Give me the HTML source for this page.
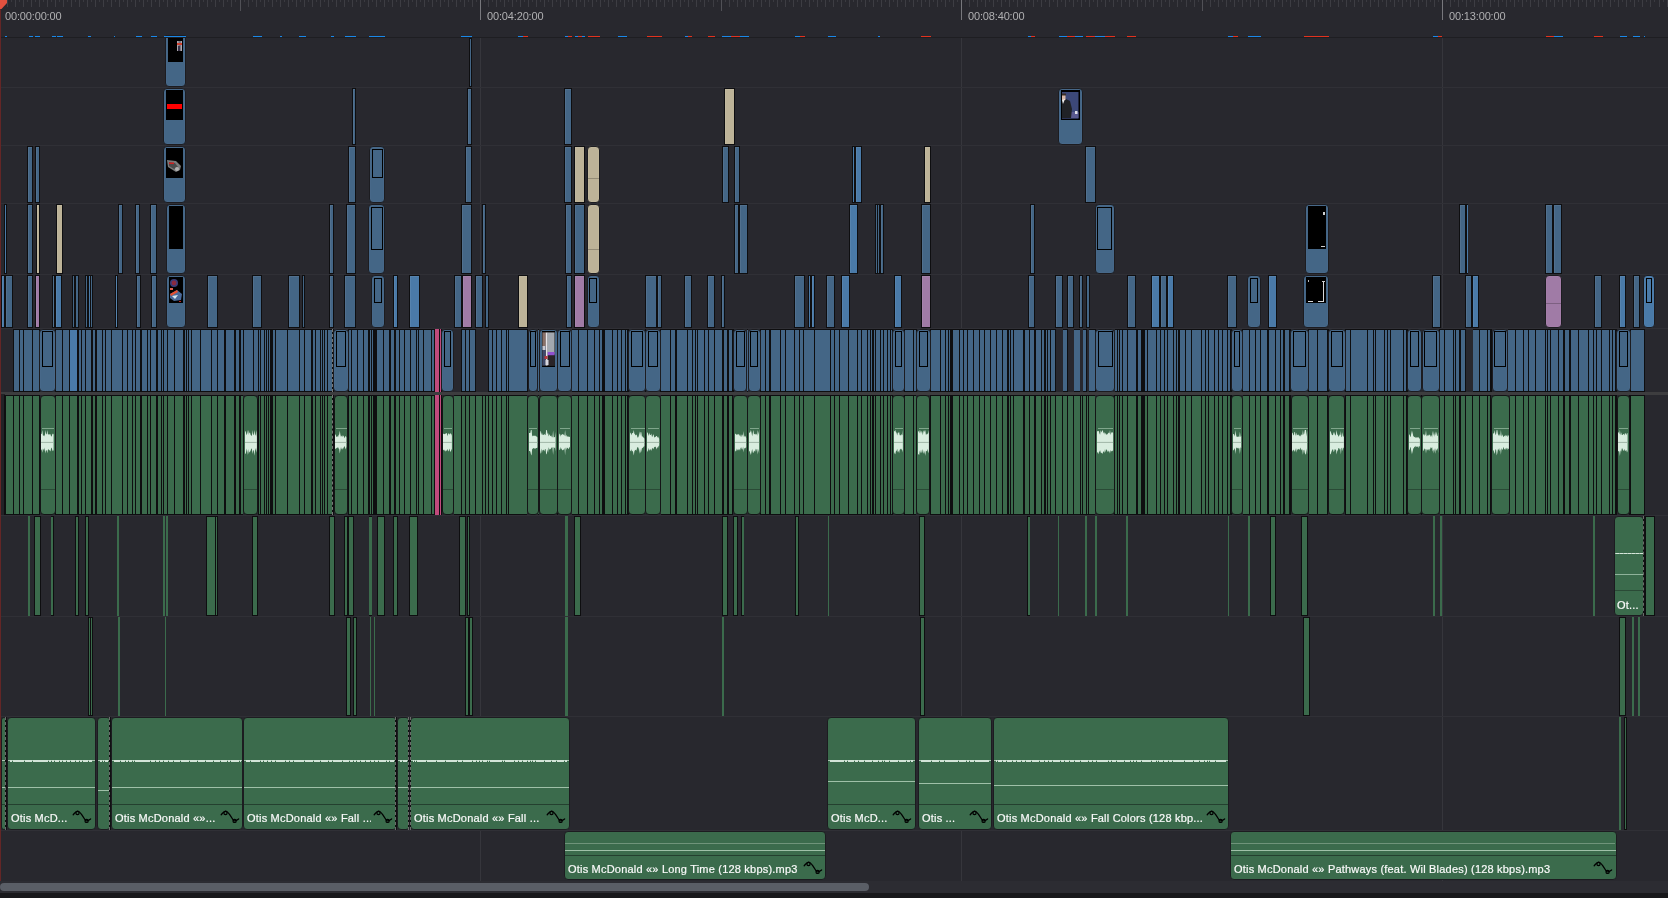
<!DOCTYPE html><html><head><meta charset="utf-8"><style>
html,body{margin:0;padding:0}
body{width:1668px;height:898px;overflow:hidden;position:relative;background:#28282e;font-family:"Liberation Sans",sans-serif}
div{position:absolute;box-sizing:border-box}
.tc{color:#b0b0b2;font-size:11px;line-height:12px;white-space:nowrap;letter-spacing:-0.15px}
.lbl{color:#fafafa;font-size:11px;line-height:14px;white-space:nowrap;overflow:hidden;letter-spacing:0.2px;-webkit-text-stroke:0.2px #fafafa}
.cv{position:absolute;left:0;top:0}
.lbl,.tc{will-change:transform}
</style></head><body>
<div style="left:7.01px;top:0.00px;width:1.00px;height:6.80px;background:#3d3d43"></div>
<div style="left:11.01px;top:0.00px;width:1.00px;height:1.90px;background:#3a3a40"></div>
<div style="left:15.02px;top:0.00px;width:1.00px;height:6.80px;background:#3d3d43"></div>
<div style="left:19.02px;top:0.00px;width:1.00px;height:1.90px;background:#3a3a40"></div>
<div style="left:23.04px;top:0.00px;width:1.00px;height:6.80px;background:#3d3d43"></div>
<div style="left:27.04px;top:0.00px;width:1.00px;height:1.90px;background:#3a3a40"></div>
<div style="left:31.06px;top:0.00px;width:1.00px;height:6.80px;background:#3d3d43"></div>
<div style="left:35.06px;top:0.00px;width:1.00px;height:1.90px;background:#3a3a40"></div>
<div style="left:39.08px;top:0.00px;width:1.00px;height:6.80px;background:#3d3d43"></div>
<div style="left:43.08px;top:0.00px;width:1.00px;height:1.90px;background:#3a3a40"></div>
<div style="left:47.09px;top:0.00px;width:1.00px;height:6.80px;background:#3d3d43"></div>
<div style="left:51.09px;top:0.00px;width:1.00px;height:1.90px;background:#3a3a40"></div>
<div style="left:55.11px;top:0.00px;width:1.00px;height:6.80px;background:#3d3d43"></div>
<div style="left:59.11px;top:0.00px;width:1.00px;height:1.90px;background:#3a3a40"></div>
<div style="left:63.13px;top:0.00px;width:1.00px;height:6.80px;background:#3d3d43"></div>
<div style="left:67.13px;top:0.00px;width:1.00px;height:1.90px;background:#3a3a40"></div>
<div style="left:71.14px;top:0.00px;width:1.00px;height:6.80px;background:#3d3d43"></div>
<div style="left:75.14px;top:0.00px;width:1.00px;height:1.90px;background:#3a3a40"></div>
<div style="left:79.16px;top:0.00px;width:1.00px;height:6.80px;background:#3d3d43"></div>
<div style="left:83.16px;top:0.00px;width:1.00px;height:1.90px;background:#3a3a40"></div>
<div style="left:87.18px;top:0.00px;width:1.00px;height:6.80px;background:#3d3d43"></div>
<div style="left:91.18px;top:0.00px;width:1.00px;height:1.90px;background:#3a3a40"></div>
<div style="left:95.19px;top:0.00px;width:1.00px;height:6.80px;background:#3d3d43"></div>
<div style="left:99.19px;top:0.00px;width:1.00px;height:1.90px;background:#3a3a40"></div>
<div style="left:103.21px;top:0.00px;width:1.00px;height:6.80px;background:#3d3d43"></div>
<div style="left:107.21px;top:0.00px;width:1.00px;height:1.90px;background:#3a3a40"></div>
<div style="left:111.23px;top:0.00px;width:1.00px;height:6.80px;background:#3d3d43"></div>
<div style="left:115.23px;top:0.00px;width:1.00px;height:1.90px;background:#3a3a40"></div>
<div style="left:119.25px;top:0.00px;width:1.00px;height:6.80px;background:#3d3d43"></div>
<div style="left:123.25px;top:0.00px;width:1.00px;height:1.90px;background:#3a3a40"></div>
<div style="left:127.26px;top:0.00px;width:1.00px;height:6.80px;background:#3d3d43"></div>
<div style="left:131.26px;top:0.00px;width:1.00px;height:1.90px;background:#3a3a40"></div>
<div style="left:135.28px;top:0.00px;width:1.00px;height:6.80px;background:#3d3d43"></div>
<div style="left:139.28px;top:0.00px;width:1.00px;height:1.90px;background:#3a3a40"></div>
<div style="left:143.30px;top:0.00px;width:1.00px;height:6.80px;background:#3d3d43"></div>
<div style="left:147.30px;top:0.00px;width:1.00px;height:1.90px;background:#3a3a40"></div>
<div style="left:151.31px;top:0.00px;width:1.00px;height:6.80px;background:#3d3d43"></div>
<div style="left:155.31px;top:0.00px;width:1.00px;height:1.90px;background:#3a3a40"></div>
<div style="left:159.33px;top:0.00px;width:1.00px;height:6.80px;background:#3d3d43"></div>
<div style="left:163.33px;top:0.00px;width:1.00px;height:1.90px;background:#3a3a40"></div>
<div style="left:167.35px;top:0.00px;width:1.00px;height:6.80px;background:#3d3d43"></div>
<div style="left:171.35px;top:0.00px;width:1.00px;height:1.90px;background:#3a3a40"></div>
<div style="left:175.36px;top:0.00px;width:1.00px;height:6.80px;background:#3d3d43"></div>
<div style="left:179.36px;top:0.00px;width:1.00px;height:1.90px;background:#3a3a40"></div>
<div style="left:183.38px;top:0.00px;width:1.00px;height:6.80px;background:#3d3d43"></div>
<div style="left:187.38px;top:0.00px;width:1.00px;height:1.90px;background:#3a3a40"></div>
<div style="left:191.40px;top:0.00px;width:1.00px;height:6.80px;background:#3d3d43"></div>
<div style="left:195.40px;top:0.00px;width:1.00px;height:1.90px;background:#3a3a40"></div>
<div style="left:199.42px;top:0.00px;width:1.00px;height:6.80px;background:#3d3d43"></div>
<div style="left:203.42px;top:0.00px;width:1.00px;height:1.90px;background:#3a3a40"></div>
<div style="left:207.43px;top:0.00px;width:1.00px;height:6.80px;background:#3d3d43"></div>
<div style="left:211.43px;top:0.00px;width:1.00px;height:1.90px;background:#3a3a40"></div>
<div style="left:215.45px;top:0.00px;width:1.00px;height:6.80px;background:#3d3d43"></div>
<div style="left:219.45px;top:0.00px;width:1.00px;height:1.90px;background:#3a3a40"></div>
<div style="left:223.47px;top:0.00px;width:1.00px;height:6.80px;background:#3d3d43"></div>
<div style="left:227.47px;top:0.00px;width:1.00px;height:1.90px;background:#3a3a40"></div>
<div style="left:231.48px;top:0.00px;width:1.00px;height:6.80px;background:#3d3d43"></div>
<div style="left:235.48px;top:0.00px;width:1.00px;height:1.90px;background:#3a3a40"></div>
<div style="left:239.50px;top:0.00px;width:1.00px;height:10.50px;background:#505056"></div>
<div style="left:243.50px;top:0.00px;width:1.00px;height:1.90px;background:#3a3a40"></div>
<div style="left:247.52px;top:0.00px;width:1.00px;height:6.80px;background:#3d3d43"></div>
<div style="left:251.52px;top:0.00px;width:1.00px;height:1.90px;background:#3a3a40"></div>
<div style="left:255.53px;top:0.00px;width:1.00px;height:6.80px;background:#3d3d43"></div>
<div style="left:259.53px;top:0.00px;width:1.00px;height:1.90px;background:#3a3a40"></div>
<div style="left:263.55px;top:0.00px;width:1.00px;height:6.80px;background:#3d3d43"></div>
<div style="left:267.55px;top:0.00px;width:1.00px;height:1.90px;background:#3a3a40"></div>
<div style="left:271.57px;top:0.00px;width:1.00px;height:6.80px;background:#3d3d43"></div>
<div style="left:275.57px;top:0.00px;width:1.00px;height:1.90px;background:#3a3a40"></div>
<div style="left:279.58px;top:0.00px;width:1.00px;height:6.80px;background:#3d3d43"></div>
<div style="left:283.58px;top:0.00px;width:1.00px;height:1.90px;background:#3a3a40"></div>
<div style="left:287.60px;top:0.00px;width:1.00px;height:6.80px;background:#3d3d43"></div>
<div style="left:291.60px;top:0.00px;width:1.00px;height:1.90px;background:#3a3a40"></div>
<div style="left:295.62px;top:0.00px;width:1.00px;height:6.80px;background:#3d3d43"></div>
<div style="left:299.62px;top:0.00px;width:1.00px;height:1.90px;background:#3a3a40"></div>
<div style="left:303.64px;top:0.00px;width:1.00px;height:6.80px;background:#3d3d43"></div>
<div style="left:307.64px;top:0.00px;width:1.00px;height:1.90px;background:#3a3a40"></div>
<div style="left:311.65px;top:0.00px;width:1.00px;height:6.80px;background:#3d3d43"></div>
<div style="left:315.65px;top:0.00px;width:1.00px;height:1.90px;background:#3a3a40"></div>
<div style="left:319.67px;top:0.00px;width:1.00px;height:6.80px;background:#3d3d43"></div>
<div style="left:323.67px;top:0.00px;width:1.00px;height:1.90px;background:#3a3a40"></div>
<div style="left:327.69px;top:0.00px;width:1.00px;height:6.80px;background:#3d3d43"></div>
<div style="left:331.69px;top:0.00px;width:1.00px;height:1.90px;background:#3a3a40"></div>
<div style="left:335.70px;top:0.00px;width:1.00px;height:6.80px;background:#3d3d43"></div>
<div style="left:339.70px;top:0.00px;width:1.00px;height:1.90px;background:#3a3a40"></div>
<div style="left:343.72px;top:0.00px;width:1.00px;height:6.80px;background:#3d3d43"></div>
<div style="left:347.72px;top:0.00px;width:1.00px;height:1.90px;background:#3a3a40"></div>
<div style="left:351.74px;top:0.00px;width:1.00px;height:6.80px;background:#3d3d43"></div>
<div style="left:355.74px;top:0.00px;width:1.00px;height:1.90px;background:#3a3a40"></div>
<div style="left:359.75px;top:0.00px;width:1.00px;height:6.80px;background:#3d3d43"></div>
<div style="left:363.75px;top:0.00px;width:1.00px;height:1.90px;background:#3a3a40"></div>
<div style="left:367.77px;top:0.00px;width:1.00px;height:6.80px;background:#3d3d43"></div>
<div style="left:371.77px;top:0.00px;width:1.00px;height:1.90px;background:#3a3a40"></div>
<div style="left:375.79px;top:0.00px;width:1.00px;height:6.80px;background:#3d3d43"></div>
<div style="left:379.79px;top:0.00px;width:1.00px;height:1.90px;background:#3a3a40"></div>
<div style="left:383.81px;top:0.00px;width:1.00px;height:6.80px;background:#3d3d43"></div>
<div style="left:387.81px;top:0.00px;width:1.00px;height:1.90px;background:#3a3a40"></div>
<div style="left:391.82px;top:0.00px;width:1.00px;height:6.80px;background:#3d3d43"></div>
<div style="left:395.82px;top:0.00px;width:1.00px;height:1.90px;background:#3a3a40"></div>
<div style="left:399.84px;top:0.00px;width:1.00px;height:6.80px;background:#3d3d43"></div>
<div style="left:403.84px;top:0.00px;width:1.00px;height:1.90px;background:#3a3a40"></div>
<div style="left:407.86px;top:0.00px;width:1.00px;height:6.80px;background:#3d3d43"></div>
<div style="left:411.86px;top:0.00px;width:1.00px;height:1.90px;background:#3a3a40"></div>
<div style="left:415.87px;top:0.00px;width:1.00px;height:6.80px;background:#3d3d43"></div>
<div style="left:419.87px;top:0.00px;width:1.00px;height:1.90px;background:#3a3a40"></div>
<div style="left:423.89px;top:0.00px;width:1.00px;height:6.80px;background:#3d3d43"></div>
<div style="left:427.89px;top:0.00px;width:1.00px;height:1.90px;background:#3a3a40"></div>
<div style="left:431.91px;top:0.00px;width:1.00px;height:6.80px;background:#3d3d43"></div>
<div style="left:435.91px;top:0.00px;width:1.00px;height:1.90px;background:#3a3a40"></div>
<div style="left:439.92px;top:0.00px;width:1.00px;height:6.80px;background:#3d3d43"></div>
<div style="left:443.92px;top:0.00px;width:1.00px;height:1.90px;background:#3a3a40"></div>
<div style="left:447.94px;top:0.00px;width:1.00px;height:6.80px;background:#3d3d43"></div>
<div style="left:451.94px;top:0.00px;width:1.00px;height:1.90px;background:#3a3a40"></div>
<div style="left:455.96px;top:0.00px;width:1.00px;height:6.80px;background:#3d3d43"></div>
<div style="left:459.96px;top:0.00px;width:1.00px;height:1.90px;background:#3a3a40"></div>
<div style="left:463.98px;top:0.00px;width:1.00px;height:6.80px;background:#3d3d43"></div>
<div style="left:467.98px;top:0.00px;width:1.00px;height:1.90px;background:#3a3a40"></div>
<div style="left:471.99px;top:0.00px;width:1.00px;height:6.80px;background:#3d3d43"></div>
<div style="left:475.99px;top:0.00px;width:1.00px;height:1.90px;background:#3a3a40"></div>
<div style="left:480.01px;top:0.00px;width:1.00px;height:20.40px;background:#77777c"></div>
<div style="left:484.01px;top:0.00px;width:1.00px;height:1.90px;background:#3a3a40"></div>
<div style="left:488.03px;top:0.00px;width:1.00px;height:6.80px;background:#3d3d43"></div>
<div style="left:492.03px;top:0.00px;width:1.00px;height:1.90px;background:#3a3a40"></div>
<div style="left:496.04px;top:0.00px;width:1.00px;height:6.80px;background:#3d3d43"></div>
<div style="left:500.04px;top:0.00px;width:1.00px;height:1.90px;background:#3a3a40"></div>
<div style="left:504.06px;top:0.00px;width:1.00px;height:6.80px;background:#3d3d43"></div>
<div style="left:508.06px;top:0.00px;width:1.00px;height:1.90px;background:#3a3a40"></div>
<div style="left:512.08px;top:0.00px;width:1.00px;height:6.80px;background:#3d3d43"></div>
<div style="left:516.08px;top:0.00px;width:1.00px;height:1.90px;background:#3a3a40"></div>
<div style="left:520.10px;top:0.00px;width:1.00px;height:6.80px;background:#3d3d43"></div>
<div style="left:524.10px;top:0.00px;width:1.00px;height:1.90px;background:#3a3a40"></div>
<div style="left:528.11px;top:0.00px;width:1.00px;height:6.80px;background:#3d3d43"></div>
<div style="left:532.11px;top:0.00px;width:1.00px;height:1.90px;background:#3a3a40"></div>
<div style="left:536.13px;top:0.00px;width:1.00px;height:6.80px;background:#3d3d43"></div>
<div style="left:540.13px;top:0.00px;width:1.00px;height:1.90px;background:#3a3a40"></div>
<div style="left:544.15px;top:0.00px;width:1.00px;height:6.80px;background:#3d3d43"></div>
<div style="left:548.15px;top:0.00px;width:1.00px;height:1.90px;background:#3a3a40"></div>
<div style="left:552.16px;top:0.00px;width:1.00px;height:6.80px;background:#3d3d43"></div>
<div style="left:556.16px;top:0.00px;width:1.00px;height:1.90px;background:#3a3a40"></div>
<div style="left:560.18px;top:0.00px;width:1.00px;height:6.80px;background:#3d3d43"></div>
<div style="left:564.18px;top:0.00px;width:1.00px;height:1.90px;background:#3a3a40"></div>
<div style="left:568.20px;top:0.00px;width:1.00px;height:6.80px;background:#3d3d43"></div>
<div style="left:572.20px;top:0.00px;width:1.00px;height:1.90px;background:#3a3a40"></div>
<div style="left:576.21px;top:0.00px;width:1.00px;height:6.80px;background:#3d3d43"></div>
<div style="left:580.21px;top:0.00px;width:1.00px;height:1.90px;background:#3a3a40"></div>
<div style="left:584.23px;top:0.00px;width:1.00px;height:6.80px;background:#3d3d43"></div>
<div style="left:588.23px;top:0.00px;width:1.00px;height:1.90px;background:#3a3a40"></div>
<div style="left:592.25px;top:0.00px;width:1.00px;height:6.80px;background:#3d3d43"></div>
<div style="left:596.25px;top:0.00px;width:1.00px;height:1.90px;background:#3a3a40"></div>
<div style="left:600.26px;top:0.00px;width:1.00px;height:6.80px;background:#3d3d43"></div>
<div style="left:604.26px;top:0.00px;width:1.00px;height:1.90px;background:#3a3a40"></div>
<div style="left:608.28px;top:0.00px;width:1.00px;height:6.80px;background:#3d3d43"></div>
<div style="left:612.28px;top:0.00px;width:1.00px;height:1.90px;background:#3a3a40"></div>
<div style="left:616.30px;top:0.00px;width:1.00px;height:6.80px;background:#3d3d43"></div>
<div style="left:620.30px;top:0.00px;width:1.00px;height:1.90px;background:#3a3a40"></div>
<div style="left:624.32px;top:0.00px;width:1.00px;height:6.80px;background:#3d3d43"></div>
<div style="left:628.32px;top:0.00px;width:1.00px;height:1.90px;background:#3a3a40"></div>
<div style="left:632.33px;top:0.00px;width:1.00px;height:6.80px;background:#3d3d43"></div>
<div style="left:636.33px;top:0.00px;width:1.00px;height:1.90px;background:#3a3a40"></div>
<div style="left:640.35px;top:0.00px;width:1.00px;height:6.80px;background:#3d3d43"></div>
<div style="left:644.35px;top:0.00px;width:1.00px;height:1.90px;background:#3a3a40"></div>
<div style="left:648.37px;top:0.00px;width:1.00px;height:6.80px;background:#3d3d43"></div>
<div style="left:652.37px;top:0.00px;width:1.00px;height:1.90px;background:#3a3a40"></div>
<div style="left:656.38px;top:0.00px;width:1.00px;height:6.80px;background:#3d3d43"></div>
<div style="left:660.38px;top:0.00px;width:1.00px;height:1.90px;background:#3a3a40"></div>
<div style="left:664.40px;top:0.00px;width:1.00px;height:6.80px;background:#3d3d43"></div>
<div style="left:668.40px;top:0.00px;width:1.00px;height:1.90px;background:#3a3a40"></div>
<div style="left:672.42px;top:0.00px;width:1.00px;height:6.80px;background:#3d3d43"></div>
<div style="left:676.42px;top:0.00px;width:1.00px;height:1.90px;background:#3a3a40"></div>
<div style="left:680.43px;top:0.00px;width:1.00px;height:6.80px;background:#3d3d43"></div>
<div style="left:684.43px;top:0.00px;width:1.00px;height:1.90px;background:#3a3a40"></div>
<div style="left:688.45px;top:0.00px;width:1.00px;height:6.80px;background:#3d3d43"></div>
<div style="left:692.45px;top:0.00px;width:1.00px;height:1.90px;background:#3a3a40"></div>
<div style="left:696.47px;top:0.00px;width:1.00px;height:6.80px;background:#3d3d43"></div>
<div style="left:700.47px;top:0.00px;width:1.00px;height:1.90px;background:#3a3a40"></div>
<div style="left:704.49px;top:0.00px;width:1.00px;height:6.80px;background:#3d3d43"></div>
<div style="left:708.49px;top:0.00px;width:1.00px;height:1.90px;background:#3a3a40"></div>
<div style="left:712.50px;top:0.00px;width:1.00px;height:6.80px;background:#3d3d43"></div>
<div style="left:716.50px;top:0.00px;width:1.00px;height:1.90px;background:#3a3a40"></div>
<div style="left:720.52px;top:0.00px;width:1.00px;height:10.50px;background:#505056"></div>
<div style="left:724.52px;top:0.00px;width:1.00px;height:1.90px;background:#3a3a40"></div>
<div style="left:728.54px;top:0.00px;width:1.00px;height:6.80px;background:#3d3d43"></div>
<div style="left:732.54px;top:0.00px;width:1.00px;height:1.90px;background:#3a3a40"></div>
<div style="left:736.55px;top:0.00px;width:1.00px;height:6.80px;background:#3d3d43"></div>
<div style="left:740.55px;top:0.00px;width:1.00px;height:1.90px;background:#3a3a40"></div>
<div style="left:744.57px;top:0.00px;width:1.00px;height:6.80px;background:#3d3d43"></div>
<div style="left:748.57px;top:0.00px;width:1.00px;height:1.90px;background:#3a3a40"></div>
<div style="left:752.59px;top:0.00px;width:1.00px;height:6.80px;background:#3d3d43"></div>
<div style="left:756.59px;top:0.00px;width:1.00px;height:1.90px;background:#3a3a40"></div>
<div style="left:760.61px;top:0.00px;width:1.00px;height:6.80px;background:#3d3d43"></div>
<div style="left:764.61px;top:0.00px;width:1.00px;height:1.90px;background:#3a3a40"></div>
<div style="left:768.62px;top:0.00px;width:1.00px;height:6.80px;background:#3d3d43"></div>
<div style="left:772.62px;top:0.00px;width:1.00px;height:1.90px;background:#3a3a40"></div>
<div style="left:776.64px;top:0.00px;width:1.00px;height:6.80px;background:#3d3d43"></div>
<div style="left:780.64px;top:0.00px;width:1.00px;height:1.90px;background:#3a3a40"></div>
<div style="left:784.66px;top:0.00px;width:1.00px;height:6.80px;background:#3d3d43"></div>
<div style="left:788.66px;top:0.00px;width:1.00px;height:1.90px;background:#3a3a40"></div>
<div style="left:792.67px;top:0.00px;width:1.00px;height:6.80px;background:#3d3d43"></div>
<div style="left:796.67px;top:0.00px;width:1.00px;height:1.90px;background:#3a3a40"></div>
<div style="left:800.69px;top:0.00px;width:1.00px;height:6.80px;background:#3d3d43"></div>
<div style="left:804.69px;top:0.00px;width:1.00px;height:1.90px;background:#3a3a40"></div>
<div style="left:808.71px;top:0.00px;width:1.00px;height:6.80px;background:#3d3d43"></div>
<div style="left:812.71px;top:0.00px;width:1.00px;height:1.90px;background:#3a3a40"></div>
<div style="left:816.72px;top:0.00px;width:1.00px;height:6.80px;background:#3d3d43"></div>
<div style="left:820.72px;top:0.00px;width:1.00px;height:1.90px;background:#3a3a40"></div>
<div style="left:824.74px;top:0.00px;width:1.00px;height:6.80px;background:#3d3d43"></div>
<div style="left:828.74px;top:0.00px;width:1.00px;height:1.90px;background:#3a3a40"></div>
<div style="left:832.76px;top:0.00px;width:1.00px;height:6.80px;background:#3d3d43"></div>
<div style="left:836.76px;top:0.00px;width:1.00px;height:1.90px;background:#3a3a40"></div>
<div style="left:840.77px;top:0.00px;width:1.00px;height:6.80px;background:#3d3d43"></div>
<div style="left:844.77px;top:0.00px;width:1.00px;height:1.90px;background:#3a3a40"></div>
<div style="left:848.79px;top:0.00px;width:1.00px;height:6.80px;background:#3d3d43"></div>
<div style="left:852.79px;top:0.00px;width:1.00px;height:1.90px;background:#3a3a40"></div>
<div style="left:856.81px;top:0.00px;width:1.00px;height:6.80px;background:#3d3d43"></div>
<div style="left:860.81px;top:0.00px;width:1.00px;height:1.90px;background:#3a3a40"></div>
<div style="left:864.83px;top:0.00px;width:1.00px;height:6.80px;background:#3d3d43"></div>
<div style="left:868.83px;top:0.00px;width:1.00px;height:1.90px;background:#3a3a40"></div>
<div style="left:872.84px;top:0.00px;width:1.00px;height:6.80px;background:#3d3d43"></div>
<div style="left:876.84px;top:0.00px;width:1.00px;height:1.90px;background:#3a3a40"></div>
<div style="left:880.86px;top:0.00px;width:1.00px;height:6.80px;background:#3d3d43"></div>
<div style="left:884.86px;top:0.00px;width:1.00px;height:1.90px;background:#3a3a40"></div>
<div style="left:888.88px;top:0.00px;width:1.00px;height:6.80px;background:#3d3d43"></div>
<div style="left:892.88px;top:0.00px;width:1.00px;height:1.90px;background:#3a3a40"></div>
<div style="left:896.89px;top:0.00px;width:1.00px;height:6.80px;background:#3d3d43"></div>
<div style="left:900.89px;top:0.00px;width:1.00px;height:1.90px;background:#3a3a40"></div>
<div style="left:904.91px;top:0.00px;width:1.00px;height:6.80px;background:#3d3d43"></div>
<div style="left:908.91px;top:0.00px;width:1.00px;height:1.90px;background:#3a3a40"></div>
<div style="left:912.93px;top:0.00px;width:1.00px;height:6.80px;background:#3d3d43"></div>
<div style="left:916.93px;top:0.00px;width:1.00px;height:1.90px;background:#3a3a40"></div>
<div style="left:920.94px;top:0.00px;width:1.00px;height:6.80px;background:#3d3d43"></div>
<div style="left:924.94px;top:0.00px;width:1.00px;height:1.90px;background:#3a3a40"></div>
<div style="left:928.96px;top:0.00px;width:1.00px;height:6.80px;background:#3d3d43"></div>
<div style="left:932.96px;top:0.00px;width:1.00px;height:1.90px;background:#3a3a40"></div>
<div style="left:936.98px;top:0.00px;width:1.00px;height:6.80px;background:#3d3d43"></div>
<div style="left:940.98px;top:0.00px;width:1.00px;height:1.90px;background:#3a3a40"></div>
<div style="left:945.00px;top:0.00px;width:1.00px;height:6.80px;background:#3d3d43"></div>
<div style="left:949.00px;top:0.00px;width:1.00px;height:1.90px;background:#3a3a40"></div>
<div style="left:953.01px;top:0.00px;width:1.00px;height:6.80px;background:#3d3d43"></div>
<div style="left:957.01px;top:0.00px;width:1.00px;height:1.90px;background:#3a3a40"></div>
<div style="left:961.03px;top:0.00px;width:1.00px;height:20.40px;background:#77777c"></div>
<div style="left:965.03px;top:0.00px;width:1.00px;height:1.90px;background:#3a3a40"></div>
<div style="left:969.05px;top:0.00px;width:1.00px;height:6.80px;background:#3d3d43"></div>
<div style="left:973.05px;top:0.00px;width:1.00px;height:1.90px;background:#3a3a40"></div>
<div style="left:977.06px;top:0.00px;width:1.00px;height:6.80px;background:#3d3d43"></div>
<div style="left:981.06px;top:0.00px;width:1.00px;height:1.90px;background:#3a3a40"></div>
<div style="left:985.08px;top:0.00px;width:1.00px;height:6.80px;background:#3d3d43"></div>
<div style="left:989.08px;top:0.00px;width:1.00px;height:1.90px;background:#3a3a40"></div>
<div style="left:993.10px;top:0.00px;width:1.00px;height:6.80px;background:#3d3d43"></div>
<div style="left:997.10px;top:0.00px;width:1.00px;height:1.90px;background:#3a3a40"></div>
<div style="left:1001.11px;top:0.00px;width:1.00px;height:6.80px;background:#3d3d43"></div>
<div style="left:1005.11px;top:0.00px;width:1.00px;height:1.90px;background:#3a3a40"></div>
<div style="left:1009.13px;top:0.00px;width:1.00px;height:6.80px;background:#3d3d43"></div>
<div style="left:1013.13px;top:0.00px;width:1.00px;height:1.90px;background:#3a3a40"></div>
<div style="left:1017.15px;top:0.00px;width:1.00px;height:6.80px;background:#3d3d43"></div>
<div style="left:1021.15px;top:0.00px;width:1.00px;height:1.90px;background:#3a3a40"></div>
<div style="left:1025.17px;top:0.00px;width:1.00px;height:6.80px;background:#3d3d43"></div>
<div style="left:1029.17px;top:0.00px;width:1.00px;height:1.90px;background:#3a3a40"></div>
<div style="left:1033.18px;top:0.00px;width:1.00px;height:6.80px;background:#3d3d43"></div>
<div style="left:1037.18px;top:0.00px;width:1.00px;height:1.90px;background:#3a3a40"></div>
<div style="left:1041.20px;top:0.00px;width:1.00px;height:6.80px;background:#3d3d43"></div>
<div style="left:1045.20px;top:0.00px;width:1.00px;height:1.90px;background:#3a3a40"></div>
<div style="left:1049.22px;top:0.00px;width:1.00px;height:6.80px;background:#3d3d43"></div>
<div style="left:1053.22px;top:0.00px;width:1.00px;height:1.90px;background:#3a3a40"></div>
<div style="left:1057.23px;top:0.00px;width:1.00px;height:6.80px;background:#3d3d43"></div>
<div style="left:1061.23px;top:0.00px;width:1.00px;height:1.90px;background:#3a3a40"></div>
<div style="left:1065.25px;top:0.00px;width:1.00px;height:6.80px;background:#3d3d43"></div>
<div style="left:1069.25px;top:0.00px;width:1.00px;height:1.90px;background:#3a3a40"></div>
<div style="left:1073.27px;top:0.00px;width:1.00px;height:6.80px;background:#3d3d43"></div>
<div style="left:1077.27px;top:0.00px;width:1.00px;height:1.90px;background:#3a3a40"></div>
<div style="left:1081.28px;top:0.00px;width:1.00px;height:6.80px;background:#3d3d43"></div>
<div style="left:1085.28px;top:0.00px;width:1.00px;height:1.90px;background:#3a3a40"></div>
<div style="left:1089.30px;top:0.00px;width:1.00px;height:6.80px;background:#3d3d43"></div>
<div style="left:1093.30px;top:0.00px;width:1.00px;height:1.90px;background:#3a3a40"></div>
<div style="left:1097.32px;top:0.00px;width:1.00px;height:6.80px;background:#3d3d43"></div>
<div style="left:1101.32px;top:0.00px;width:1.00px;height:1.90px;background:#3a3a40"></div>
<div style="left:1105.34px;top:0.00px;width:1.00px;height:6.80px;background:#3d3d43"></div>
<div style="left:1109.34px;top:0.00px;width:1.00px;height:1.90px;background:#3a3a40"></div>
<div style="left:1113.35px;top:0.00px;width:1.00px;height:6.80px;background:#3d3d43"></div>
<div style="left:1117.35px;top:0.00px;width:1.00px;height:1.90px;background:#3a3a40"></div>
<div style="left:1121.37px;top:0.00px;width:1.00px;height:6.80px;background:#3d3d43"></div>
<div style="left:1125.37px;top:0.00px;width:1.00px;height:1.90px;background:#3a3a40"></div>
<div style="left:1129.39px;top:0.00px;width:1.00px;height:6.80px;background:#3d3d43"></div>
<div style="left:1133.39px;top:0.00px;width:1.00px;height:1.90px;background:#3a3a40"></div>
<div style="left:1137.40px;top:0.00px;width:1.00px;height:6.80px;background:#3d3d43"></div>
<div style="left:1141.40px;top:0.00px;width:1.00px;height:1.90px;background:#3a3a40"></div>
<div style="left:1145.42px;top:0.00px;width:1.00px;height:6.80px;background:#3d3d43"></div>
<div style="left:1149.42px;top:0.00px;width:1.00px;height:1.90px;background:#3a3a40"></div>
<div style="left:1153.44px;top:0.00px;width:1.00px;height:6.80px;background:#3d3d43"></div>
<div style="left:1157.44px;top:0.00px;width:1.00px;height:1.90px;background:#3a3a40"></div>
<div style="left:1161.45px;top:0.00px;width:1.00px;height:6.80px;background:#3d3d43"></div>
<div style="left:1165.45px;top:0.00px;width:1.00px;height:1.90px;background:#3a3a40"></div>
<div style="left:1169.47px;top:0.00px;width:1.00px;height:6.80px;background:#3d3d43"></div>
<div style="left:1173.47px;top:0.00px;width:1.00px;height:1.90px;background:#3a3a40"></div>
<div style="left:1177.49px;top:0.00px;width:1.00px;height:6.80px;background:#3d3d43"></div>
<div style="left:1181.49px;top:0.00px;width:1.00px;height:1.90px;background:#3a3a40"></div>
<div style="left:1185.51px;top:0.00px;width:1.00px;height:6.80px;background:#3d3d43"></div>
<div style="left:1189.51px;top:0.00px;width:1.00px;height:1.90px;background:#3a3a40"></div>
<div style="left:1193.52px;top:0.00px;width:1.00px;height:6.80px;background:#3d3d43"></div>
<div style="left:1197.52px;top:0.00px;width:1.00px;height:1.90px;background:#3a3a40"></div>
<div style="left:1201.54px;top:0.00px;width:1.00px;height:10.50px;background:#505056"></div>
<div style="left:1205.54px;top:0.00px;width:1.00px;height:1.90px;background:#3a3a40"></div>
<div style="left:1209.56px;top:0.00px;width:1.00px;height:6.80px;background:#3d3d43"></div>
<div style="left:1213.56px;top:0.00px;width:1.00px;height:1.90px;background:#3a3a40"></div>
<div style="left:1217.57px;top:0.00px;width:1.00px;height:6.80px;background:#3d3d43"></div>
<div style="left:1221.57px;top:0.00px;width:1.00px;height:1.90px;background:#3a3a40"></div>
<div style="left:1225.59px;top:0.00px;width:1.00px;height:6.80px;background:#3d3d43"></div>
<div style="left:1229.59px;top:0.00px;width:1.00px;height:1.90px;background:#3a3a40"></div>
<div style="left:1233.61px;top:0.00px;width:1.00px;height:6.80px;background:#3d3d43"></div>
<div style="left:1237.61px;top:0.00px;width:1.00px;height:1.90px;background:#3a3a40"></div>
<div style="left:1241.62px;top:0.00px;width:1.00px;height:6.80px;background:#3d3d43"></div>
<div style="left:1245.62px;top:0.00px;width:1.00px;height:1.90px;background:#3a3a40"></div>
<div style="left:1249.64px;top:0.00px;width:1.00px;height:6.80px;background:#3d3d43"></div>
<div style="left:1253.64px;top:0.00px;width:1.00px;height:1.90px;background:#3a3a40"></div>
<div style="left:1257.66px;top:0.00px;width:1.00px;height:6.80px;background:#3d3d43"></div>
<div style="left:1261.66px;top:0.00px;width:1.00px;height:1.90px;background:#3a3a40"></div>
<div style="left:1265.68px;top:0.00px;width:1.00px;height:6.80px;background:#3d3d43"></div>
<div style="left:1269.68px;top:0.00px;width:1.00px;height:1.90px;background:#3a3a40"></div>
<div style="left:1273.69px;top:0.00px;width:1.00px;height:6.80px;background:#3d3d43"></div>
<div style="left:1277.69px;top:0.00px;width:1.00px;height:1.90px;background:#3a3a40"></div>
<div style="left:1281.71px;top:0.00px;width:1.00px;height:6.80px;background:#3d3d43"></div>
<div style="left:1285.71px;top:0.00px;width:1.00px;height:1.90px;background:#3a3a40"></div>
<div style="left:1289.73px;top:0.00px;width:1.00px;height:6.80px;background:#3d3d43"></div>
<div style="left:1293.73px;top:0.00px;width:1.00px;height:1.90px;background:#3a3a40"></div>
<div style="left:1297.74px;top:0.00px;width:1.00px;height:6.80px;background:#3d3d43"></div>
<div style="left:1301.74px;top:0.00px;width:1.00px;height:1.90px;background:#3a3a40"></div>
<div style="left:1305.76px;top:0.00px;width:1.00px;height:6.80px;background:#3d3d43"></div>
<div style="left:1309.76px;top:0.00px;width:1.00px;height:1.90px;background:#3a3a40"></div>
<div style="left:1313.78px;top:0.00px;width:1.00px;height:6.80px;background:#3d3d43"></div>
<div style="left:1317.78px;top:0.00px;width:1.00px;height:1.90px;background:#3a3a40"></div>
<div style="left:1321.79px;top:0.00px;width:1.00px;height:6.80px;background:#3d3d43"></div>
<div style="left:1325.79px;top:0.00px;width:1.00px;height:1.90px;background:#3a3a40"></div>
<div style="left:1329.81px;top:0.00px;width:1.00px;height:6.80px;background:#3d3d43"></div>
<div style="left:1333.81px;top:0.00px;width:1.00px;height:1.90px;background:#3a3a40"></div>
<div style="left:1337.83px;top:0.00px;width:1.00px;height:6.80px;background:#3d3d43"></div>
<div style="left:1341.83px;top:0.00px;width:1.00px;height:1.90px;background:#3a3a40"></div>
<div style="left:1345.85px;top:0.00px;width:1.00px;height:6.80px;background:#3d3d43"></div>
<div style="left:1349.85px;top:0.00px;width:1.00px;height:1.90px;background:#3a3a40"></div>
<div style="left:1353.86px;top:0.00px;width:1.00px;height:6.80px;background:#3d3d43"></div>
<div style="left:1357.86px;top:0.00px;width:1.00px;height:1.90px;background:#3a3a40"></div>
<div style="left:1361.88px;top:0.00px;width:1.00px;height:6.80px;background:#3d3d43"></div>
<div style="left:1365.88px;top:0.00px;width:1.00px;height:1.90px;background:#3a3a40"></div>
<div style="left:1369.90px;top:0.00px;width:1.00px;height:6.80px;background:#3d3d43"></div>
<div style="left:1373.90px;top:0.00px;width:1.00px;height:1.90px;background:#3a3a40"></div>
<div style="left:1377.91px;top:0.00px;width:1.00px;height:6.80px;background:#3d3d43"></div>
<div style="left:1381.91px;top:0.00px;width:1.00px;height:1.90px;background:#3a3a40"></div>
<div style="left:1385.93px;top:0.00px;width:1.00px;height:6.80px;background:#3d3d43"></div>
<div style="left:1389.93px;top:0.00px;width:1.00px;height:1.90px;background:#3a3a40"></div>
<div style="left:1393.95px;top:0.00px;width:1.00px;height:6.80px;background:#3d3d43"></div>
<div style="left:1397.95px;top:0.00px;width:1.00px;height:1.90px;background:#3a3a40"></div>
<div style="left:1401.96px;top:0.00px;width:1.00px;height:6.80px;background:#3d3d43"></div>
<div style="left:1405.96px;top:0.00px;width:1.00px;height:1.90px;background:#3a3a40"></div>
<div style="left:1409.98px;top:0.00px;width:1.00px;height:6.80px;background:#3d3d43"></div>
<div style="left:1413.98px;top:0.00px;width:1.00px;height:1.90px;background:#3a3a40"></div>
<div style="left:1418.00px;top:0.00px;width:1.00px;height:6.80px;background:#3d3d43"></div>
<div style="left:1422.00px;top:0.00px;width:1.00px;height:1.90px;background:#3a3a40"></div>
<div style="left:1426.02px;top:0.00px;width:1.00px;height:6.80px;background:#3d3d43"></div>
<div style="left:1430.02px;top:0.00px;width:1.00px;height:1.90px;background:#3a3a40"></div>
<div style="left:1434.03px;top:0.00px;width:1.00px;height:6.80px;background:#3d3d43"></div>
<div style="left:1438.03px;top:0.00px;width:1.00px;height:1.90px;background:#3a3a40"></div>
<div style="left:1442.05px;top:0.00px;width:1.00px;height:20.40px;background:#77777c"></div>
<div style="left:1446.05px;top:0.00px;width:1.00px;height:1.90px;background:#3a3a40"></div>
<div style="left:1450.07px;top:0.00px;width:1.00px;height:6.80px;background:#3d3d43"></div>
<div style="left:1454.07px;top:0.00px;width:1.00px;height:1.90px;background:#3a3a40"></div>
<div style="left:1458.08px;top:0.00px;width:1.00px;height:6.80px;background:#3d3d43"></div>
<div style="left:1462.08px;top:0.00px;width:1.00px;height:1.90px;background:#3a3a40"></div>
<div style="left:1466.10px;top:0.00px;width:1.00px;height:6.80px;background:#3d3d43"></div>
<div style="left:1470.10px;top:0.00px;width:1.00px;height:1.90px;background:#3a3a40"></div>
<div style="left:1474.12px;top:0.00px;width:1.00px;height:6.80px;background:#3d3d43"></div>
<div style="left:1478.12px;top:0.00px;width:1.00px;height:1.90px;background:#3a3a40"></div>
<div style="left:1482.13px;top:0.00px;width:1.00px;height:6.80px;background:#3d3d43"></div>
<div style="left:1486.13px;top:0.00px;width:1.00px;height:1.90px;background:#3a3a40"></div>
<div style="left:1490.15px;top:0.00px;width:1.00px;height:6.80px;background:#3d3d43"></div>
<div style="left:1494.15px;top:0.00px;width:1.00px;height:1.90px;background:#3a3a40"></div>
<div style="left:1498.17px;top:0.00px;width:1.00px;height:6.80px;background:#3d3d43"></div>
<div style="left:1502.17px;top:0.00px;width:1.00px;height:1.90px;background:#3a3a40"></div>
<div style="left:1506.19px;top:0.00px;width:1.00px;height:6.80px;background:#3d3d43"></div>
<div style="left:1510.19px;top:0.00px;width:1.00px;height:1.90px;background:#3a3a40"></div>
<div style="left:1514.20px;top:0.00px;width:1.00px;height:6.80px;background:#3d3d43"></div>
<div style="left:1518.20px;top:0.00px;width:1.00px;height:1.90px;background:#3a3a40"></div>
<div style="left:1522.22px;top:0.00px;width:1.00px;height:6.80px;background:#3d3d43"></div>
<div style="left:1526.22px;top:0.00px;width:1.00px;height:1.90px;background:#3a3a40"></div>
<div style="left:1530.24px;top:0.00px;width:1.00px;height:6.80px;background:#3d3d43"></div>
<div style="left:1534.24px;top:0.00px;width:1.00px;height:1.90px;background:#3a3a40"></div>
<div style="left:1538.25px;top:0.00px;width:1.00px;height:6.80px;background:#3d3d43"></div>
<div style="left:1542.25px;top:0.00px;width:1.00px;height:1.90px;background:#3a3a40"></div>
<div style="left:1546.27px;top:0.00px;width:1.00px;height:6.80px;background:#3d3d43"></div>
<div style="left:1550.27px;top:0.00px;width:1.00px;height:1.90px;background:#3a3a40"></div>
<div style="left:1554.29px;top:0.00px;width:1.00px;height:6.80px;background:#3d3d43"></div>
<div style="left:1558.29px;top:0.00px;width:1.00px;height:1.90px;background:#3a3a40"></div>
<div style="left:1562.30px;top:0.00px;width:1.00px;height:6.80px;background:#3d3d43"></div>
<div style="left:1566.30px;top:0.00px;width:1.00px;height:1.90px;background:#3a3a40"></div>
<div style="left:1570.32px;top:0.00px;width:1.00px;height:6.80px;background:#3d3d43"></div>
<div style="left:1574.32px;top:0.00px;width:1.00px;height:1.90px;background:#3a3a40"></div>
<div style="left:1578.34px;top:0.00px;width:1.00px;height:6.80px;background:#3d3d43"></div>
<div style="left:1582.34px;top:0.00px;width:1.00px;height:1.90px;background:#3a3a40"></div>
<div style="left:1586.36px;top:0.00px;width:1.00px;height:6.80px;background:#3d3d43"></div>
<div style="left:1590.36px;top:0.00px;width:1.00px;height:1.90px;background:#3a3a40"></div>
<div style="left:1594.37px;top:0.00px;width:1.00px;height:6.80px;background:#3d3d43"></div>
<div style="left:1598.37px;top:0.00px;width:1.00px;height:1.90px;background:#3a3a40"></div>
<div style="left:1602.39px;top:0.00px;width:1.00px;height:6.80px;background:#3d3d43"></div>
<div style="left:1606.39px;top:0.00px;width:1.00px;height:1.90px;background:#3a3a40"></div>
<div style="left:1610.41px;top:0.00px;width:1.00px;height:6.80px;background:#3d3d43"></div>
<div style="left:1614.41px;top:0.00px;width:1.00px;height:1.90px;background:#3a3a40"></div>
<div style="left:1618.42px;top:0.00px;width:1.00px;height:6.80px;background:#3d3d43"></div>
<div style="left:1622.42px;top:0.00px;width:1.00px;height:1.90px;background:#3a3a40"></div>
<div style="left:1626.44px;top:0.00px;width:1.00px;height:6.80px;background:#3d3d43"></div>
<div style="left:1630.44px;top:0.00px;width:1.00px;height:1.90px;background:#3a3a40"></div>
<div style="left:1634.46px;top:0.00px;width:1.00px;height:6.80px;background:#3d3d43"></div>
<div style="left:1638.46px;top:0.00px;width:1.00px;height:1.90px;background:#3a3a40"></div>
<div style="left:1642.47px;top:0.00px;width:1.00px;height:6.80px;background:#3d3d43"></div>
<div style="left:1646.47px;top:0.00px;width:1.00px;height:1.90px;background:#3a3a40"></div>
<div style="left:1650.49px;top:0.00px;width:1.00px;height:6.80px;background:#3d3d43"></div>
<div style="left:1654.49px;top:0.00px;width:1.00px;height:1.90px;background:#3a3a40"></div>
<div style="left:1658.51px;top:0.00px;width:1.00px;height:6.80px;background:#3d3d43"></div>
<div style="left:1662.51px;top:0.00px;width:1.00px;height:1.90px;background:#3a3a40"></div>
<div style="left:1666.53px;top:0.00px;width:1.00px;height:6.80px;background:#3d3d43"></div>
<div style="left:1670.53px;top:0.00px;width:1.00px;height:1.90px;background:#3a3a40"></div>
<div class="tc" style="left:5px;top:10px">00:00:00:00</div>
<div class="tc" style="left:486.5px;top:10px">00:04:20:00</div>
<div class="tc" style="left:967.5px;top:10px">00:08:40:00</div>
<div class="tc" style="left:1448.5px;top:10px">00:13:00:00</div>
<div style="left:480.10px;top:38.00px;width:1.00px;height:843.00px;background:#36363c"></div>
<div style="left:961.10px;top:38.00px;width:1.00px;height:843.00px;background:#36363c"></div>
<div style="left:1441.90px;top:38.00px;width:1.00px;height:843.00px;background:#36363c"></div>
<div style="left:0.00px;top:87.00px;width:1668.00px;height:0.90px;background:#303036"></div>
<div style="left:0.00px;top:145.00px;width:1668.00px;height:0.90px;background:#303036"></div>
<div style="left:0.00px;top:203.00px;width:1668.00px;height:0.90px;background:#303036"></div>
<div style="left:0.00px;top:274.05px;width:1668.00px;height:0.90px;background:#303036"></div>
<div style="left:0.00px;top:327.90px;width:1668.00px;height:0.90px;background:#303036"></div>
<div style="left:0.00px;top:515.00px;width:1668.00px;height:0.90px;background:#303036"></div>
<div style="left:0.00px;top:616.00px;width:1668.00px;height:0.90px;background:#303036"></div>
<div style="left:0.00px;top:716.00px;width:1668.00px;height:0.90px;background:#303036"></div>
<div style="left:0.00px;top:829.90px;width:1668.00px;height:0.90px;background:#303036"></div>
<div style="left:0.00px;top:391.80px;width:1668.00px;height:3.10px;background:#3d3d3f"></div>
<div style="left:165.00px;top:35.00px;width:21.00px;height:51.75px;background:#446686;border:1px solid #1c1c20;border-radius:0 0 4px 4px;box-shadow:inset 0 0 0 1px #54779a30"></div>
<div style="left:167.70px;top:38.00px;width:15.60px;height:24.45px;background:#000;overflow:hidden"></div>
<div style="left:176.90px;top:40.80px;width:5.10px;height:10.20px;background:linear-gradient(90deg,#b8b4b8,#6a6470 60%,#c8c0c8)"></div><div style="left:176.90px;top:42.70px;width:5.10px;height:2.00px;background:#d04030"></div><div style="left:178.00px;top:46.00px;width:2.00px;height:5.00px;background:#3a3448"></div>
<div style="left:468.80px;top:37.60px;width:3.40px;height:49.15px;background:#0e0e10"></div>
<div style="left:469.80px;top:38.60px;width:1.40px;height:47.15px;background:#446686"></div>
<div style="left:163.40px;top:88.10px;width:22.20px;height:56.65px;background:#446686;border:1px solid #1c1c20;border-radius:4px;box-shadow:inset 0 0 0 1px #54779a30"></div>
<div style="left:166.10px;top:90.30px;width:16.80px;height:30.15px;background:#000;overflow:hidden"></div>
<div style="left:166.90px;top:104.20px;width:15.10px;height:4.90px;background:#ff0000"></div>
<div style="left:352.00px;top:88.10px;width:3.60px;height:56.65px;background:#446686;border:1px solid #0e0e10;box-shadow:inset 1px 1px 0 rgba(255,255,255,0.07)"></div>
<div style="left:466.80px;top:88.10px;width:5.10px;height:56.65px;background:#446686;border:1px solid #0e0e10;box-shadow:inset 1px 1px 0 rgba(255,255,255,0.07)"></div>
<div style="left:564.00px;top:88.10px;width:7.80px;height:56.65px;background:#446686;border:1px solid #0e0e10;box-shadow:inset 1px 1px 0 rgba(255,255,255,0.07)"></div>
<div style="left:724.00px;top:88.10px;width:10.80px;height:56.65px;background:#bdb398;border:1px solid #0e0e10;box-shadow:inset 1px 1px 0 rgba(255,255,255,0.07)"></div>
<div style="left:1058.00px;top:88.10px;width:24.90px;height:56.65px;background:#446686;border:1px solid #1c1c20;border-radius:4px;box-shadow:inset 0 0 0 1px #54779a30"></div>
<div style="left:1060.70px;top:90.30px;width:19.50px;height:30.15px;background:#000;overflow:hidden"></div>
<svg style="position:absolute;left:1061.2px;top:91.1px" width="18.5" height="28.7"><rect x="1" y="1" width="16.5" height="26.7" fill="#3c4878"/><rect x="9" y="21" width="8.5" height="6" fill="#5a5a90"/><polygon points="1,10 5,8 9,10 11,18 10,27 1,27" fill="#202226"/><rect x="1" y="3" width="3.5" height="6" fill="#d8b8a8"/><polygon points="1,9 4,8 2,13" fill="#f0f0f0"/><rect x="1" y="2.5" width="4" height="2" fill="#3a2e28"/><rect x="14" y="20" width="2.5" height="3" fill="#e0e0e8"/></svg>
<div style="left:27.00px;top:146.10px;width:5.70px;height:56.65px;background:#446686;border:1px solid #0e0e10;box-shadow:inset 1px 1px 0 rgba(255,255,255,0.07)"></div>
<div style="left:35.30px;top:146.10px;width:4.50px;height:56.65px;background:#446686;border:1px solid #0e0e10;box-shadow:inset 1px 1px 0 rgba(255,255,255,0.07)"></div>
<div style="left:163.40px;top:146.10px;width:22.20px;height:56.65px;background:#446686;border:1px solid #1c1c20;border-radius:4px;box-shadow:inset 0 0 0 1px #54779a30"></div>
<div style="left:166.10px;top:148.30px;width:16.80px;height:30.15px;background:#000;overflow:hidden"></div>
<svg style="position:absolute;left:166px;top:158px" width="16" height="15"><polygon points="1,2 10,3 15,8 14,12 10,14 2,9" fill="#7a7a7a"/><polygon points="3,4 9,5 12,9 8,11 3,8" fill="#4a4a4a"/><rect x="3" y="4.5" width="5" height="1.5" fill="#d02020"/><circle cx="11" cy="11" r="2" fill="#b0b0b0"/></svg>
<div style="left:348.00px;top:146.10px;width:7.60px;height:56.65px;background:#446686;border:1px solid #0e0e10;box-shadow:inset 1px 1px 0 rgba(255,255,255,0.07)"></div>
<div style="left:369.10px;top:146.10px;width:15.80px;height:56.65px;background:#446686;border:1px solid #1c1c20;border-radius:4px;box-shadow:inset 0 0 0 1px #54779a30"></div>
<div style="left:371.50px;top:148.50px;width:11.00px;height:29.95px;border:1px solid #000;background:#446686"></div>
<div style="left:465.30px;top:146.10px;width:6.60px;height:56.65px;background:#446686;border:1px solid #0e0e10;box-shadow:inset 1px 1px 0 rgba(255,255,255,0.07)"></div>
<div style="left:564.00px;top:146.10px;width:7.80px;height:56.65px;background:#446686;border:1px solid #0e0e10;box-shadow:inset 1px 1px 0 rgba(255,255,255,0.07)"></div>
<div style="left:574.40px;top:146.10px;width:10.30px;height:56.65px;background:#bdb398;border:1px solid #0e0e10;box-shadow:inset 1px 1px 0 rgba(255,255,255,0.07)"></div>
<div style="left:586.90px;top:146.10px;width:13.00px;height:56.65px;background:#bdb398;border:1px solid #1c1c20;border-radius:4px;box-shadow:inset 0 0 0 1px #d3c8a830"></div>
<div style="left:587.90px;top:177.85px;width:11.00px;height:0.80px;background:#00000038"></div>
<div style="left:722.20px;top:146.10px;width:6.50px;height:56.65px;background:#446686;border:1px solid #0e0e10;box-shadow:inset 1px 1px 0 rgba(255,255,255,0.07)"></div>
<div style="left:734.30px;top:146.10px;width:5.50px;height:56.65px;background:#446686;border:1px solid #0e0e10;box-shadow:inset 1px 1px 0 rgba(255,255,255,0.07)"></div>
<div style="left:851.80px;top:146.10px;width:3.20px;height:56.65px;background:#0e0e10"></div>
<div style="left:852.80px;top:147.10px;width:1.20px;height:54.65px;background:#4a7aa8"></div>
<div style="left:854.80px;top:146.10px;width:7.20px;height:56.65px;background:#4a7aa8;border:1px solid #0e0e10;box-shadow:inset 1px 1px 0 rgba(255,255,255,0.07)"></div>
<div style="left:923.90px;top:146.10px;width:6.70px;height:56.65px;background:#bdb398;border:1px solid #0e0e10;box-shadow:inset 1px 1px 0 rgba(255,255,255,0.07)"></div>
<div style="left:1085.00px;top:146.10px;width:10.60px;height:56.65px;background:#446686;border:1px solid #0e0e10;box-shadow:inset 1px 1px 0 rgba(255,255,255,0.07)"></div>
<div style="left:4.30px;top:204.10px;width:2.90px;height:69.70px;background:#0e0e10"></div>
<div style="left:5.30px;top:205.10px;width:0.90px;height:67.70px;background:#4a7aa8"></div>
<div style="left:27.00px;top:204.10px;width:5.70px;height:69.70px;background:#446686;border:1px solid #0e0e10;box-shadow:inset 1px 1px 0 rgba(255,255,255,0.07)"></div>
<div style="left:36.00px;top:204.10px;width:3.80px;height:69.70px;background:#bdb398;border:1px solid #0e0e10;box-shadow:inset 1px 1px 0 rgba(255,255,255,0.07)"></div>
<div style="left:56.00px;top:204.10px;width:7.00px;height:69.70px;background:#bdb398;border:1px solid #0e0e10;box-shadow:inset 1px 1px 0 rgba(255,255,255,0.07)"></div>
<div style="left:117.90px;top:204.10px;width:5.00px;height:69.70px;background:#446686;border:1px solid #0e0e10;box-shadow:inset 1px 1px 0 rgba(255,255,255,0.07)"></div>
<div style="left:135.20px;top:204.10px;width:5.30px;height:69.70px;background:#446686;border:1px solid #0e0e10;box-shadow:inset 1px 1px 0 rgba(255,255,255,0.07)"></div>
<div style="left:150.00px;top:204.10px;width:6.60px;height:69.70px;background:#446686;border:1px solid #0e0e10;box-shadow:inset 1px 1px 0 rgba(255,255,255,0.07)"></div>
<div style="left:166.10px;top:204.10px;width:19.50px;height:69.70px;background:#446686;border:1px solid #1c1c20;border-radius:4px;box-shadow:inset 0 0 0 1px #54779a30"></div>
<div style="left:168.80px;top:206.30px;width:14.10px;height:43.20px;background:#000;overflow:hidden"></div>
<div style="left:329.00px;top:204.10px;width:5.00px;height:69.70px;background:#446686;border:1px solid #0e0e10;box-shadow:inset 1px 1px 0 rgba(255,255,255,0.07)"></div>
<div style="left:346.00px;top:204.10px;width:9.60px;height:69.70px;background:#446686;border:1px solid #0e0e10;box-shadow:inset 1px 1px 0 rgba(255,255,255,0.07)"></div>
<div style="left:368.10px;top:204.10px;width:16.80px;height:69.70px;background:#446686;border:1px solid #1c1c20;border-radius:4px;box-shadow:inset 0 0 0 1px #54779a30"></div>
<div style="left:370.50px;top:206.50px;width:12.00px;height:43.00px;border:1px solid #000;background:#446686"></div>
<div style="left:461.00px;top:204.10px;width:10.90px;height:69.70px;background:#446686;border:1px solid #0e0e10;box-shadow:inset 1px 1px 0 rgba(255,255,255,0.07)"></div>
<div style="left:481.70px;top:204.10px;width:4.30px;height:69.70px;background:#446686;border:1px solid #0e0e10;box-shadow:inset 1px 1px 0 rgba(255,255,255,0.07)"></div>
<div style="left:565.30px;top:204.10px;width:6.50px;height:69.70px;background:#446686;border:1px solid #0e0e10;box-shadow:inset 1px 1px 0 rgba(255,255,255,0.07)"></div>
<div style="left:574.00px;top:204.10px;width:10.70px;height:69.70px;background:#446686;border:1px solid #0e0e10;box-shadow:inset 1px 1px 0 rgba(255,255,255,0.07)"></div>
<div style="left:586.90px;top:204.10px;width:13.00px;height:69.70px;background:#bdb398;border:1px solid #1c1c20;border-radius:4px;box-shadow:inset 0 0 0 1px #d3c8a830"></div>
<div style="left:587.90px;top:248.90px;width:11.00px;height:0.80px;background:#00000038"></div>
<div style="left:734.30px;top:204.10px;width:5.00px;height:69.70px;background:#446686;border:1px solid #0e0e10;box-shadow:inset 1px 1px 0 rgba(255,255,255,0.07)"></div>
<div style="left:739.30px;top:204.10px;width:8.60px;height:69.70px;background:#446686;border:1px solid #0e0e10;box-shadow:inset 1px 1px 0 rgba(255,255,255,0.07)"></div>
<div style="left:849.00px;top:204.10px;width:8.60px;height:69.70px;background:#4a7aa8;border:1px solid #0e0e10;box-shadow:inset 1px 1px 0 rgba(255,255,255,0.07)"></div>
<div style="left:874.80px;top:204.10px;width:2.90px;height:69.70px;background:#0e0e10"></div>
<div style="left:875.80px;top:205.10px;width:0.90px;height:67.70px;background:#446686"></div>
<div style="left:877.30px;top:204.10px;width:2.90px;height:69.70px;background:#0e0e10"></div>
<div style="left:878.30px;top:205.10px;width:0.90px;height:67.70px;background:#446686"></div>
<div style="left:880.00px;top:204.10px;width:3.60px;height:69.70px;background:#446686;border:1px solid #0e0e10;box-shadow:inset 1px 1px 0 rgba(255,255,255,0.07)"></div>
<div style="left:921.00px;top:204.10px;width:9.60px;height:69.70px;background:#446686;border:1px solid #0e0e10;box-shadow:inset 1px 1px 0 rgba(255,255,255,0.07)"></div>
<div style="left:1030.00px;top:204.10px;width:4.70px;height:69.70px;background:#446686;border:1px solid #0e0e10;box-shadow:inset 1px 1px 0 rgba(255,255,255,0.07)"></div>
<div style="left:1095.00px;top:204.10px;width:19.60px;height:69.70px;background:#446686;border:1px solid #1c1c20;border-radius:4px;box-shadow:inset 0 0 0 1px #54779a30"></div>
<div style="left:1097.40px;top:206.50px;width:14.80px;height:43.00px;border:1px solid #000;background:#446686"></div>
<div style="left:1305.30px;top:204.10px;width:23.30px;height:69.70px;background:#446686;border:1px solid #1c1c20;border-radius:4px;box-shadow:inset 0 0 0 1px #54779a30"></div>
<div style="left:1308.00px;top:206.30px;width:17.90px;height:43.20px;background:#000;overflow:hidden"></div>
<div style="left:1323.00px;top:211.50px;width:1.50px;height:3.00px;background:#cfcfcf"></div><div style="left:1321.00px;top:245.50px;width:4.00px;height:1.00px;background:#cfcfcf"></div>
<div style="left:1459.00px;top:204.10px;width:6.80px;height:69.70px;background:#446686;border:1px solid #0e0e10;box-shadow:inset 1px 1px 0 rgba(255,255,255,0.07)"></div>
<div style="left:1465.60px;top:204.10px;width:2.40px;height:69.70px;background:#0e0e10"></div>
<div style="left:1466.60px;top:205.10px;width:0.50px;height:67.70px;background:#4a7aa8"></div>
<div style="left:1545.00px;top:204.10px;width:7.70px;height:69.70px;background:#446686;border:1px solid #0e0e10;box-shadow:inset 1px 1px 0 rgba(255,255,255,0.07)"></div>
<div style="left:1552.70px;top:204.10px;width:9.10px;height:69.70px;background:#446686;border:1px solid #0e0e10;box-shadow:inset 1px 1px 0 rgba(255,255,255,0.07)"></div>
<div style="left:1.30px;top:275.15px;width:3.70px;height:52.50px;background:#4a7aa8;border:1px solid #0e0e10;box-shadow:inset 1px 1px 0 rgba(255,255,255,0.07)"></div>
<div style="left:5.00px;top:275.15px;width:8.00px;height:52.50px;background:#446686;border:1px solid #0e0e10;box-shadow:inset 1px 1px 0 rgba(255,255,255,0.07)"></div>
<div style="left:27.00px;top:275.15px;width:5.70px;height:52.50px;background:#446686;border:1px solid #0e0e10;box-shadow:inset 1px 1px 0 rgba(255,255,255,0.07)"></div>
<div style="left:35.30px;top:275.15px;width:5.00px;height:52.50px;background:#a07ba6;border:1px solid #0e0e10;box-shadow:inset 1px 1px 0 rgba(255,255,255,0.07)"></div>
<div style="left:51.60px;top:275.15px;width:3.80px;height:52.50px;background:#446686;border:1px solid #0e0e10;box-shadow:inset 1px 1px 0 rgba(255,255,255,0.07)"></div>
<div style="left:55.40px;top:275.15px;width:7.10px;height:52.50px;background:#4a7aa8;border:1px solid #0e0e10;box-shadow:inset 1px 1px 0 rgba(255,255,255,0.07)"></div>
<div style="left:71.60px;top:275.15px;width:3.90px;height:52.50px;background:#0e0e10"></div>
<div style="left:72.60px;top:276.15px;width:1.90px;height:50.50px;background:#446686"></div>
<div style="left:75.10px;top:275.15px;width:3.70px;height:52.50px;background:#0e0e10"></div>
<div style="left:76.10px;top:276.15px;width:1.70px;height:50.50px;background:#446686"></div>
<div style="left:85.40px;top:275.15px;width:2.80px;height:52.50px;background:#0e0e10"></div>
<div style="left:86.40px;top:276.15px;width:0.80px;height:50.50px;background:#446686"></div>
<div style="left:87.80px;top:275.15px;width:2.70px;height:52.50px;background:#0e0e10"></div>
<div style="left:88.80px;top:276.15px;width:0.70px;height:50.50px;background:#4a7aa8"></div>
<div style="left:90.10px;top:275.15px;width:2.80px;height:52.50px;background:#0e0e10"></div>
<div style="left:91.10px;top:276.15px;width:0.80px;height:50.50px;background:#446686"></div>
<div style="left:114.60px;top:275.15px;width:3.80px;height:52.50px;background:#4a7aa8;border:1px solid #0e0e10;box-shadow:inset 1px 1px 0 rgba(255,255,255,0.07)"></div>
<div style="left:135.50px;top:275.15px;width:5.00px;height:52.50px;background:#446686;border:1px solid #0e0e10;box-shadow:inset 1px 1px 0 rgba(255,255,255,0.07)"></div>
<div style="left:150.60px;top:275.15px;width:6.00px;height:52.50px;background:#446686;border:1px solid #0e0e10;box-shadow:inset 1px 1px 0 rgba(255,255,255,0.07)"></div>
<div style="left:166.40px;top:275.15px;width:19.20px;height:52.50px;background:#446686;border:1px solid #1c1c20;border-radius:4px;box-shadow:inset 0 0 0 1px #54779a30"></div>
<div style="left:169.10px;top:277.35px;width:13.80px;height:26.00px;background:#000;overflow:hidden"></div>
<svg style="position:absolute;left:169px;top:278px" width="14" height="25"><circle cx="5" cy="5" r="4" fill="#3a3c78"/><circle cx="5" cy="5" r="2.4" fill="#8a2a40"/><rect x="1" y="10" width="3" height="2" fill="#e06050"/><polygon points="1,16 8,12 13,16 12,22 5,23 1,20" fill="#4a6a9a"/><polygon points="1,16 8,12 9,14 2,18" fill="#e85030"/><polygon points="3,18 9,17 6,21" fill="#d8e8f0"/><rect x="10" y="23" width="2" height="1" fill="#c02020"/></svg>
<div style="left:206.50px;top:275.15px;width:11.10px;height:52.50px;background:#446686;border:1px solid #0e0e10;box-shadow:inset 1px 1px 0 rgba(255,255,255,0.07)"></div>
<div style="left:252.30px;top:275.15px;width:9.60px;height:52.50px;background:#446686;border:1px solid #0e0e10;box-shadow:inset 1px 1px 0 rgba(255,255,255,0.07)"></div>
<div style="left:288.30px;top:275.15px;width:11.40px;height:52.50px;background:#446686;border:1px solid #0e0e10;box-shadow:inset 1px 1px 0 rgba(255,255,255,0.07)"></div>
<div style="left:301.80px;top:275.15px;width:3.10px;height:52.50px;background:#0e0e10"></div>
<div style="left:302.80px;top:276.15px;width:1.10px;height:50.50px;background:#446686"></div>
<div style="left:329.40px;top:275.15px;width:4.30px;height:52.50px;background:#446686;border:1px solid #0e0e10;box-shadow:inset 1px 1px 0 rgba(255,255,255,0.07)"></div>
<div style="left:344.30px;top:275.15px;width:11.30px;height:52.50px;background:#446686;border:1px solid #0e0e10;box-shadow:inset 1px 1px 0 rgba(255,255,255,0.07)"></div>
<div style="left:371.40px;top:275.15px;width:13.50px;height:52.50px;background:#446686;border:1px solid #1c1c20;border-radius:4px;box-shadow:inset 0 0 0 1px #54779a30"></div>
<div style="left:373.80px;top:277.55px;width:8.70px;height:25.80px;border:1px solid #000;background:#446686"></div>
<div style="left:393.40px;top:275.15px;width:4.50px;height:52.50px;background:#4a7aa8;border:1px solid #0e0e10;box-shadow:inset 1px 1px 0 rgba(255,255,255,0.07)"></div>
<div style="left:409.00px;top:275.15px;width:11.00px;height:52.50px;background:#4a7aa8;border:1px solid #0e0e10;box-shadow:inset 1px 1px 0 rgba(255,255,255,0.07)"></div>
<div style="left:453.50px;top:275.15px;width:8.00px;height:52.50px;background:#446686;border:1px solid #0e0e10;box-shadow:inset 1px 1px 0 rgba(255,255,255,0.07)"></div>
<div style="left:461.50px;top:275.15px;width:10.10px;height:52.50px;background:#a07ba6;border:1px solid #0e0e10;box-shadow:inset 1px 1px 0 rgba(255,255,255,0.07)"></div>
<div style="left:475.40px;top:275.15px;width:7.60px;height:52.50px;background:#446686;border:1px solid #0e0e10;box-shadow:inset 1px 1px 0 rgba(255,255,255,0.07)"></div>
<div style="left:484.80px;top:275.15px;width:3.90px;height:52.50px;background:#0e0e10"></div>
<div style="left:485.80px;top:276.15px;width:1.90px;height:50.50px;background:#446686"></div>
<div style="left:517.70px;top:275.15px;width:10.10px;height:52.50px;background:#bdb398;border:1px solid #0e0e10;box-shadow:inset 1px 1px 0 rgba(255,255,255,0.07)"></div>
<div style="left:565.60px;top:275.15px;width:6.00px;height:52.50px;background:#446686;border:1px solid #0e0e10;box-shadow:inset 1px 1px 0 rgba(255,255,255,0.07)"></div>
<div style="left:574.40px;top:275.15px;width:10.60px;height:52.50px;background:#a07ba6;border:1px solid #0e0e10;box-shadow:inset 1px 1px 0 rgba(255,255,255,0.07)"></div>
<div style="left:586.90px;top:275.15px;width:13.00px;height:52.50px;background:#446686;border:1px solid #1c1c20;border-radius:4px;box-shadow:inset 0 0 0 1px #54779a30"></div>
<div style="left:589.30px;top:277.55px;width:8.20px;height:25.80px;border:1px solid #000;background:#446686"></div>
<div style="left:645.40px;top:275.15px;width:11.30px;height:52.50px;background:#446686;border:1px solid #0e0e10;box-shadow:inset 1px 1px 0 rgba(255,255,255,0.07)"></div>
<div style="left:656.70px;top:275.15px;width:5.00px;height:52.50px;background:#446686;border:1px solid #0e0e10;box-shadow:inset 1px 1px 0 rgba(255,255,255,0.07)"></div>
<div style="left:684.00px;top:275.15px;width:7.50px;height:52.50px;background:#446686;border:1px solid #0e0e10;box-shadow:inset 1px 1px 0 rgba(255,255,255,0.07)"></div>
<div style="left:707.00px;top:275.15px;width:8.00px;height:52.50px;background:#446686;border:1px solid #0e0e10;box-shadow:inset 1px 1px 0 rgba(255,255,255,0.07)"></div>
<div style="left:721.00px;top:275.15px;width:4.00px;height:52.50px;background:#446686;border:1px solid #0e0e10;box-shadow:inset 1px 1px 0 rgba(255,255,255,0.07)"></div>
<div style="left:794.40px;top:275.15px;width:10.40px;height:52.50px;background:#446686;border:1px solid #0e0e10;box-shadow:inset 1px 1px 0 rgba(255,255,255,0.07)"></div>
<div style="left:807.60px;top:275.15px;width:3.60px;height:52.50px;background:#0e0e10"></div>
<div style="left:808.60px;top:276.15px;width:1.60px;height:50.50px;background:#4a7aa8"></div>
<div style="left:811.00px;top:275.15px;width:3.80px;height:52.50px;background:#4a7aa8;border:1px solid #0e0e10;box-shadow:inset 1px 1px 0 rgba(255,255,255,0.07)"></div>
<div style="left:826.00px;top:275.15px;width:9.00px;height:52.50px;background:#446686;border:1px solid #0e0e10;box-shadow:inset 1px 1px 0 rgba(255,255,255,0.07)"></div>
<div style="left:840.80px;top:275.15px;width:8.80px;height:52.50px;background:#4a7aa8;border:1px solid #0e0e10;box-shadow:inset 1px 1px 0 rgba(255,255,255,0.07)"></div>
<div style="left:893.60px;top:275.15px;width:8.90px;height:52.50px;background:#4a7aa8;border:1px solid #0e0e10;box-shadow:inset 1px 1px 0 rgba(255,255,255,0.07)"></div>
<div style="left:920.60px;top:275.15px;width:10.00px;height:52.50px;background:#a07ba6;border:1px solid #0e0e10;box-shadow:inset 1px 1px 0 rgba(255,255,255,0.07)"></div>
<div style="left:1027.60px;top:275.15px;width:7.10px;height:52.50px;background:#446686;border:1px solid #0e0e10;box-shadow:inset 1px 1px 0 rgba(255,255,255,0.07)"></div>
<div style="left:1055.30px;top:275.15px;width:7.60px;height:52.50px;background:#446686;border:1px solid #0e0e10;box-shadow:inset 1px 1px 0 rgba(255,255,255,0.07)"></div>
<div style="left:1067.40px;top:275.15px;width:6.30px;height:52.50px;background:#446686;border:1px solid #0e0e10;box-shadow:inset 1px 1px 0 rgba(255,255,255,0.07)"></div>
<div style="left:1079.20px;top:275.15px;width:3.80px;height:52.50px;background:#446686;border:1px solid #0e0e10;box-shadow:inset 1px 1px 0 rgba(255,255,255,0.07)"></div>
<div style="left:1086.10px;top:275.15px;width:3.90px;height:52.50px;background:#0e0e10"></div>
<div style="left:1087.10px;top:276.15px;width:1.90px;height:50.50px;background:#446686"></div>
<div style="left:1126.60px;top:275.15px;width:9.00px;height:52.50px;background:#446686;border:1px solid #0e0e10;box-shadow:inset 1px 1px 0 rgba(255,255,255,0.07)"></div>
<div style="left:1150.50px;top:275.15px;width:9.80px;height:52.50px;background:#4a7aa8;border:1px solid #0e0e10;box-shadow:inset 1px 1px 0 rgba(255,255,255,0.07)"></div>
<div style="left:1160.30px;top:275.15px;width:6.60px;height:52.50px;background:#446686;border:1px solid #0e0e10;box-shadow:inset 1px 1px 0 rgba(255,255,255,0.07)"></div>
<div style="left:1166.90px;top:275.15px;width:6.80px;height:52.50px;background:#4a7aa8;border:1px solid #0e0e10;box-shadow:inset 1px 1px 0 rgba(255,255,255,0.07)"></div>
<div style="left:1227.30px;top:275.15px;width:9.60px;height:52.50px;background:#446686;border:1px solid #0e0e10;box-shadow:inset 1px 1px 0 rgba(255,255,255,0.07)"></div>
<div style="left:1247.40px;top:275.15px;width:13.20px;height:52.50px;background:#446686;border:1px solid #1c1c20;border-radius:4px;box-shadow:inset 0 0 0 1px #54779a30"></div>
<div style="left:1249.80px;top:277.55px;width:8.40px;height:25.80px;border:1px solid #000;background:#446686"></div>
<div style="left:1268.00px;top:275.15px;width:8.50px;height:52.50px;background:#4a7aa8;border:1px solid #0e0e10;box-shadow:inset 1px 1px 0 rgba(255,255,255,0.07)"></div>
<div style="left:1303.40px;top:275.15px;width:25.20px;height:52.50px;background:#446686;border:1px solid #1c1c20;border-radius:4px;box-shadow:inset 0 0 0 1px #54779a30"></div>
<div style="left:1306.10px;top:277.35px;width:19.80px;height:26.00px;background:#000;overflow:hidden"></div>
<div style="left:1323.00px;top:281.00px;width:0.80px;height:20.50px;background:#d8d8d8"></div><div style="left:1307.50px;top:301.00px;width:5.50px;height:1.00px;background:#d8d8d8"></div><div style="left:1318.00px;top:301.00px;width:5.50px;height:1.00px;background:#d8d8d8"></div><div style="left:1307.50px;top:280.00px;width:1.00px;height:1.50px;background:#bbb"></div><div style="left:1322.00px;top:280.50px;width:2.50px;height:1.50px;background:#ccc"></div>
<div style="left:1432.00px;top:275.15px;width:9.40px;height:52.50px;background:#446686;border:1px solid #0e0e10;box-shadow:inset 1px 1px 0 rgba(255,255,255,0.07)"></div>
<div style="left:1465.30px;top:275.15px;width:6.70px;height:52.50px;background:#446686;border:1px solid #0e0e10;box-shadow:inset 1px 1px 0 rgba(255,255,255,0.07)"></div>
<div style="left:1472.00px;top:275.15px;width:7.00px;height:52.50px;background:#4a7aa8;border:1px solid #0e0e10;box-shadow:inset 1px 1px 0 rgba(255,255,255,0.07)"></div>
<div style="left:1545.40px;top:275.15px;width:16.20px;height:52.50px;background:#a07ba6;border:1px solid #1c1c20;border-radius:4px;box-shadow:inset 0 0 0 1px #b690bb30"></div>
<div style="left:1546.40px;top:302.75px;width:14.20px;height:0.80px;background:#00000038"></div>
<div style="left:1593.50px;top:275.15px;width:8.30px;height:52.50px;background:#446686;border:1px solid #0e0e10;box-shadow:inset 1px 1px 0 rgba(255,255,255,0.07)"></div>
<div style="left:1619.40px;top:275.15px;width:7.10px;height:52.50px;background:#4a7aa8;border:1px solid #0e0e10;box-shadow:inset 1px 1px 0 rgba(255,255,255,0.07)"></div>
<div style="left:1632.50px;top:275.15px;width:7.10px;height:52.50px;background:#446686;border:1px solid #0e0e10;box-shadow:inset 1px 1px 0 rgba(255,255,255,0.07)"></div>
<div style="left:1643.40px;top:275.15px;width:11.20px;height:52.50px;background:#4a7aa8;border:1px solid #1c1c20;border-radius:4px;box-shadow:inset 0 0 0 1px #5a8cba30"></div>
<div style="left:1645.80px;top:277.55px;width:6.40px;height:25.80px;border:1px solid #000;background:#4a7aa8"></div>
<div style="left:13.40px;top:329.00px;width:1631.20px;height:62.80px;background:#446686;border:1px solid #0e0e10"></div>
<div style="left:69.70px;top:330.00px;width:8.30px;height:60.80px;background:#4a7aa8"></div>
<div style="left:12.80px;top:329.00px;width:1.20px;height:62.80px;background:#0e0e10"></div>
<div style="left:19.20px;top:329.00px;width:1.20px;height:62.80px;background:#0e0e10"></div>
<div style="left:22.90px;top:329.00px;width:1.20px;height:62.80px;background:#0e0e10"></div>
<div style="left:32.10px;top:329.00px;width:1.20px;height:62.80px;background:#0e0e10"></div>
<div style="left:38.80px;top:329.00px;width:1.20px;height:62.80px;background:#0e0e10"></div>
<div style="left:54.40px;top:329.00px;width:1.20px;height:62.80px;background:#0e0e10"></div>
<div style="left:61.80px;top:329.00px;width:1.20px;height:62.80px;background:#0e0e10"></div>
<div style="left:69.10px;top:329.00px;width:1.20px;height:62.80px;background:#0e0e10"></div>
<div style="left:77.40px;top:329.00px;width:1.20px;height:62.80px;background:#0e0e10"></div>
<div style="left:80.80px;top:329.00px;width:1.20px;height:62.80px;background:#0e0e10"></div>
<div style="left:85.00px;top:329.00px;width:1.20px;height:62.80px;background:#0e0e10"></div>
<div style="left:91.40px;top:329.00px;width:1.20px;height:62.80px;background:#0e0e10"></div>
<div style="left:95.40px;top:329.00px;width:1.20px;height:62.80px;background:#0e0e10"></div>
<div style="left:101.80px;top:329.00px;width:1.20px;height:62.80px;background:#0e0e10"></div>
<div style="left:104.80px;top:329.00px;width:1.20px;height:62.80px;background:#0e0e10"></div>
<div style="left:111.00px;top:329.00px;width:1.20px;height:62.80px;background:#0e0e10"></div>
<div style="left:121.60px;top:329.00px;width:1.20px;height:62.80px;background:#0e0e10"></div>
<div style="left:127.00px;top:329.00px;width:1.20px;height:62.80px;background:#0e0e10"></div>
<div style="left:132.00px;top:329.00px;width:1.20px;height:62.80px;background:#0e0e10"></div>
<div style="left:134.50px;top:329.00px;width:1.20px;height:62.80px;background:#0e0e10"></div>
<div style="left:140.40px;top:329.00px;width:1.20px;height:62.80px;background:#0e0e10"></div>
<div style="left:147.10px;top:329.00px;width:1.20px;height:62.80px;background:#0e0e10"></div>
<div style="left:149.60px;top:329.00px;width:1.20px;height:62.80px;background:#0e0e10"></div>
<div style="left:156.40px;top:329.00px;width:1.20px;height:62.80px;background:#0e0e10"></div>
<div style="left:160.60px;top:329.00px;width:1.20px;height:62.80px;background:#0e0e10"></div>
<div style="left:163.10px;top:329.00px;width:1.20px;height:62.80px;background:#0e0e10"></div>
<div style="left:166.80px;top:329.00px;width:1.20px;height:62.80px;background:#0e0e10"></div>
<div style="left:174.00px;top:329.00px;width:1.20px;height:62.80px;background:#0e0e10"></div>
<div style="left:182.70px;top:329.00px;width:1.20px;height:62.80px;background:#0e0e10"></div>
<div style="left:184.10px;top:329.00px;width:1.20px;height:62.80px;background:#0e0e10"></div>
<div style="left:185.70px;top:329.00px;width:1.20px;height:62.80px;background:#0e0e10"></div>
<div style="left:188.30px;top:329.00px;width:1.20px;height:62.80px;background:#0e0e10"></div>
<div style="left:190.80px;top:329.00px;width:1.20px;height:62.80px;background:#0e0e10"></div>
<div style="left:200.00px;top:329.00px;width:1.20px;height:62.80px;background:#0e0e10"></div>
<div style="left:210.90px;top:329.00px;width:1.20px;height:62.80px;background:#0e0e10"></div>
<div style="left:216.80px;top:329.00px;width:1.20px;height:62.80px;background:#0e0e10"></div>
<div style="left:224.40px;top:329.00px;width:1.20px;height:62.80px;background:#0e0e10"></div>
<div style="left:234.40px;top:329.00px;width:1.20px;height:62.80px;background:#0e0e10"></div>
<div style="left:239.40px;top:329.00px;width:1.20px;height:62.80px;background:#0e0e10"></div>
<div style="left:242.80px;top:329.00px;width:1.20px;height:62.80px;background:#0e0e10"></div>
<div style="left:252.90px;top:329.00px;width:1.20px;height:62.80px;background:#0e0e10"></div>
<div style="left:257.90px;top:329.00px;width:1.20px;height:62.80px;background:#0e0e10"></div>
<div style="left:259.60px;top:329.00px;width:1.20px;height:62.80px;background:#0e0e10"></div>
<div style="left:263.80px;top:329.00px;width:1.20px;height:62.80px;background:#0e0e10"></div>
<div style="left:266.30px;top:329.00px;width:1.20px;height:62.80px;background:#0e0e10"></div>
<div style="left:268.00px;top:329.00px;width:1.20px;height:62.80px;background:#0e0e10"></div>
<div style="left:269.70px;top:329.00px;width:1.20px;height:62.80px;background:#0e0e10"></div>
<div style="left:271.40px;top:329.00px;width:1.20px;height:62.80px;background:#0e0e10"></div>
<div style="left:274.80px;top:329.00px;width:1.20px;height:62.80px;background:#0e0e10"></div>
<div style="left:287.00px;top:329.00px;width:1.20px;height:62.80px;background:#0e0e10"></div>
<div style="left:298.80px;top:329.00px;width:1.20px;height:62.80px;background:#0e0e10"></div>
<div style="left:303.80px;top:329.00px;width:1.20px;height:62.80px;background:#0e0e10"></div>
<div style="left:311.40px;top:329.00px;width:1.20px;height:62.80px;background:#0e0e10"></div>
<div style="left:315.10px;top:329.00px;width:1.20px;height:62.80px;background:#0e0e10"></div>
<div style="left:319.80px;top:329.00px;width:1.20px;height:62.80px;background:#0e0e10"></div>
<div style="left:321.80px;top:329.00px;width:1.20px;height:62.80px;background:#0e0e10"></div>
<div style="left:324.00px;top:329.00px;width:1.20px;height:62.80px;background:#0e0e10"></div>
<div style="left:327.30px;top:329.00px;width:1.20px;height:62.80px;background:#0e0e10"></div>
<div style="left:331.80px;top:329.00px;width:1.20px;height:62.80px;background:#0e0e10"></div>
<div style="left:333.20px;top:329.00px;width:1.20px;height:62.80px;background:#0e0e10"></div>
<div style="left:347.40px;top:329.00px;width:1.20px;height:62.80px;background:#0e0e10"></div>
<div style="left:348.30px;top:329.00px;width:1.20px;height:62.80px;background:#0e0e10"></div>
<div style="left:350.80px;top:329.00px;width:1.20px;height:62.80px;background:#0e0e10"></div>
<div style="left:356.70px;top:329.00px;width:1.20px;height:62.80px;background:#0e0e10"></div>
<div style="left:363.10px;top:329.00px;width:1.20px;height:62.80px;background:#0e0e10"></div>
<div style="left:368.40px;top:329.00px;width:1.20px;height:62.80px;background:#0e0e10"></div>
<div style="left:371.00px;top:329.00px;width:1.20px;height:62.80px;background:#0e0e10"></div>
<div style="left:373.40px;top:329.00px;width:1.20px;height:62.80px;background:#0e0e10"></div>
<div style="left:375.40px;top:329.00px;width:1.20px;height:62.80px;background:#0e0e10"></div>
<div style="left:382.70px;top:329.00px;width:1.20px;height:62.80px;background:#0e0e10"></div>
<div style="left:389.40px;top:329.00px;width:1.20px;height:62.80px;background:#0e0e10"></div>
<div style="left:394.40px;top:329.00px;width:1.20px;height:62.80px;background:#0e0e10"></div>
<div style="left:398.70px;top:329.00px;width:1.20px;height:62.80px;background:#0e0e10"></div>
<div style="left:403.70px;top:329.00px;width:1.20px;height:62.80px;background:#0e0e10"></div>
<div style="left:409.60px;top:329.00px;width:1.20px;height:62.80px;background:#0e0e10"></div>
<div style="left:416.30px;top:329.00px;width:1.20px;height:62.80px;background:#0e0e10"></div>
<div style="left:418.00px;top:329.00px;width:1.20px;height:62.80px;background:#0e0e10"></div>
<div style="left:423.00px;top:329.00px;width:1.20px;height:62.80px;background:#0e0e10"></div>
<div style="left:430.60px;top:329.00px;width:1.20px;height:62.80px;background:#0e0e10"></div>
<div style="left:433.90px;top:329.00px;width:1.20px;height:62.80px;background:#0e0e10"></div>
<div style="left:438.60px;top:329.00px;width:1.20px;height:62.80px;background:#0e0e10"></div>
<div style="left:439.80px;top:329.00px;width:1.20px;height:62.80px;background:#0e0e10"></div>
<div style="left:441.40px;top:329.00px;width:1.20px;height:62.80px;background:#0e0e10"></div>
<div style="left:452.40px;top:329.00px;width:1.20px;height:62.80px;background:#0e0e10"></div>
<div style="left:460.80px;top:329.00px;width:1.20px;height:62.80px;background:#0e0e10"></div>
<div style="left:465.00px;top:329.00px;width:1.20px;height:62.80px;background:#0e0e10"></div>
<div style="left:469.20px;top:329.00px;width:1.20px;height:62.80px;background:#0e0e10"></div>
<div style="left:475.00px;top:329.00px;width:1.20px;height:62.80px;background:#0e0e10"></div>
<div style="left:487.60px;top:329.00px;width:1.20px;height:62.80px;background:#0e0e10"></div>
<div style="left:491.80px;top:329.00px;width:1.20px;height:62.80px;background:#0e0e10"></div>
<div style="left:496.00px;top:329.00px;width:1.20px;height:62.80px;background:#0e0e10"></div>
<div style="left:501.10px;top:329.00px;width:1.20px;height:62.80px;background:#0e0e10"></div>
<div style="left:506.10px;top:329.00px;width:1.20px;height:62.80px;background:#0e0e10"></div>
<div style="left:507.80px;top:329.00px;width:1.20px;height:62.80px;background:#0e0e10"></div>
<div style="left:527.10px;top:329.00px;width:1.20px;height:62.80px;background:#0e0e10"></div>
<div style="left:527.90px;top:329.00px;width:1.20px;height:62.80px;background:#0e0e10"></div>
<div style="left:537.20px;top:329.00px;width:1.20px;height:62.80px;background:#0e0e10"></div>
<div style="left:538.80px;top:329.00px;width:1.20px;height:62.80px;background:#0e0e10"></div>
<div style="left:556.70px;top:329.00px;width:1.20px;height:62.80px;background:#0e0e10"></div>
<div style="left:557.40px;top:329.00px;width:1.20px;height:62.80px;background:#0e0e10"></div>
<div style="left:570.80px;top:329.00px;width:1.20px;height:62.80px;background:#0e0e10"></div>
<div style="left:578.00px;top:329.00px;width:1.20px;height:62.80px;background:#0e0e10"></div>
<div style="left:587.20px;top:329.00px;width:1.20px;height:62.80px;background:#0e0e10"></div>
<div style="left:594.00px;top:329.00px;width:1.20px;height:62.80px;background:#0e0e10"></div>
<div style="left:599.00px;top:329.00px;width:1.20px;height:62.80px;background:#0e0e10"></div>
<div style="left:602.40px;top:329.00px;width:1.20px;height:62.80px;background:#0e0e10"></div>
<div style="left:604.00px;top:329.00px;width:1.20px;height:62.80px;background:#0e0e10"></div>
<div style="left:611.90px;top:329.00px;width:1.20px;height:62.80px;background:#0e0e10"></div>
<div style="left:616.60px;top:329.00px;width:1.20px;height:62.80px;background:#0e0e10"></div>
<div style="left:620.80px;top:329.00px;width:1.20px;height:62.80px;background:#0e0e10"></div>
<div style="left:625.00px;top:329.00px;width:1.20px;height:62.80px;background:#0e0e10"></div>
<div style="left:627.00px;top:329.00px;width:1.20px;height:62.80px;background:#0e0e10"></div>
<div style="left:628.40px;top:329.00px;width:1.20px;height:62.80px;background:#0e0e10"></div>
<div style="left:644.40px;top:329.00px;width:1.20px;height:62.80px;background:#0e0e10"></div>
<div style="left:645.20px;top:329.00px;width:1.20px;height:62.80px;background:#0e0e10"></div>
<div style="left:659.40px;top:329.00px;width:1.20px;height:62.80px;background:#0e0e10"></div>
<div style="left:670.30px;top:329.00px;width:1.20px;height:62.80px;background:#0e0e10"></div>
<div style="left:675.40px;top:329.00px;width:1.20px;height:62.80px;background:#0e0e10"></div>
<div style="left:686.80px;top:329.00px;width:1.20px;height:62.80px;background:#0e0e10"></div>
<div style="left:692.20px;top:329.00px;width:1.20px;height:62.80px;background:#0e0e10"></div>
<div style="left:694.70px;top:329.00px;width:1.20px;height:62.80px;background:#0e0e10"></div>
<div style="left:697.20px;top:329.00px;width:1.20px;height:62.80px;background:#0e0e10"></div>
<div style="left:703.60px;top:329.00px;width:1.20px;height:62.80px;background:#0e0e10"></div>
<div style="left:708.10px;top:329.00px;width:1.20px;height:62.80px;background:#0e0e10"></div>
<div style="left:714.00px;top:329.00px;width:1.20px;height:62.80px;background:#0e0e10"></div>
<div style="left:722.40px;top:329.00px;width:1.20px;height:62.80px;background:#0e0e10"></div>
<div style="left:727.40px;top:329.00px;width:1.20px;height:62.80px;background:#0e0e10"></div>
<div style="left:732.40px;top:329.00px;width:1.20px;height:62.80px;background:#0e0e10"></div>
<div style="left:733.30px;top:329.00px;width:1.20px;height:62.80px;background:#0e0e10"></div>
<div style="left:746.20px;top:329.00px;width:1.20px;height:62.80px;background:#0e0e10"></div>
<div style="left:747.60px;top:329.00px;width:1.20px;height:62.80px;background:#0e0e10"></div>
<div style="left:759.40px;top:329.00px;width:1.20px;height:62.80px;background:#0e0e10"></div>
<div style="left:765.20px;top:329.00px;width:1.20px;height:62.80px;background:#0e0e10"></div>
<div style="left:769.40px;top:329.00px;width:1.20px;height:62.80px;background:#0e0e10"></div>
<div style="left:780.30px;top:329.00px;width:1.20px;height:62.80px;background:#0e0e10"></div>
<div style="left:785.30px;top:329.00px;width:1.20px;height:62.80px;background:#0e0e10"></div>
<div style="left:793.70px;top:329.00px;width:1.20px;height:62.80px;background:#0e0e10"></div>
<div style="left:798.80px;top:329.00px;width:1.20px;height:62.80px;background:#0e0e10"></div>
<div style="left:803.00px;top:329.00px;width:1.20px;height:62.80px;background:#0e0e10"></div>
<div style="left:813.60px;top:329.00px;width:1.20px;height:62.80px;background:#0e0e10"></div>
<div style="left:829.90px;top:329.00px;width:1.20px;height:62.80px;background:#0e0e10"></div>
<div style="left:833.70px;top:329.00px;width:1.20px;height:62.80px;background:#0e0e10"></div>
<div style="left:839.30px;top:329.00px;width:1.20px;height:62.80px;background:#0e0e10"></div>
<div style="left:848.00px;top:329.00px;width:1.20px;height:62.80px;background:#0e0e10"></div>
<div style="left:857.20px;top:329.00px;width:1.20px;height:62.80px;background:#0e0e10"></div>
<div style="left:860.60px;top:329.00px;width:1.20px;height:62.80px;background:#0e0e10"></div>
<div style="left:867.30px;top:329.00px;width:1.20px;height:62.80px;background:#0e0e10"></div>
<div style="left:870.20px;top:329.00px;width:1.20px;height:62.80px;background:#0e0e10"></div>
<div style="left:872.40px;top:329.00px;width:1.20px;height:62.80px;background:#0e0e10"></div>
<div style="left:874.90px;top:329.00px;width:1.20px;height:62.80px;background:#0e0e10"></div>
<div style="left:879.90px;top:329.00px;width:1.20px;height:62.80px;background:#0e0e10"></div>
<div style="left:883.30px;top:329.00px;width:1.20px;height:62.80px;background:#0e0e10"></div>
<div style="left:886.60px;top:329.00px;width:1.20px;height:62.80px;background:#0e0e10"></div>
<div style="left:889.60px;top:329.00px;width:1.20px;height:62.80px;background:#0e0e10"></div>
<div style="left:891.70px;top:329.00px;width:1.20px;height:62.80px;background:#0e0e10"></div>
<div style="left:892.40px;top:329.00px;width:1.20px;height:62.80px;background:#0e0e10"></div>
<div style="left:903.40px;top:329.00px;width:1.20px;height:62.80px;background:#0e0e10"></div>
<div style="left:912.60px;top:329.00px;width:1.20px;height:62.80px;background:#0e0e10"></div>
<div style="left:916.00px;top:329.00px;width:1.20px;height:62.80px;background:#0e0e10"></div>
<div style="left:916.40px;top:329.00px;width:1.20px;height:62.80px;background:#0e0e10"></div>
<div style="left:929.40px;top:329.00px;width:1.20px;height:62.80px;background:#0e0e10"></div>
<div style="left:940.30px;top:329.00px;width:1.20px;height:62.80px;background:#0e0e10"></div>
<div style="left:944.50px;top:329.00px;width:1.20px;height:62.80px;background:#0e0e10"></div>
<div style="left:947.90px;top:329.00px;width:1.20px;height:62.80px;background:#0e0e10"></div>
<div style="left:950.40px;top:329.00px;width:1.20px;height:62.80px;background:#0e0e10"></div>
<div style="left:952.10px;top:329.00px;width:1.20px;height:62.80px;background:#0e0e10"></div>
<div style="left:958.80px;top:329.00px;width:1.20px;height:62.80px;background:#0e0e10"></div>
<div style="left:963.00px;top:329.00px;width:1.20px;height:62.80px;background:#0e0e10"></div>
<div style="left:967.20px;top:329.00px;width:1.20px;height:62.80px;background:#0e0e10"></div>
<div style="left:973.10px;top:329.00px;width:1.20px;height:62.80px;background:#0e0e10"></div>
<div style="left:978.90px;top:329.00px;width:1.20px;height:62.80px;background:#0e0e10"></div>
<div style="left:984.00px;top:329.00px;width:1.20px;height:62.80px;background:#0e0e10"></div>
<div style="left:989.90px;top:329.00px;width:1.20px;height:62.80px;background:#0e0e10"></div>
<div style="left:996.10px;top:329.00px;width:1.20px;height:62.80px;background:#0e0e10"></div>
<div style="left:1001.60px;top:329.00px;width:1.20px;height:62.80px;background:#0e0e10"></div>
<div style="left:1007.40px;top:329.00px;width:1.20px;height:62.80px;background:#0e0e10"></div>
<div style="left:1010.00px;top:329.00px;width:1.20px;height:62.80px;background:#0e0e10"></div>
<div style="left:1012.50px;top:329.00px;width:1.20px;height:62.80px;background:#0e0e10"></div>
<div style="left:1023.40px;top:329.00px;width:1.20px;height:62.80px;background:#0e0e10"></div>
<div style="left:1029.30px;top:329.00px;width:1.20px;height:62.80px;background:#0e0e10"></div>
<div style="left:1034.40px;top:329.00px;width:1.20px;height:62.80px;background:#0e0e10"></div>
<div style="left:1041.10px;top:329.00px;width:1.20px;height:62.80px;background:#0e0e10"></div>
<div style="left:1044.40px;top:329.00px;width:1.20px;height:62.80px;background:#0e0e10"></div>
<div style="left:1046.90px;top:329.00px;width:1.20px;height:62.80px;background:#0e0e10"></div>
<div style="left:1050.30px;top:329.00px;width:1.20px;height:62.80px;background:#0e0e10"></div>
<div style="left:1055.30px;top:329.00px;width:1.20px;height:62.80px;background:#0e0e10"></div>
<div style="left:1062.00px;top:329.00px;width:1.20px;height:62.80px;background:#0e0e10"></div>
<div style="left:1067.10px;top:329.00px;width:1.20px;height:62.80px;background:#0e0e10"></div>
<div style="left:1073.00px;top:329.00px;width:1.20px;height:62.80px;background:#0e0e10"></div>
<div style="left:1079.70px;top:329.00px;width:1.20px;height:62.80px;background:#0e0e10"></div>
<div style="left:1082.20px;top:329.00px;width:1.20px;height:62.80px;background:#0e0e10"></div>
<div style="left:1086.00px;top:329.00px;width:1.20px;height:62.80px;background:#0e0e10"></div>
<div style="left:1088.10px;top:329.00px;width:1.20px;height:62.80px;background:#0e0e10"></div>
<div style="left:1094.80px;top:329.00px;width:1.20px;height:62.80px;background:#0e0e10"></div>
<div style="left:1095.40px;top:329.00px;width:1.20px;height:62.80px;background:#0e0e10"></div>
<div style="left:1113.80px;top:329.00px;width:1.20px;height:62.80px;background:#0e0e10"></div>
<div style="left:1116.70px;top:329.00px;width:1.20px;height:62.80px;background:#0e0e10"></div>
<div style="left:1118.80px;top:329.00px;width:1.20px;height:62.80px;background:#0e0e10"></div>
<div style="left:1122.20px;top:329.00px;width:1.20px;height:62.80px;background:#0e0e10"></div>
<div style="left:1127.20px;top:329.00px;width:1.20px;height:62.80px;background:#0e0e10"></div>
<div style="left:1136.40px;top:329.00px;width:1.20px;height:62.80px;background:#0e0e10"></div>
<div style="left:1140.70px;top:329.00px;width:1.20px;height:62.80px;background:#0e0e10"></div>
<div style="left:1142.40px;top:329.00px;width:1.20px;height:62.80px;background:#0e0e10"></div>
<div style="left:1144.00px;top:329.00px;width:1.20px;height:62.80px;background:#0e0e10"></div>
<div style="left:1146.50px;top:329.00px;width:1.20px;height:62.80px;background:#0e0e10"></div>
<div style="left:1155.80px;top:329.00px;width:1.20px;height:62.80px;background:#0e0e10"></div>
<div style="left:1160.00px;top:329.00px;width:1.20px;height:62.80px;background:#0e0e10"></div>
<div style="left:1164.20px;top:329.00px;width:1.20px;height:62.80px;background:#0e0e10"></div>
<div style="left:1166.70px;top:329.00px;width:1.20px;height:62.80px;background:#0e0e10"></div>
<div style="left:1172.60px;top:329.00px;width:1.20px;height:62.80px;background:#0e0e10"></div>
<div style="left:1175.90px;top:329.00px;width:1.20px;height:62.80px;background:#0e0e10"></div>
<div style="left:1178.40px;top:329.00px;width:1.20px;height:62.80px;background:#0e0e10"></div>
<div style="left:1185.20px;top:329.00px;width:1.20px;height:62.80px;background:#0e0e10"></div>
<div style="left:1191.00px;top:329.00px;width:1.20px;height:62.80px;background:#0e0e10"></div>
<div style="left:1201.10px;top:329.00px;width:1.20px;height:62.80px;background:#0e0e10"></div>
<div style="left:1205.30px;top:329.00px;width:1.20px;height:62.80px;background:#0e0e10"></div>
<div style="left:1207.80px;top:329.00px;width:1.20px;height:62.80px;background:#0e0e10"></div>
<div style="left:1213.70px;top:329.00px;width:1.20px;height:62.80px;background:#0e0e10"></div>
<div style="left:1217.90px;top:329.00px;width:1.20px;height:62.80px;background:#0e0e10"></div>
<div style="left:1222.10px;top:329.00px;width:1.20px;height:62.80px;background:#0e0e10"></div>
<div style="left:1227.10px;top:329.00px;width:1.20px;height:62.80px;background:#0e0e10"></div>
<div style="left:1230.40px;top:329.00px;width:1.20px;height:62.80px;background:#0e0e10"></div>
<div style="left:1231.40px;top:329.00px;width:1.20px;height:62.80px;background:#0e0e10"></div>
<div style="left:1241.40px;top:329.00px;width:1.20px;height:62.80px;background:#0e0e10"></div>
<div style="left:1248.90px;top:329.00px;width:1.20px;height:62.80px;background:#0e0e10"></div>
<div style="left:1254.80px;top:329.00px;width:1.20px;height:62.80px;background:#0e0e10"></div>
<div style="left:1259.90px;top:329.00px;width:1.20px;height:62.80px;background:#0e0e10"></div>
<div style="left:1267.40px;top:329.00px;width:1.20px;height:62.80px;background:#0e0e10"></div>
<div style="left:1275.00px;top:329.00px;width:1.20px;height:62.80px;background:#0e0e10"></div>
<div style="left:1280.00px;top:329.00px;width:1.20px;height:62.80px;background:#0e0e10"></div>
<div style="left:1283.40px;top:329.00px;width:1.20px;height:62.80px;background:#0e0e10"></div>
<div style="left:1289.20px;top:329.00px;width:1.20px;height:62.80px;background:#0e0e10"></div>
<div style="left:1290.40px;top:329.00px;width:1.20px;height:62.80px;background:#0e0e10"></div>
<div style="left:1307.40px;top:329.00px;width:1.20px;height:62.80px;background:#0e0e10"></div>
<div style="left:1316.90px;top:329.00px;width:1.20px;height:62.80px;background:#0e0e10"></div>
<div style="left:1327.40px;top:329.00px;width:1.20px;height:62.80px;background:#0e0e10"></div>
<div style="left:1328.40px;top:329.00px;width:1.20px;height:62.80px;background:#0e0e10"></div>
<div style="left:1344.40px;top:329.00px;width:1.20px;height:62.80px;background:#0e0e10"></div>
<div style="left:1349.70px;top:329.00px;width:1.20px;height:62.80px;background:#0e0e10"></div>
<div style="left:1367.00px;top:329.00px;width:1.20px;height:62.80px;background:#0e0e10"></div>
<div style="left:1372.90px;top:329.00px;width:1.20px;height:62.80px;background:#0e0e10"></div>
<div style="left:1374.60px;top:329.00px;width:1.20px;height:62.80px;background:#0e0e10"></div>
<div style="left:1383.80px;top:329.00px;width:1.20px;height:62.80px;background:#0e0e10"></div>
<div style="left:1387.20px;top:329.00px;width:1.20px;height:62.80px;background:#0e0e10"></div>
<div style="left:1389.70px;top:329.00px;width:1.20px;height:62.80px;background:#0e0e10"></div>
<div style="left:1403.10px;top:329.00px;width:1.20px;height:62.80px;background:#0e0e10"></div>
<div style="left:1406.40px;top:329.00px;width:1.20px;height:62.80px;background:#0e0e10"></div>
<div style="left:1407.40px;top:329.00px;width:1.20px;height:62.80px;background:#0e0e10"></div>
<div style="left:1420.70px;top:329.00px;width:1.20px;height:62.80px;background:#0e0e10"></div>
<div style="left:1421.60px;top:329.00px;width:1.20px;height:62.80px;background:#0e0e10"></div>
<div style="left:1438.40px;top:329.00px;width:1.20px;height:62.80px;background:#0e0e10"></div>
<div style="left:1443.70px;top:329.00px;width:1.20px;height:62.80px;background:#0e0e10"></div>
<div style="left:1453.10px;top:329.00px;width:1.20px;height:62.80px;background:#0e0e10"></div>
<div style="left:1455.20px;top:329.00px;width:1.20px;height:62.80px;background:#0e0e10"></div>
<div style="left:1459.40px;top:329.00px;width:1.20px;height:62.80px;background:#0e0e10"></div>
<div style="left:1464.90px;top:329.00px;width:1.20px;height:62.80px;background:#0e0e10"></div>
<div style="left:1471.90px;top:329.00px;width:1.20px;height:62.80px;background:#0e0e10"></div>
<div style="left:1478.70px;top:329.00px;width:1.20px;height:62.80px;background:#0e0e10"></div>
<div style="left:1487.10px;top:329.00px;width:1.20px;height:62.80px;background:#0e0e10"></div>
<div style="left:1490.40px;top:329.00px;width:1.20px;height:62.80px;background:#0e0e10"></div>
<div style="left:1491.80px;top:329.00px;width:1.20px;height:62.80px;background:#0e0e10"></div>
<div style="left:1507.20px;top:329.00px;width:1.20px;height:62.80px;background:#0e0e10"></div>
<div style="left:1514.80px;top:329.00px;width:1.20px;height:62.80px;background:#0e0e10"></div>
<div style="left:1523.10px;top:329.00px;width:1.20px;height:62.80px;background:#0e0e10"></div>
<div style="left:1528.20px;top:329.00px;width:1.20px;height:62.80px;background:#0e0e10"></div>
<div style="left:1534.90px;top:329.00px;width:1.20px;height:62.80px;background:#0e0e10"></div>
<div style="left:1545.00px;top:329.00px;width:1.20px;height:62.80px;background:#0e0e10"></div>
<div style="left:1546.60px;top:329.00px;width:1.20px;height:62.80px;background:#0e0e10"></div>
<div style="left:1550.00px;top:329.00px;width:1.20px;height:62.80px;background:#0e0e10"></div>
<div style="left:1557.60px;top:329.00px;width:1.20px;height:62.80px;background:#0e0e10"></div>
<div style="left:1563.40px;top:329.00px;width:1.20px;height:62.80px;background:#0e0e10"></div>
<div style="left:1569.40px;top:329.00px;width:1.20px;height:62.80px;background:#0e0e10"></div>
<div style="left:1577.70px;top:329.00px;width:1.20px;height:62.80px;background:#0e0e10"></div>
<div style="left:1587.80px;top:329.00px;width:1.20px;height:62.80px;background:#0e0e10"></div>
<div style="left:1592.80px;top:329.00px;width:1.20px;height:62.80px;background:#0e0e10"></div>
<div style="left:1596.20px;top:329.00px;width:1.20px;height:62.80px;background:#0e0e10"></div>
<div style="left:1601.20px;top:329.00px;width:1.20px;height:62.80px;background:#0e0e10"></div>
<div style="left:1608.80px;top:329.00px;width:1.20px;height:62.80px;background:#0e0e10"></div>
<div style="left:1612.10px;top:329.00px;width:1.20px;height:62.80px;background:#0e0e10"></div>
<div style="left:1614.60px;top:329.00px;width:1.20px;height:62.80px;background:#0e0e10"></div>
<div style="left:1616.40px;top:329.00px;width:1.20px;height:62.80px;background:#0e0e10"></div>
<div style="left:1629.40px;top:329.00px;width:1.20px;height:62.80px;background:#0e0e10"></div>
<div style="left:1644.00px;top:329.00px;width:1.20px;height:62.80px;background:#0e0e10"></div>
<div style="left:453.00px;top:329.00px;width:8.40px;height:62.80px;background:#28282e"></div>
<div style="left:475.60px;top:329.00px;width:12.60px;height:62.80px;background:#28282e"></div>
<div style="left:1055.90px;top:329.00px;width:6.70px;height:62.80px;background:#28282e"></div>
<div style="left:1067.70px;top:329.00px;width:5.90px;height:62.80px;background:#28282e"></div>
<div style="left:1080.30px;top:329.00px;width:2.50px;height:62.80px;background:#28282e"></div>
<div style="left:1086.60px;top:329.00px;width:2.10px;height:62.80px;background:#28282e"></div>
<div style="left:1465.50px;top:329.00px;width:7.00px;height:62.80px;background:#28282e"></div>
<div style="left:434.70px;top:329.00px;width:4.30px;height:62.80px;background:#c04a7c"></div>
<div style="left:439.70px;top:329.00px;width:1.50px;height:62.80px;background:#c04a7c"></div>
<div style="left:39.70px;top:329.00px;width:15.60px;height:62.80px;background:#28282e"></div>
<div style="left:39.40px;top:329.00px;width:16.20px;height:62.80px;background:#446686;border:1px solid #1c1c20;border-radius:4px;box-shadow:inset 0 0 0 1px #54779a30"></div>
<div style="left:41.80px;top:331.40px;width:11.40px;height:36.10px;border:1px solid #000;background:#446686"></div>
<div style="left:333.50px;top:329.00px;width:14.80px;height:62.80px;background:#28282e"></div>
<div style="left:333.20px;top:329.00px;width:15.40px;height:62.80px;background:#446686;border:1px solid #1c1c20;border-radius:4px;box-shadow:inset 0 0 0 1px #54779a30"></div>
<div style="left:335.60px;top:331.40px;width:10.60px;height:36.10px;border:1px solid #000;background:#446686"></div>
<div style="left:441.70px;top:329.00px;width:11.60px;height:62.80px;background:#28282e"></div>
<div style="left:441.40px;top:329.00px;width:12.20px;height:62.80px;background:#446686;border:1px solid #1c1c20;border-radius:4px;box-shadow:inset 0 0 0 1px #54779a30"></div>
<div style="left:443.80px;top:331.40px;width:7.40px;height:36.10px;border:1px solid #000;background:#446686"></div>
<div style="left:528.20px;top:329.00px;width:9.90px;height:62.80px;background:#28282e"></div>
<div style="left:527.90px;top:329.00px;width:10.50px;height:62.80px;background:#446686;border:1px solid #1c1c20;border-radius:4px;box-shadow:inset 0 0 0 1px #54779a30"></div>
<div style="left:530.30px;top:331.40px;width:5.70px;height:36.10px;border:1px solid #000;background:#446686"></div>
<div style="left:539.10px;top:329.00px;width:18.50px;height:62.80px;background:#28282e"></div>
<div style="left:538.80px;top:329.00px;width:19.10px;height:62.80px;background:#446686;border:1px solid #1c1c20;border-radius:4px;box-shadow:inset 0 0 0 1px #54779a30"></div>
<div style="left:541.50px;top:331.20px;width:13.70px;height:36.30px;background:#000;overflow:hidden"></div>
<svg style="position:absolute;left:541.6px;top:332.4px" width="13" height="34"><rect x="0" y="0" width="13" height="34" fill="#222"/><rect x="0.5" y="0.5" width="3.2" height="14" fill="#8a7068"/><rect x="3.7" y="0.5" width="2" height="33" fill="#e8e4e8"/><rect x="5.7" y="0.5" width="6.8" height="22" fill="#a2a8b0"/><rect x="5.7" y="20" width="6.8" height="3.5" fill="#9050d0"/><rect x="5.7" y="23.5" width="6.8" height="10" fill="#2a2428"/><rect x="0.5" y="14" width="3.2" height="19.5" fill="#404a6a"/><rect x="2.5" y="24" width="3" height="3" fill="#b83840"/><rect x="3.5" y="28" width="3" height="5" fill="#d8d8e0"/><rect x="0.5" y="14" width="3" height="4" fill="#c8c8d0"/></svg>
<div style="left:557.70px;top:329.00px;width:14.00px;height:62.80px;background:#28282e"></div>
<div style="left:557.40px;top:329.00px;width:14.60px;height:62.80px;background:#446686;border:1px solid #1c1c20;border-radius:4px;box-shadow:inset 0 0 0 1px #54779a30"></div>
<div style="left:559.80px;top:331.40px;width:9.80px;height:36.10px;border:1px solid #000;background:#446686"></div>
<div style="left:628.70px;top:329.00px;width:16.60px;height:62.80px;background:#28282e"></div>
<div style="left:628.40px;top:329.00px;width:17.20px;height:62.80px;background:#446686;border:1px solid #1c1c20;border-radius:4px;box-shadow:inset 0 0 0 1px #54779a30"></div>
<div style="left:630.80px;top:331.40px;width:12.40px;height:36.10px;border:1px solid #000;background:#446686"></div>
<div style="left:645.50px;top:329.00px;width:14.80px;height:62.80px;background:#28282e"></div>
<div style="left:645.20px;top:329.00px;width:15.40px;height:62.80px;background:#446686;border:1px solid #1c1c20;border-radius:4px;box-shadow:inset 0 0 0 1px #54779a30"></div>
<div style="left:647.60px;top:331.40px;width:10.60px;height:36.10px;border:1px solid #000;background:#446686"></div>
<div style="left:733.60px;top:329.00px;width:13.50px;height:62.80px;background:#28282e"></div>
<div style="left:733.30px;top:329.00px;width:14.10px;height:62.80px;background:#446686;border:1px solid #1c1c20;border-radius:4px;box-shadow:inset 0 0 0 1px #54779a30"></div>
<div style="left:735.70px;top:331.40px;width:9.30px;height:36.10px;border:1px solid #000;background:#446686"></div>
<div style="left:747.90px;top:329.00px;width:12.40px;height:62.80px;background:#28282e"></div>
<div style="left:747.60px;top:329.00px;width:13.00px;height:62.80px;background:#446686;border:1px solid #1c1c20;border-radius:4px;box-shadow:inset 0 0 0 1px #54779a30"></div>
<div style="left:750.00px;top:331.40px;width:8.20px;height:36.10px;border:1px solid #000;background:#446686"></div>
<div style="left:892.70px;top:329.00px;width:11.60px;height:62.80px;background:#28282e"></div>
<div style="left:892.40px;top:329.00px;width:12.20px;height:62.80px;background:#446686;border:1px solid #1c1c20;border-radius:4px;box-shadow:inset 0 0 0 1px #54779a30"></div>
<div style="left:894.80px;top:331.40px;width:7.40px;height:36.10px;border:1px solid #000;background:#446686"></div>
<div style="left:916.70px;top:329.00px;width:13.60px;height:62.80px;background:#28282e"></div>
<div style="left:916.40px;top:329.00px;width:14.20px;height:62.80px;background:#446686;border:1px solid #1c1c20;border-radius:4px;box-shadow:inset 0 0 0 1px #54779a30"></div>
<div style="left:918.80px;top:331.40px;width:9.40px;height:36.10px;border:1px solid #000;background:#446686"></div>
<div style="left:1095.70px;top:329.00px;width:19.00px;height:62.80px;background:#28282e"></div>
<div style="left:1095.40px;top:329.00px;width:19.60px;height:62.80px;background:#446686;border:1px solid #1c1c20;border-radius:4px;box-shadow:inset 0 0 0 1px #54779a30"></div>
<div style="left:1097.80px;top:331.40px;width:14.80px;height:36.10px;border:1px solid #000;background:#446686"></div>
<div style="left:1231.70px;top:329.00px;width:10.60px;height:62.80px;background:#28282e"></div>
<div style="left:1231.40px;top:329.00px;width:11.20px;height:62.80px;background:#446686;border:1px solid #1c1c20;border-radius:4px;box-shadow:inset 0 0 0 1px #54779a30"></div>
<div style="left:1233.80px;top:331.40px;width:6.40px;height:36.10px;border:1px solid #000;background:#446686"></div>
<div style="left:1290.70px;top:329.00px;width:17.60px;height:62.80px;background:#28282e"></div>
<div style="left:1290.40px;top:329.00px;width:18.20px;height:62.80px;background:#446686;border:1px solid #1c1c20;border-radius:4px;box-shadow:inset 0 0 0 1px #54779a30"></div>
<div style="left:1292.80px;top:331.40px;width:13.40px;height:36.10px;border:1px solid #000;background:#446686"></div>
<div style="left:1328.70px;top:329.00px;width:16.60px;height:62.80px;background:#28282e"></div>
<div style="left:1328.40px;top:329.00px;width:17.20px;height:62.80px;background:#446686;border:1px solid #1c1c20;border-radius:4px;box-shadow:inset 0 0 0 1px #54779a30"></div>
<div style="left:1330.80px;top:331.40px;width:12.40px;height:36.10px;border:1px solid #000;background:#446686"></div>
<div style="left:1407.70px;top:329.00px;width:13.90px;height:62.80px;background:#28282e"></div>
<div style="left:1407.40px;top:329.00px;width:14.50px;height:62.80px;background:#446686;border:1px solid #1c1c20;border-radius:4px;box-shadow:inset 0 0 0 1px #54779a30"></div>
<div style="left:1409.80px;top:331.40px;width:9.70px;height:36.10px;border:1px solid #000;background:#446686"></div>
<div style="left:1421.90px;top:329.00px;width:17.40px;height:62.80px;background:#28282e"></div>
<div style="left:1421.60px;top:329.00px;width:18.00px;height:62.80px;background:#446686;border:1px solid #1c1c20;border-radius:4px;box-shadow:inset 0 0 0 1px #54779a30"></div>
<div style="left:1424.00px;top:331.40px;width:13.20px;height:36.10px;border:1px solid #000;background:#446686"></div>
<div style="left:1492.10px;top:329.00px;width:16.00px;height:62.80px;background:#28282e"></div>
<div style="left:1491.80px;top:329.00px;width:16.60px;height:62.80px;background:#446686;border:1px solid #1c1c20;border-radius:4px;box-shadow:inset 0 0 0 1px #54779a30"></div>
<div style="left:1494.20px;top:331.40px;width:11.80px;height:36.10px;border:1px solid #000;background:#446686"></div>
<div style="left:1616.70px;top:329.00px;width:13.60px;height:62.80px;background:#28282e"></div>
<div style="left:1616.40px;top:329.00px;width:14.20px;height:62.80px;background:#446686;border:1px solid #1c1c20;border-radius:4px;box-shadow:inset 0 0 0 1px #54779a30"></div>
<div style="left:1618.80px;top:331.40px;width:9.40px;height:36.10px;border:1px solid #000;background:#446686"></div>
<div style="left:0.00px;top:394.40px;width:5.00px;height:120.90px;background:#222226"></div>
<div style="left:5.00px;top:394.90px;width:1639.50px;height:119.90px;background:#3b6b4c;border:1px solid #0e0e10"></div>
<div style="left:4.40px;top:394.90px;width:1.20px;height:119.90px;background:#0e0e10"></div>
<div style="left:12.80px;top:394.90px;width:1.20px;height:119.90px;background:#0e0e10"></div>
<div style="left:19.20px;top:394.90px;width:1.20px;height:119.90px;background:#0e0e10"></div>
<div style="left:22.90px;top:394.90px;width:1.20px;height:119.90px;background:#0e0e10"></div>
<div style="left:32.10px;top:394.90px;width:1.20px;height:119.90px;background:#0e0e10"></div>
<div style="left:38.80px;top:394.90px;width:1.20px;height:119.90px;background:#0e0e10"></div>
<div style="left:54.40px;top:394.90px;width:1.20px;height:119.90px;background:#0e0e10"></div>
<div style="left:61.80px;top:394.90px;width:1.20px;height:119.90px;background:#0e0e10"></div>
<div style="left:69.10px;top:394.90px;width:1.20px;height:119.90px;background:#0e0e10"></div>
<div style="left:77.40px;top:394.90px;width:1.20px;height:119.90px;background:#0e0e10"></div>
<div style="left:80.80px;top:394.90px;width:1.20px;height:119.90px;background:#0e0e10"></div>
<div style="left:85.00px;top:394.90px;width:1.20px;height:119.90px;background:#0e0e10"></div>
<div style="left:91.40px;top:394.90px;width:1.20px;height:119.90px;background:#0e0e10"></div>
<div style="left:95.40px;top:394.90px;width:1.20px;height:119.90px;background:#0e0e10"></div>
<div style="left:101.80px;top:394.90px;width:1.20px;height:119.90px;background:#0e0e10"></div>
<div style="left:104.80px;top:394.90px;width:1.20px;height:119.90px;background:#0e0e10"></div>
<div style="left:111.00px;top:394.90px;width:1.20px;height:119.90px;background:#0e0e10"></div>
<div style="left:121.60px;top:394.90px;width:1.20px;height:119.90px;background:#0e0e10"></div>
<div style="left:127.00px;top:394.90px;width:1.20px;height:119.90px;background:#0e0e10"></div>
<div style="left:132.00px;top:394.90px;width:1.20px;height:119.90px;background:#0e0e10"></div>
<div style="left:134.50px;top:394.90px;width:1.20px;height:119.90px;background:#0e0e10"></div>
<div style="left:140.40px;top:394.90px;width:1.20px;height:119.90px;background:#0e0e10"></div>
<div style="left:147.10px;top:394.90px;width:1.20px;height:119.90px;background:#0e0e10"></div>
<div style="left:149.60px;top:394.90px;width:1.20px;height:119.90px;background:#0e0e10"></div>
<div style="left:156.40px;top:394.90px;width:1.20px;height:119.90px;background:#0e0e10"></div>
<div style="left:160.60px;top:394.90px;width:1.20px;height:119.90px;background:#0e0e10"></div>
<div style="left:163.10px;top:394.90px;width:1.20px;height:119.90px;background:#0e0e10"></div>
<div style="left:166.80px;top:394.90px;width:1.20px;height:119.90px;background:#0e0e10"></div>
<div style="left:174.00px;top:394.90px;width:1.20px;height:119.90px;background:#0e0e10"></div>
<div style="left:182.70px;top:394.90px;width:1.20px;height:119.90px;background:#0e0e10"></div>
<div style="left:184.10px;top:394.90px;width:1.20px;height:119.90px;background:#0e0e10"></div>
<div style="left:185.70px;top:394.90px;width:1.20px;height:119.90px;background:#0e0e10"></div>
<div style="left:188.30px;top:394.90px;width:1.20px;height:119.90px;background:#0e0e10"></div>
<div style="left:190.80px;top:394.90px;width:1.20px;height:119.90px;background:#0e0e10"></div>
<div style="left:200.00px;top:394.90px;width:1.20px;height:119.90px;background:#0e0e10"></div>
<div style="left:210.90px;top:394.90px;width:1.20px;height:119.90px;background:#0e0e10"></div>
<div style="left:216.80px;top:394.90px;width:1.20px;height:119.90px;background:#0e0e10"></div>
<div style="left:224.40px;top:394.90px;width:1.20px;height:119.90px;background:#0e0e10"></div>
<div style="left:234.40px;top:394.90px;width:1.20px;height:119.90px;background:#0e0e10"></div>
<div style="left:239.40px;top:394.90px;width:1.20px;height:119.90px;background:#0e0e10"></div>
<div style="left:242.80px;top:394.90px;width:1.20px;height:119.90px;background:#0e0e10"></div>
<div style="left:252.90px;top:394.90px;width:1.20px;height:119.90px;background:#0e0e10"></div>
<div style="left:257.90px;top:394.90px;width:1.20px;height:119.90px;background:#0e0e10"></div>
<div style="left:259.60px;top:394.90px;width:1.20px;height:119.90px;background:#0e0e10"></div>
<div style="left:263.80px;top:394.90px;width:1.20px;height:119.90px;background:#0e0e10"></div>
<div style="left:266.30px;top:394.90px;width:1.20px;height:119.90px;background:#0e0e10"></div>
<div style="left:268.00px;top:394.90px;width:1.20px;height:119.90px;background:#0e0e10"></div>
<div style="left:269.70px;top:394.90px;width:1.20px;height:119.90px;background:#0e0e10"></div>
<div style="left:271.40px;top:394.90px;width:1.20px;height:119.90px;background:#0e0e10"></div>
<div style="left:274.80px;top:394.90px;width:1.20px;height:119.90px;background:#0e0e10"></div>
<div style="left:287.00px;top:394.90px;width:1.20px;height:119.90px;background:#0e0e10"></div>
<div style="left:298.80px;top:394.90px;width:1.20px;height:119.90px;background:#0e0e10"></div>
<div style="left:303.80px;top:394.90px;width:1.20px;height:119.90px;background:#0e0e10"></div>
<div style="left:311.40px;top:394.90px;width:1.20px;height:119.90px;background:#0e0e10"></div>
<div style="left:315.10px;top:394.90px;width:1.20px;height:119.90px;background:#0e0e10"></div>
<div style="left:319.80px;top:394.90px;width:1.20px;height:119.90px;background:#0e0e10"></div>
<div style="left:321.80px;top:394.90px;width:1.20px;height:119.90px;background:#0e0e10"></div>
<div style="left:324.00px;top:394.90px;width:1.20px;height:119.90px;background:#0e0e10"></div>
<div style="left:327.30px;top:394.90px;width:1.20px;height:119.90px;background:#0e0e10"></div>
<div style="left:331.80px;top:394.90px;width:1.20px;height:119.90px;background:#0e0e10"></div>
<div style="left:333.20px;top:394.90px;width:1.20px;height:119.90px;background:#0e0e10"></div>
<div style="left:347.40px;top:394.90px;width:1.20px;height:119.90px;background:#0e0e10"></div>
<div style="left:348.30px;top:394.90px;width:1.20px;height:119.90px;background:#0e0e10"></div>
<div style="left:350.80px;top:394.90px;width:1.20px;height:119.90px;background:#0e0e10"></div>
<div style="left:356.70px;top:394.90px;width:1.20px;height:119.90px;background:#0e0e10"></div>
<div style="left:363.10px;top:394.90px;width:1.20px;height:119.90px;background:#0e0e10"></div>
<div style="left:368.40px;top:394.90px;width:1.20px;height:119.90px;background:#0e0e10"></div>
<div style="left:371.00px;top:394.90px;width:1.20px;height:119.90px;background:#0e0e10"></div>
<div style="left:373.40px;top:394.90px;width:1.20px;height:119.90px;background:#0e0e10"></div>
<div style="left:375.40px;top:394.90px;width:1.20px;height:119.90px;background:#0e0e10"></div>
<div style="left:382.70px;top:394.90px;width:1.20px;height:119.90px;background:#0e0e10"></div>
<div style="left:389.40px;top:394.90px;width:1.20px;height:119.90px;background:#0e0e10"></div>
<div style="left:394.40px;top:394.90px;width:1.20px;height:119.90px;background:#0e0e10"></div>
<div style="left:398.70px;top:394.90px;width:1.20px;height:119.90px;background:#0e0e10"></div>
<div style="left:403.70px;top:394.90px;width:1.20px;height:119.90px;background:#0e0e10"></div>
<div style="left:409.60px;top:394.90px;width:1.20px;height:119.90px;background:#0e0e10"></div>
<div style="left:416.30px;top:394.90px;width:1.20px;height:119.90px;background:#0e0e10"></div>
<div style="left:418.00px;top:394.90px;width:1.20px;height:119.90px;background:#0e0e10"></div>
<div style="left:423.00px;top:394.90px;width:1.20px;height:119.90px;background:#0e0e10"></div>
<div style="left:430.60px;top:394.90px;width:1.20px;height:119.90px;background:#0e0e10"></div>
<div style="left:433.90px;top:394.90px;width:1.20px;height:119.90px;background:#0e0e10"></div>
<div style="left:438.60px;top:394.90px;width:1.20px;height:119.90px;background:#0e0e10"></div>
<div style="left:439.80px;top:394.90px;width:1.20px;height:119.90px;background:#0e0e10"></div>
<div style="left:441.40px;top:394.90px;width:1.20px;height:119.90px;background:#0e0e10"></div>
<div style="left:460.80px;top:394.90px;width:1.20px;height:119.90px;background:#0e0e10"></div>
<div style="left:465.00px;top:394.90px;width:1.20px;height:119.90px;background:#0e0e10"></div>
<div style="left:469.20px;top:394.90px;width:1.20px;height:119.90px;background:#0e0e10"></div>
<div style="left:475.00px;top:394.90px;width:1.20px;height:119.90px;background:#0e0e10"></div>
<div style="left:487.60px;top:394.90px;width:1.20px;height:119.90px;background:#0e0e10"></div>
<div style="left:491.80px;top:394.90px;width:1.20px;height:119.90px;background:#0e0e10"></div>
<div style="left:496.00px;top:394.90px;width:1.20px;height:119.90px;background:#0e0e10"></div>
<div style="left:501.10px;top:394.90px;width:1.20px;height:119.90px;background:#0e0e10"></div>
<div style="left:506.10px;top:394.90px;width:1.20px;height:119.90px;background:#0e0e10"></div>
<div style="left:507.80px;top:394.90px;width:1.20px;height:119.90px;background:#0e0e10"></div>
<div style="left:527.10px;top:394.90px;width:1.20px;height:119.90px;background:#0e0e10"></div>
<div style="left:527.90px;top:394.90px;width:1.20px;height:119.90px;background:#0e0e10"></div>
<div style="left:537.20px;top:394.90px;width:1.20px;height:119.90px;background:#0e0e10"></div>
<div style="left:538.80px;top:394.90px;width:1.20px;height:119.90px;background:#0e0e10"></div>
<div style="left:556.70px;top:394.90px;width:1.20px;height:119.90px;background:#0e0e10"></div>
<div style="left:557.40px;top:394.90px;width:1.20px;height:119.90px;background:#0e0e10"></div>
<div style="left:570.80px;top:394.90px;width:1.20px;height:119.90px;background:#0e0e10"></div>
<div style="left:578.00px;top:394.90px;width:1.20px;height:119.90px;background:#0e0e10"></div>
<div style="left:587.20px;top:394.90px;width:1.20px;height:119.90px;background:#0e0e10"></div>
<div style="left:594.00px;top:394.90px;width:1.20px;height:119.90px;background:#0e0e10"></div>
<div style="left:599.00px;top:394.90px;width:1.20px;height:119.90px;background:#0e0e10"></div>
<div style="left:602.40px;top:394.90px;width:1.20px;height:119.90px;background:#0e0e10"></div>
<div style="left:604.00px;top:394.90px;width:1.20px;height:119.90px;background:#0e0e10"></div>
<div style="left:611.90px;top:394.90px;width:1.20px;height:119.90px;background:#0e0e10"></div>
<div style="left:616.60px;top:394.90px;width:1.20px;height:119.90px;background:#0e0e10"></div>
<div style="left:620.80px;top:394.90px;width:1.20px;height:119.90px;background:#0e0e10"></div>
<div style="left:625.00px;top:394.90px;width:1.20px;height:119.90px;background:#0e0e10"></div>
<div style="left:627.00px;top:394.90px;width:1.20px;height:119.90px;background:#0e0e10"></div>
<div style="left:628.40px;top:394.90px;width:1.20px;height:119.90px;background:#0e0e10"></div>
<div style="left:644.40px;top:394.90px;width:1.20px;height:119.90px;background:#0e0e10"></div>
<div style="left:645.20px;top:394.90px;width:1.20px;height:119.90px;background:#0e0e10"></div>
<div style="left:659.40px;top:394.90px;width:1.20px;height:119.90px;background:#0e0e10"></div>
<div style="left:670.30px;top:394.90px;width:1.20px;height:119.90px;background:#0e0e10"></div>
<div style="left:675.40px;top:394.90px;width:1.20px;height:119.90px;background:#0e0e10"></div>
<div style="left:686.80px;top:394.90px;width:1.20px;height:119.90px;background:#0e0e10"></div>
<div style="left:692.20px;top:394.90px;width:1.20px;height:119.90px;background:#0e0e10"></div>
<div style="left:694.70px;top:394.90px;width:1.20px;height:119.90px;background:#0e0e10"></div>
<div style="left:697.20px;top:394.90px;width:1.20px;height:119.90px;background:#0e0e10"></div>
<div style="left:703.60px;top:394.90px;width:1.20px;height:119.90px;background:#0e0e10"></div>
<div style="left:708.10px;top:394.90px;width:1.20px;height:119.90px;background:#0e0e10"></div>
<div style="left:714.00px;top:394.90px;width:1.20px;height:119.90px;background:#0e0e10"></div>
<div style="left:722.40px;top:394.90px;width:1.20px;height:119.90px;background:#0e0e10"></div>
<div style="left:727.40px;top:394.90px;width:1.20px;height:119.90px;background:#0e0e10"></div>
<div style="left:732.40px;top:394.90px;width:1.20px;height:119.90px;background:#0e0e10"></div>
<div style="left:733.30px;top:394.90px;width:1.20px;height:119.90px;background:#0e0e10"></div>
<div style="left:746.20px;top:394.90px;width:1.20px;height:119.90px;background:#0e0e10"></div>
<div style="left:747.60px;top:394.90px;width:1.20px;height:119.90px;background:#0e0e10"></div>
<div style="left:759.40px;top:394.90px;width:1.20px;height:119.90px;background:#0e0e10"></div>
<div style="left:765.20px;top:394.90px;width:1.20px;height:119.90px;background:#0e0e10"></div>
<div style="left:769.40px;top:394.90px;width:1.20px;height:119.90px;background:#0e0e10"></div>
<div style="left:780.30px;top:394.90px;width:1.20px;height:119.90px;background:#0e0e10"></div>
<div style="left:785.30px;top:394.90px;width:1.20px;height:119.90px;background:#0e0e10"></div>
<div style="left:793.70px;top:394.90px;width:1.20px;height:119.90px;background:#0e0e10"></div>
<div style="left:798.80px;top:394.90px;width:1.20px;height:119.90px;background:#0e0e10"></div>
<div style="left:803.00px;top:394.90px;width:1.20px;height:119.90px;background:#0e0e10"></div>
<div style="left:813.60px;top:394.90px;width:1.20px;height:119.90px;background:#0e0e10"></div>
<div style="left:829.90px;top:394.90px;width:1.20px;height:119.90px;background:#0e0e10"></div>
<div style="left:833.70px;top:394.90px;width:1.20px;height:119.90px;background:#0e0e10"></div>
<div style="left:839.30px;top:394.90px;width:1.20px;height:119.90px;background:#0e0e10"></div>
<div style="left:848.00px;top:394.90px;width:1.20px;height:119.90px;background:#0e0e10"></div>
<div style="left:857.20px;top:394.90px;width:1.20px;height:119.90px;background:#0e0e10"></div>
<div style="left:860.60px;top:394.90px;width:1.20px;height:119.90px;background:#0e0e10"></div>
<div style="left:867.30px;top:394.90px;width:1.20px;height:119.90px;background:#0e0e10"></div>
<div style="left:870.20px;top:394.90px;width:1.20px;height:119.90px;background:#0e0e10"></div>
<div style="left:872.40px;top:394.90px;width:1.20px;height:119.90px;background:#0e0e10"></div>
<div style="left:874.90px;top:394.90px;width:1.20px;height:119.90px;background:#0e0e10"></div>
<div style="left:879.90px;top:394.90px;width:1.20px;height:119.90px;background:#0e0e10"></div>
<div style="left:883.30px;top:394.90px;width:1.20px;height:119.90px;background:#0e0e10"></div>
<div style="left:886.60px;top:394.90px;width:1.20px;height:119.90px;background:#0e0e10"></div>
<div style="left:889.60px;top:394.90px;width:1.20px;height:119.90px;background:#0e0e10"></div>
<div style="left:891.70px;top:394.90px;width:1.20px;height:119.90px;background:#0e0e10"></div>
<div style="left:892.40px;top:394.90px;width:1.20px;height:119.90px;background:#0e0e10"></div>
<div style="left:903.40px;top:394.90px;width:1.20px;height:119.90px;background:#0e0e10"></div>
<div style="left:912.60px;top:394.90px;width:1.20px;height:119.90px;background:#0e0e10"></div>
<div style="left:916.00px;top:394.90px;width:1.20px;height:119.90px;background:#0e0e10"></div>
<div style="left:916.40px;top:394.90px;width:1.20px;height:119.90px;background:#0e0e10"></div>
<div style="left:929.40px;top:394.90px;width:1.20px;height:119.90px;background:#0e0e10"></div>
<div style="left:940.30px;top:394.90px;width:1.20px;height:119.90px;background:#0e0e10"></div>
<div style="left:944.50px;top:394.90px;width:1.20px;height:119.90px;background:#0e0e10"></div>
<div style="left:947.90px;top:394.90px;width:1.20px;height:119.90px;background:#0e0e10"></div>
<div style="left:950.40px;top:394.90px;width:1.20px;height:119.90px;background:#0e0e10"></div>
<div style="left:952.10px;top:394.90px;width:1.20px;height:119.90px;background:#0e0e10"></div>
<div style="left:958.80px;top:394.90px;width:1.20px;height:119.90px;background:#0e0e10"></div>
<div style="left:963.00px;top:394.90px;width:1.20px;height:119.90px;background:#0e0e10"></div>
<div style="left:967.20px;top:394.90px;width:1.20px;height:119.90px;background:#0e0e10"></div>
<div style="left:973.10px;top:394.90px;width:1.20px;height:119.90px;background:#0e0e10"></div>
<div style="left:978.90px;top:394.90px;width:1.20px;height:119.90px;background:#0e0e10"></div>
<div style="left:984.00px;top:394.90px;width:1.20px;height:119.90px;background:#0e0e10"></div>
<div style="left:989.90px;top:394.90px;width:1.20px;height:119.90px;background:#0e0e10"></div>
<div style="left:996.10px;top:394.90px;width:1.20px;height:119.90px;background:#0e0e10"></div>
<div style="left:1001.60px;top:394.90px;width:1.20px;height:119.90px;background:#0e0e10"></div>
<div style="left:1007.40px;top:394.90px;width:1.20px;height:119.90px;background:#0e0e10"></div>
<div style="left:1010.00px;top:394.90px;width:1.20px;height:119.90px;background:#0e0e10"></div>
<div style="left:1012.50px;top:394.90px;width:1.20px;height:119.90px;background:#0e0e10"></div>
<div style="left:1023.40px;top:394.90px;width:1.20px;height:119.90px;background:#0e0e10"></div>
<div style="left:1029.30px;top:394.90px;width:1.20px;height:119.90px;background:#0e0e10"></div>
<div style="left:1034.40px;top:394.90px;width:1.20px;height:119.90px;background:#0e0e10"></div>
<div style="left:1041.10px;top:394.90px;width:1.20px;height:119.90px;background:#0e0e10"></div>
<div style="left:1044.40px;top:394.90px;width:1.20px;height:119.90px;background:#0e0e10"></div>
<div style="left:1046.90px;top:394.90px;width:1.20px;height:119.90px;background:#0e0e10"></div>
<div style="left:1050.30px;top:394.90px;width:1.20px;height:119.90px;background:#0e0e10"></div>
<div style="left:1055.30px;top:394.90px;width:1.20px;height:119.90px;background:#0e0e10"></div>
<div style="left:1062.00px;top:394.90px;width:1.20px;height:119.90px;background:#0e0e10"></div>
<div style="left:1067.10px;top:394.90px;width:1.20px;height:119.90px;background:#0e0e10"></div>
<div style="left:1073.00px;top:394.90px;width:1.20px;height:119.90px;background:#0e0e10"></div>
<div style="left:1079.70px;top:394.90px;width:1.20px;height:119.90px;background:#0e0e10"></div>
<div style="left:1082.20px;top:394.90px;width:1.20px;height:119.90px;background:#0e0e10"></div>
<div style="left:1086.00px;top:394.90px;width:1.20px;height:119.90px;background:#0e0e10"></div>
<div style="left:1088.10px;top:394.90px;width:1.20px;height:119.90px;background:#0e0e10"></div>
<div style="left:1094.80px;top:394.90px;width:1.20px;height:119.90px;background:#0e0e10"></div>
<div style="left:1095.40px;top:394.90px;width:1.20px;height:119.90px;background:#0e0e10"></div>
<div style="left:1113.80px;top:394.90px;width:1.20px;height:119.90px;background:#0e0e10"></div>
<div style="left:1116.70px;top:394.90px;width:1.20px;height:119.90px;background:#0e0e10"></div>
<div style="left:1118.80px;top:394.90px;width:1.20px;height:119.90px;background:#0e0e10"></div>
<div style="left:1122.20px;top:394.90px;width:1.20px;height:119.90px;background:#0e0e10"></div>
<div style="left:1127.20px;top:394.90px;width:1.20px;height:119.90px;background:#0e0e10"></div>
<div style="left:1136.40px;top:394.90px;width:1.20px;height:119.90px;background:#0e0e10"></div>
<div style="left:1140.70px;top:394.90px;width:1.20px;height:119.90px;background:#0e0e10"></div>
<div style="left:1142.40px;top:394.90px;width:1.20px;height:119.90px;background:#0e0e10"></div>
<div style="left:1144.00px;top:394.90px;width:1.20px;height:119.90px;background:#0e0e10"></div>
<div style="left:1146.50px;top:394.90px;width:1.20px;height:119.90px;background:#0e0e10"></div>
<div style="left:1155.80px;top:394.90px;width:1.20px;height:119.90px;background:#0e0e10"></div>
<div style="left:1160.00px;top:394.90px;width:1.20px;height:119.90px;background:#0e0e10"></div>
<div style="left:1164.20px;top:394.90px;width:1.20px;height:119.90px;background:#0e0e10"></div>
<div style="left:1166.70px;top:394.90px;width:1.20px;height:119.90px;background:#0e0e10"></div>
<div style="left:1172.60px;top:394.90px;width:1.20px;height:119.90px;background:#0e0e10"></div>
<div style="left:1175.90px;top:394.90px;width:1.20px;height:119.90px;background:#0e0e10"></div>
<div style="left:1178.40px;top:394.90px;width:1.20px;height:119.90px;background:#0e0e10"></div>
<div style="left:1185.20px;top:394.90px;width:1.20px;height:119.90px;background:#0e0e10"></div>
<div style="left:1191.00px;top:394.90px;width:1.20px;height:119.90px;background:#0e0e10"></div>
<div style="left:1201.10px;top:394.90px;width:1.20px;height:119.90px;background:#0e0e10"></div>
<div style="left:1205.30px;top:394.90px;width:1.20px;height:119.90px;background:#0e0e10"></div>
<div style="left:1207.80px;top:394.90px;width:1.20px;height:119.90px;background:#0e0e10"></div>
<div style="left:1213.70px;top:394.90px;width:1.20px;height:119.90px;background:#0e0e10"></div>
<div style="left:1217.90px;top:394.90px;width:1.20px;height:119.90px;background:#0e0e10"></div>
<div style="left:1222.10px;top:394.90px;width:1.20px;height:119.90px;background:#0e0e10"></div>
<div style="left:1227.10px;top:394.90px;width:1.20px;height:119.90px;background:#0e0e10"></div>
<div style="left:1230.40px;top:394.90px;width:1.20px;height:119.90px;background:#0e0e10"></div>
<div style="left:1231.40px;top:394.90px;width:1.20px;height:119.90px;background:#0e0e10"></div>
<div style="left:1241.40px;top:394.90px;width:1.20px;height:119.90px;background:#0e0e10"></div>
<div style="left:1248.90px;top:394.90px;width:1.20px;height:119.90px;background:#0e0e10"></div>
<div style="left:1254.80px;top:394.90px;width:1.20px;height:119.90px;background:#0e0e10"></div>
<div style="left:1259.90px;top:394.90px;width:1.20px;height:119.90px;background:#0e0e10"></div>
<div style="left:1267.40px;top:394.90px;width:1.20px;height:119.90px;background:#0e0e10"></div>
<div style="left:1275.00px;top:394.90px;width:1.20px;height:119.90px;background:#0e0e10"></div>
<div style="left:1280.00px;top:394.90px;width:1.20px;height:119.90px;background:#0e0e10"></div>
<div style="left:1283.40px;top:394.90px;width:1.20px;height:119.90px;background:#0e0e10"></div>
<div style="left:1289.20px;top:394.90px;width:1.20px;height:119.90px;background:#0e0e10"></div>
<div style="left:1290.40px;top:394.90px;width:1.20px;height:119.90px;background:#0e0e10"></div>
<div style="left:1307.40px;top:394.90px;width:1.20px;height:119.90px;background:#0e0e10"></div>
<div style="left:1316.90px;top:394.90px;width:1.20px;height:119.90px;background:#0e0e10"></div>
<div style="left:1327.40px;top:394.90px;width:1.20px;height:119.90px;background:#0e0e10"></div>
<div style="left:1328.40px;top:394.90px;width:1.20px;height:119.90px;background:#0e0e10"></div>
<div style="left:1344.40px;top:394.90px;width:1.20px;height:119.90px;background:#0e0e10"></div>
<div style="left:1349.70px;top:394.90px;width:1.20px;height:119.90px;background:#0e0e10"></div>
<div style="left:1367.00px;top:394.90px;width:1.20px;height:119.90px;background:#0e0e10"></div>
<div style="left:1372.90px;top:394.90px;width:1.20px;height:119.90px;background:#0e0e10"></div>
<div style="left:1374.60px;top:394.90px;width:1.20px;height:119.90px;background:#0e0e10"></div>
<div style="left:1383.80px;top:394.90px;width:1.20px;height:119.90px;background:#0e0e10"></div>
<div style="left:1387.20px;top:394.90px;width:1.20px;height:119.90px;background:#0e0e10"></div>
<div style="left:1389.70px;top:394.90px;width:1.20px;height:119.90px;background:#0e0e10"></div>
<div style="left:1403.10px;top:394.90px;width:1.20px;height:119.90px;background:#0e0e10"></div>
<div style="left:1406.40px;top:394.90px;width:1.20px;height:119.90px;background:#0e0e10"></div>
<div style="left:1407.40px;top:394.90px;width:1.20px;height:119.90px;background:#0e0e10"></div>
<div style="left:1420.70px;top:394.90px;width:1.20px;height:119.90px;background:#0e0e10"></div>
<div style="left:1421.60px;top:394.90px;width:1.20px;height:119.90px;background:#0e0e10"></div>
<div style="left:1438.40px;top:394.90px;width:1.20px;height:119.90px;background:#0e0e10"></div>
<div style="left:1443.70px;top:394.90px;width:1.20px;height:119.90px;background:#0e0e10"></div>
<div style="left:1453.10px;top:394.90px;width:1.20px;height:119.90px;background:#0e0e10"></div>
<div style="left:1455.20px;top:394.90px;width:1.20px;height:119.90px;background:#0e0e10"></div>
<div style="left:1459.40px;top:394.90px;width:1.20px;height:119.90px;background:#0e0e10"></div>
<div style="left:1464.90px;top:394.90px;width:1.20px;height:119.90px;background:#0e0e10"></div>
<div style="left:1471.90px;top:394.90px;width:1.20px;height:119.90px;background:#0e0e10"></div>
<div style="left:1478.70px;top:394.90px;width:1.20px;height:119.90px;background:#0e0e10"></div>
<div style="left:1487.10px;top:394.90px;width:1.20px;height:119.90px;background:#0e0e10"></div>
<div style="left:1490.40px;top:394.90px;width:1.20px;height:119.90px;background:#0e0e10"></div>
<div style="left:1491.80px;top:394.90px;width:1.20px;height:119.90px;background:#0e0e10"></div>
<div style="left:1507.20px;top:394.90px;width:1.20px;height:119.90px;background:#0e0e10"></div>
<div style="left:1514.80px;top:394.90px;width:1.20px;height:119.90px;background:#0e0e10"></div>
<div style="left:1523.10px;top:394.90px;width:1.20px;height:119.90px;background:#0e0e10"></div>
<div style="left:1528.20px;top:394.90px;width:1.20px;height:119.90px;background:#0e0e10"></div>
<div style="left:1534.90px;top:394.90px;width:1.20px;height:119.90px;background:#0e0e10"></div>
<div style="left:1545.00px;top:394.90px;width:1.20px;height:119.90px;background:#0e0e10"></div>
<div style="left:1546.60px;top:394.90px;width:1.20px;height:119.90px;background:#0e0e10"></div>
<div style="left:1550.00px;top:394.90px;width:1.20px;height:119.90px;background:#0e0e10"></div>
<div style="left:1557.60px;top:394.90px;width:1.20px;height:119.90px;background:#0e0e10"></div>
<div style="left:1563.40px;top:394.90px;width:1.20px;height:119.90px;background:#0e0e10"></div>
<div style="left:1569.40px;top:394.90px;width:1.20px;height:119.90px;background:#0e0e10"></div>
<div style="left:1577.70px;top:394.90px;width:1.20px;height:119.90px;background:#0e0e10"></div>
<div style="left:1587.80px;top:394.90px;width:1.20px;height:119.90px;background:#0e0e10"></div>
<div style="left:1592.80px;top:394.90px;width:1.20px;height:119.90px;background:#0e0e10"></div>
<div style="left:1596.20px;top:394.90px;width:1.20px;height:119.90px;background:#0e0e10"></div>
<div style="left:1601.20px;top:394.90px;width:1.20px;height:119.90px;background:#0e0e10"></div>
<div style="left:1608.80px;top:394.90px;width:1.20px;height:119.90px;background:#0e0e10"></div>
<div style="left:1612.10px;top:394.90px;width:1.20px;height:119.90px;background:#0e0e10"></div>
<div style="left:1614.60px;top:394.90px;width:1.20px;height:119.90px;background:#0e0e10"></div>
<div style="left:1616.40px;top:394.90px;width:1.20px;height:119.90px;background:#0e0e10"></div>
<div style="left:1629.40px;top:394.90px;width:1.20px;height:119.90px;background:#0e0e10"></div>
<div style="left:1644.00px;top:394.90px;width:1.20px;height:119.90px;background:#0e0e10"></div>
<div style="left:482.00px;top:394.90px;width:1.20px;height:119.90px;background:#0e0e10"></div>
<div style="left:484.80px;top:394.90px;width:1.20px;height:119.90px;background:#0e0e10"></div>
<div style="left:434.70px;top:394.90px;width:4.30px;height:119.90px;background:#c04a7c"></div>
<div style="left:439.70px;top:394.90px;width:1.50px;height:119.90px;background:#c04a7c"></div>
<div style="left:39.70px;top:394.90px;width:15.60px;height:119.90px;background:#28282e"></div>
<div style="left:39.50px;top:394.90px;width:16.00px;height:119.90px;background:#3b6b4c;border:1px solid #141416;border-radius:4px"></div>
<div style="left:42.00px;top:427.60px;width:12.00px;height:1.00px;background:#7fa68b"></div>
<div style="left:40.50px;top:489.00px;width:14.00px;height:1.00px;background:#2a4a36"></div>
<svg style="position:absolute;left:41.2px;top:0;overflow:visible" width="12.6" height="1"><polygon points="0.0,434.0 0.6,434.0 1.3,429.9 1.9,435.2 2.5,436.0 3.1,434.7 3.8,436.6 4.4,429.9 5.0,433.8 5.7,434.4 6.3,429.9 6.9,434.3 7.6,434.6 8.2,433.9 8.8,434.7 9.4,434.1 10.1,436.4 10.7,436.3 11.3,434.3 12.0,433.6 12.6,434.6 12.6,449.7 12.0,451.3 11.3,450.2 10.7,447.4 10.1,448.6 9.4,451.5 8.8,450.6 8.2,449.9 7.6,449.3 6.9,449.7 6.3,453.2 5.7,450.1 5.0,450.8 4.4,453.6 3.8,447.5 3.1,450.9 2.5,449.4 1.9,448.4 1.3,452.7 0.6,449.2 0.0,450.0" fill="#d9eddf"/><line x1="0" y1="442.4" x2="12.6" y2="442.4" stroke="#9fb6a6" stroke-width="1"/></svg>
<div style="left:243.40px;top:394.90px;width:14.90px;height:119.90px;background:#28282e"></div>
<div style="left:243.20px;top:394.90px;width:15.30px;height:119.90px;background:#3b6b4c;border:1px solid #141416;border-radius:4px"></div>
<div style="left:244.20px;top:489.00px;width:13.30px;height:1.00px;background:#2a4a36"></div>
<svg style="position:absolute;left:244.9px;top:0;overflow:visible" width="11.9" height="1"><polygon points="0.0,431.3 0.6,431.3 1.3,433.9 1.9,435.3 2.5,429.9 3.1,435.1 3.8,429.9 4.4,433.5 5.0,432.4 5.6,434.7 6.3,435.7 6.9,435.5 7.5,429.9 8.1,435.3 8.8,434.2 9.4,429.9 10.0,434.3 10.6,435.8 11.3,429.9 11.9,436.7 11.9,447.5 11.3,452.7 10.6,447.9 10.0,450.9 9.4,455.8 8.8,450.5 8.1,450.2 7.5,454.0 6.9,449.2 6.3,448.2 5.6,450.8 5.0,451.7 4.4,451.7 3.8,454.1 3.1,449.1 2.5,455.3 1.9,448.4 1.3,450.9 0.6,454.0 0.0,453.6" fill="#d9eddf"/><line x1="0" y1="442.4" x2="11.9" y2="442.4" stroke="#9fb6a6" stroke-width="1"/></svg>
<div style="left:333.90px;top:394.90px;width:14.40px;height:119.90px;background:#28282e"></div>
<div style="left:333.70px;top:394.90px;width:14.80px;height:119.90px;background:#3b6b4c;border:1px solid #141416;border-radius:4px"></div>
<div style="left:336.20px;top:427.60px;width:10.80px;height:1.00px;background:#7fa68b"></div>
<div style="left:334.70px;top:489.00px;width:12.80px;height:1.00px;background:#2a4a36"></div>
<svg style="position:absolute;left:335.4px;top:0;overflow:visible" width="11.4" height="1"><polygon points="0.0,434.5 0.6,434.5 1.2,436.4 1.8,437.0 2.4,435.9 3.0,437.2 3.6,434.9 4.2,434.6 4.8,430.7 5.4,434.8 6.0,437.1 6.6,435.6 7.2,437.0 7.8,435.2 8.4,435.8 9.0,436.8 9.6,438.2 10.2,436.5 10.8,436.0 11.4,437.6 11.4,446.6 10.8,449.4 10.2,447.9 9.6,446.1 9.0,446.9 8.4,448.1 7.8,449.8 7.2,448.0 6.6,449.4 6.0,446.9 5.4,450.1 4.8,453.6 4.2,448.9 3.6,448.4 3.0,447.0 2.4,447.8 1.8,448.4 1.2,447.8 0.6,449.1 0.0,448.8" fill="#d9eddf"/><line x1="0" y1="442.4" x2="11.4" y2="442.4" stroke="#9fb6a6" stroke-width="1"/></svg>
<div style="left:441.70px;top:394.90px;width:11.90px;height:119.90px;background:#28282e"></div>
<div style="left:441.50px;top:394.90px;width:12.30px;height:119.90px;background:#3b6b4c;border:1px solid #141416;border-radius:4px"></div>
<div style="left:444.00px;top:427.60px;width:8.30px;height:1.00px;background:#7fa68b"></div>
<div style="left:442.50px;top:489.00px;width:10.30px;height:1.00px;background:#2a4a36"></div>
<svg style="position:absolute;left:443.2px;top:0;overflow:visible" width="8.9" height="1"><polygon points="0.0,433.8 0.6,433.8 1.3,434.2 1.9,433.9 2.5,433.8 3.2,433.1 3.8,433.2 4.5,436.3 5.1,433.8 5.7,433.2 6.4,434.8 7.0,433.3 7.6,433.5 8.3,433.9 8.9,435.8 8.9,448.8 8.3,449.9 7.6,451.9 7.0,451.1 6.4,448.5 5.7,450.7 5.1,451.4 4.5,448.9 3.8,450.2 3.2,450.9 2.5,451.4 1.9,449.6 1.3,450.9 0.6,449.5 0.0,450.5" fill="#d9eddf"/><line x1="0" y1="442.4" x2="8.9" y2="442.4" stroke="#9fb6a6" stroke-width="1"/></svg>
<div style="left:527.10px;top:394.90px;width:11.40px;height:119.90px;background:#28282e"></div>
<div style="left:526.90px;top:394.90px;width:11.80px;height:119.90px;background:#3b6b4c;border:1px solid #141416;border-radius:4px"></div>
<div style="left:529.40px;top:427.60px;width:7.80px;height:1.00px;background:#7fa68b"></div>
<div style="left:527.90px;top:489.00px;width:9.80px;height:1.00px;background:#2a4a36"></div>
<svg style="position:absolute;left:528.6px;top:0;overflow:visible" width="8.4" height="1"><polygon points="0.0,433.1 0.6,433.1 1.3,433.0 1.9,429.9 2.6,429.9 3.2,436.5 3.9,435.4 4.5,435.7 5.2,435.9 5.8,435.5 6.5,435.8 7.1,436.5 7.8,436.6 8.4,437.4 8.4,447.5 7.8,448.0 7.1,448.0 6.5,448.5 5.8,449.1 5.2,448.1 4.5,448.0 3.9,449.1 3.2,448.4 2.6,455.4 1.9,454.1 1.3,451.4 0.6,451.0 0.0,451.1" fill="#d9eddf"/><line x1="0" y1="442.4" x2="8.4" y2="442.4" stroke="#9fb6a6" stroke-width="1"/></svg>
<div style="left:538.70px;top:394.90px;width:18.60px;height:119.90px;background:#28282e"></div>
<div style="left:538.50px;top:394.90px;width:19.00px;height:119.90px;background:#3b6b4c;border:1px solid #141416;border-radius:4px"></div>
<div style="left:539.50px;top:489.00px;width:17.00px;height:1.00px;background:#2a4a36"></div>
<svg style="position:absolute;left:540.2px;top:0;overflow:visible" width="15.6" height="1"><polygon points="0.0,431.3 0.6,431.3 1.2,434.9 1.9,432.3 2.5,434.8 3.1,435.0 3.7,434.8 4.4,433.8 5.0,435.3 5.6,434.7 6.2,429.9 6.9,429.9 7.5,434.1 8.1,432.9 8.7,436.4 9.4,434.0 10.0,435.5 10.6,436.2 11.2,435.3 11.9,437.2 12.5,437.3 13.1,430.5 13.7,437.6 14.4,436.9 15.0,437.2 15.6,431.8 15.6,451.4 15.0,447.3 14.4,448.3 13.7,446.9 13.1,455.0 12.5,447.5 11.9,447.2 11.2,448.2 10.6,449.0 10.0,449.6 9.4,449.4 8.7,447.3 8.1,452.8 7.5,449.2 6.9,453.6 6.2,454.5 5.6,449.3 5.0,449.1 4.4,451.4 3.7,449.4 3.1,450.5 2.5,450.0 1.9,453.2 1.2,448.5 0.6,452.7 0.0,454.0" fill="#d9eddf"/><line x1="0" y1="442.4" x2="15.6" y2="442.4" stroke="#9fb6a6" stroke-width="1"/></svg>
<div style="left:557.50px;top:394.90px;width:14.00px;height:119.90px;background:#28282e"></div>
<div style="left:557.30px;top:394.90px;width:14.40px;height:119.90px;background:#3b6b4c;border:1px solid #141416;border-radius:4px"></div>
<div style="left:559.80px;top:427.60px;width:10.40px;height:1.00px;background:#7fa68b"></div>
<div style="left:558.30px;top:489.00px;width:12.40px;height:1.00px;background:#2a4a36"></div>
<svg style="position:absolute;left:559.0px;top:0;overflow:visible" width="11.0" height="1"><polygon points="0.0,433.8 0.6,433.8 1.2,436.8 1.8,434.2 2.4,435.3 3.1,434.1 3.7,434.2 4.3,434.8 4.9,434.4 5.5,436.0 6.1,429.9 6.7,436.6 7.3,434.8 7.9,436.7 8.6,436.2 9.2,436.9 9.8,436.2 10.4,437.0 11.0,436.8 11.0,447.7 10.4,446.7 9.8,449.2 9.2,448.4 8.6,448.1 7.9,447.4 7.3,450.0 6.7,447.2 6.1,455.2 5.5,447.7 4.9,450.3 4.3,449.3 3.7,450.2 3.1,450.2 2.4,448.3 1.8,449.4 1.2,446.9 0.6,450.1 0.0,450.0" fill="#d9eddf"/><line x1="0" y1="442.4" x2="11.0" y2="442.4" stroke="#9fb6a6" stroke-width="1"/></svg>
<div style="left:628.60px;top:394.90px;width:17.40px;height:119.90px;background:#28282e"></div>
<div style="left:628.40px;top:394.90px;width:17.80px;height:119.90px;background:#3b6b4c;border:1px solid #141416;border-radius:4px"></div>
<div style="left:630.90px;top:427.60px;width:13.80px;height:1.00px;background:#7fa68b"></div>
<div style="left:629.40px;top:489.00px;width:15.80px;height:1.00px;background:#2a4a36"></div>
<svg style="position:absolute;left:630.1px;top:0;overflow:visible" width="14.4" height="1"><polygon points="0.0,432.8 0.6,432.8 1.3,435.3 1.9,433.4 2.5,433.1 3.1,432.9 3.8,429.9 4.4,433.7 5.0,434.2 5.6,435.4 6.3,434.5 6.9,435.2 7.5,437.5 8.1,437.4 8.8,435.9 9.4,431.3 10.0,436.0 10.6,432.0 11.3,432.3 11.9,436.6 12.5,436.2 13.1,437.6 13.8,437.4 14.4,438.7 14.4,446.2 13.8,446.5 13.1,447.4 12.5,448.1 11.9,448.3 11.3,451.3 10.6,453.1 10.0,448.6 9.4,453.9 8.8,448.9 8.1,447.3 7.5,446.9 6.9,448.7 6.3,450.8 5.6,449.7 5.0,450.3 4.4,451.3 3.8,455.5 3.1,452.1 2.5,450.8 1.9,451.5 1.3,449.2 0.6,450.9 0.0,451.2" fill="#d9eddf"/><line x1="0" y1="442.4" x2="14.4" y2="442.4" stroke="#9fb6a6" stroke-width="1"/></svg>
<div style="left:645.40px;top:394.90px;width:15.20px;height:119.90px;background:#28282e"></div>
<div style="left:645.20px;top:394.90px;width:15.60px;height:119.90px;background:#3b6b4c;border:1px solid #141416;border-radius:4px"></div>
<div style="left:647.70px;top:427.60px;width:11.60px;height:1.00px;background:#7fa68b"></div>
<div style="left:646.20px;top:489.00px;width:13.60px;height:1.00px;background:#2a4a36"></div>
<svg style="position:absolute;left:646.9px;top:0;overflow:visible" width="12.2" height="1"><polygon points="0.0,432.6 0.6,432.6 1.2,434.0 1.8,435.9 2.4,432.6 3.0,434.9 3.7,435.1 4.3,433.5 4.9,436.6 5.5,436.8 6.1,434.5 6.7,434.7 7.3,437.7 7.9,437.0 8.5,437.1 9.1,436.1 9.8,435.9 10.4,437.8 11.0,436.2 11.6,437.8 12.2,438.8 12.2,445.6 11.6,446.1 11.0,448.0 10.4,446.7 9.8,449.4 9.1,447.7 8.5,446.6 7.9,447.3 7.3,446.8 6.7,448.6 6.1,449.3 5.5,447.7 4.9,448.7 4.3,451.0 3.7,448.7 3.0,450.6 2.4,450.3 1.8,448.0 1.2,450.3 0.6,451.1 0.0,452.2" fill="#d9eddf"/><line x1="0" y1="442.4" x2="12.2" y2="442.4" stroke="#9fb6a6" stroke-width="1"/></svg>
<div style="left:733.30px;top:394.90px;width:14.20px;height:119.90px;background:#28282e"></div>
<div style="left:733.10px;top:394.90px;width:14.60px;height:119.90px;background:#3b6b4c;border:1px solid #141416;border-radius:4px"></div>
<div style="left:734.10px;top:489.00px;width:12.60px;height:1.00px;background:#2a4a36"></div>
<svg style="position:absolute;left:734.8px;top:0;overflow:visible" width="11.2" height="1"><polygon points="0.0,433.7 0.6,433.7 1.2,434.4 1.9,434.8 2.5,434.3 3.1,434.7 3.7,433.8 4.4,436.0 5.0,433.9 5.6,436.3 6.2,436.9 6.8,434.6 7.5,434.7 8.1,437.3 8.7,430.9 9.3,437.1 10.0,435.7 10.6,436.5 11.2,438.0 11.2,447.3 10.6,447.7 10.0,448.6 9.3,448.1 8.7,452.5 8.1,446.6 7.5,449.6 6.8,449.2 6.2,447.2 5.6,448.0 5.0,450.8 4.4,448.9 3.7,450.5 3.1,448.7 2.5,450.7 1.9,448.6 1.2,451.1 0.6,451.5 0.0,450.3" fill="#d9eddf"/><line x1="0" y1="442.4" x2="11.2" y2="442.4" stroke="#9fb6a6" stroke-width="1"/></svg>
<div style="left:747.20px;top:394.90px;width:13.10px;height:119.90px;background:#28282e"></div>
<div style="left:747.00px;top:394.90px;width:13.50px;height:119.90px;background:#3b6b4c;border:1px solid #141416;border-radius:4px"></div>
<div style="left:749.50px;top:427.60px;width:9.50px;height:1.00px;background:#7fa68b"></div>
<div style="left:748.00px;top:489.00px;width:11.50px;height:1.00px;background:#2a4a36"></div>
<svg style="position:absolute;left:748.7px;top:0;overflow:visible" width="10.1" height="1"><polygon points="0.0,432.8 0.6,432.8 1.3,432.1 1.9,429.9 2.5,432.6 3.2,436.3 3.8,433.0 4.4,429.9 5.0,434.4 5.7,433.7 6.3,434.8 6.9,433.6 7.6,434.2 8.2,435.8 8.8,429.9 9.5,434.7 10.1,429.9 10.1,453.5 9.5,449.1 8.8,454.4 8.2,449.1 7.6,449.3 6.9,451.9 6.3,448.6 5.7,451.4 5.0,451.1 4.4,453.0 3.8,452.6 3.2,449.0 2.5,452.0 1.9,455.1 1.3,453.3 0.6,451.3 0.0,450.8" fill="#d9eddf"/><line x1="0" y1="442.4" x2="10.1" y2="442.4" stroke="#9fb6a6" stroke-width="1"/></svg>
<div style="left:892.50px;top:394.90px;width:11.90px;height:119.90px;background:#28282e"></div>
<div style="left:892.30px;top:394.90px;width:12.30px;height:119.90px;background:#3b6b4c;border:1px solid #141416;border-radius:4px"></div>
<div style="left:894.80px;top:427.60px;width:8.30px;height:1.00px;background:#7fa68b"></div>
<div style="left:893.30px;top:489.00px;width:10.30px;height:1.00px;background:#2a4a36"></div>
<svg style="position:absolute;left:894.0px;top:0;overflow:visible" width="8.9" height="1"><polygon points="0.0,431.3 0.6,431.3 1.3,429.9 1.9,432.2 2.5,432.5 3.2,435.5 3.8,432.8 4.4,432.7 5.1,432.0 5.7,435.2 6.4,435.1 7.0,435.7 7.6,434.0 8.3,435.2 8.9,429.9 8.9,452.6 8.3,450.2 7.6,449.5 7.0,448.6 6.4,449.3 5.7,449.8 5.1,453.3 4.4,450.7 3.8,452.4 3.2,448.8 2.5,451.0 1.9,451.3 1.3,454.3 0.6,453.6 0.0,452.1" fill="#d9eddf"/><line x1="0" y1="442.4" x2="8.9" y2="442.4" stroke="#9fb6a6" stroke-width="1"/></svg>
<div style="left:916.40px;top:394.90px;width:13.90px;height:119.90px;background:#28282e"></div>
<div style="left:916.20px;top:394.90px;width:14.30px;height:119.90px;background:#3b6b4c;border:1px solid #141416;border-radius:4px"></div>
<div style="left:918.70px;top:427.60px;width:10.30px;height:1.00px;background:#7fa68b"></div>
<div style="left:917.20px;top:489.00px;width:12.30px;height:1.00px;background:#2a4a36"></div>
<svg style="position:absolute;left:917.9px;top:0;overflow:visible" width="10.9" height="1"><polygon points="0.0,431.5 0.6,431.5 1.2,429.9 1.8,433.5 2.4,429.9 3.0,433.7 3.6,431.0 4.2,431.7 4.8,435.3 5.4,431.4 6.1,429.9 6.7,432.1 7.3,429.9 7.9,434.7 8.5,434.4 9.1,433.2 9.7,434.6 10.3,432.8 10.9,429.9 10.9,453.3 10.3,451.9 9.7,448.7 9.1,451.7 8.5,451.1 7.9,450.7 7.3,455.9 6.7,450.8 6.1,453.9 5.4,452.4 4.8,448.9 4.2,452.4 3.6,452.8 3.0,449.7 2.4,453.4 1.8,450.4 1.2,454.9 0.6,454.2 0.0,454.2" fill="#d9eddf"/><line x1="0" y1="442.4" x2="10.9" y2="442.4" stroke="#9fb6a6" stroke-width="1"/></svg>
<div style="left:1095.20px;top:394.90px;width:19.10px;height:119.90px;background:#28282e"></div>
<div style="left:1095.00px;top:394.90px;width:19.50px;height:119.90px;background:#3b6b4c;border:1px solid #141416;border-radius:4px"></div>
<div style="left:1097.50px;top:427.60px;width:15.50px;height:1.00px;background:#7fa68b"></div>
<div style="left:1096.00px;top:489.00px;width:17.50px;height:1.00px;background:#2a4a36"></div>
<svg style="position:absolute;left:1096.7px;top:0;overflow:visible" width="16.1" height="1"><polygon points="0.0,431.3 0.6,431.3 1.2,431.1 1.9,431.3 2.5,433.6 3.1,434.8 3.7,429.9 4.3,432.6 5.0,431.0 5.6,429.9 6.2,432.0 6.8,433.4 7.4,431.9 8.0,434.8 8.7,432.8 9.3,434.5 9.9,434.8 10.5,434.0 11.1,433.2 11.8,432.6 12.4,433.5 13.0,429.9 13.6,435.1 14.2,433.1 14.9,431.9 15.5,432.3 16.1,433.2 16.1,450.4 15.5,450.8 14.9,451.6 14.2,450.9 13.6,450.3 13.0,453.5 12.4,451.8 11.8,450.5 11.1,451.9 10.5,451.6 9.9,449.8 9.3,449.3 8.7,452.2 8.0,449.1 7.4,452.9 6.8,451.4 6.2,451.5 5.6,454.3 5.0,452.4 4.3,453.2 3.7,452.5 3.1,450.2 2.5,451.5 1.9,452.3 1.2,454.2 0.6,451.9 0.0,452.7" fill="#d9eddf"/><line x1="0" y1="442.4" x2="16.1" y2="442.4" stroke="#9fb6a6" stroke-width="1"/></svg>
<div style="left:1231.50px;top:394.90px;width:11.20px;height:119.90px;background:#28282e"></div>
<div style="left:1231.30px;top:394.90px;width:11.60px;height:119.90px;background:#3b6b4c;border:1px solid #141416;border-radius:4px"></div>
<div style="left:1233.80px;top:427.60px;width:7.60px;height:1.00px;background:#7fa68b"></div>
<div style="left:1232.30px;top:489.00px;width:9.60px;height:1.00px;background:#2a4a36"></div>
<svg style="position:absolute;left:1233.0px;top:0;overflow:visible" width="8.2" height="1"><polygon points="0.0,434.0 0.6,434.0 1.3,434.7 1.9,436.5 2.5,429.9 3.2,435.6 3.8,437.0 4.4,436.7 5.0,436.8 5.7,436.6 6.3,436.9 6.9,431.7 7.6,437.0 8.2,435.9 8.2,447.9 7.6,447.3 6.9,453.9 6.3,448.0 5.7,448.8 5.0,447.5 4.4,448.5 3.8,447.4 3.2,448.0 2.5,453.9 1.9,448.1 1.3,449.3 0.6,449.9 0.0,450.7" fill="#d9eddf"/><line x1="0" y1="442.4" x2="8.2" y2="442.4" stroke="#9fb6a6" stroke-width="1"/></svg>
<div style="left:1290.70px;top:394.90px;width:18.20px;height:119.90px;background:#28282e"></div>
<div style="left:1290.50px;top:394.90px;width:18.60px;height:119.90px;background:#3b6b4c;border:1px solid #141416;border-radius:4px"></div>
<div style="left:1293.00px;top:427.60px;width:14.60px;height:1.00px;background:#7fa68b"></div>
<div style="left:1291.50px;top:489.00px;width:16.60px;height:1.00px;background:#2a4a36"></div>
<svg style="position:absolute;left:1292.2px;top:0;overflow:visible" width="15.2" height="1"><polygon points="0.0,432.7 0.6,432.7 1.2,434.8 1.8,435.6 2.4,432.0 3.0,432.1 3.6,435.9 4.3,432.4 4.9,435.6 5.5,434.6 6.1,435.5 6.7,434.2 7.3,435.4 7.9,436.2 8.5,436.3 9.1,434.1 9.7,435.3 10.3,434.9 10.9,429.9 11.6,434.8 12.2,433.7 12.8,429.9 13.4,429.9 14.0,429.9 14.6,436.5 15.2,429.9 15.2,454.3 14.6,448.5 14.0,454.8 13.4,454.1 12.8,452.9 12.2,449.8 11.6,450.3 10.9,454.7 10.3,449.4 9.7,449.3 9.1,450.6 8.5,447.5 7.9,448.7 7.3,449.9 6.7,449.2 6.1,448.7 5.5,450.6 4.9,448.3 4.3,452.8 3.6,448.3 3.0,452.1 2.4,451.1 1.8,449.5 1.2,450.6 0.6,450.6 0.0,452.0" fill="#d9eddf"/><line x1="0" y1="442.4" x2="15.2" y2="442.4" stroke="#9fb6a6" stroke-width="1"/></svg>
<div style="left:1328.40px;top:394.90px;width:16.90px;height:119.90px;background:#28282e"></div>
<div style="left:1328.20px;top:394.90px;width:17.30px;height:119.90px;background:#3b6b4c;border:1px solid #141416;border-radius:4px"></div>
<div style="left:1330.70px;top:427.60px;width:13.30px;height:1.00px;background:#7fa68b"></div>
<div style="left:1329.20px;top:489.00px;width:15.30px;height:1.00px;background:#2a4a36"></div>
<svg style="position:absolute;left:1329.9px;top:0;overflow:visible" width="13.9" height="1"><polygon points="0.0,431.3 0.6,431.3 1.2,433.0 1.8,434.7 2.4,435.3 3.0,435.1 3.6,432.4 4.2,432.2 4.8,434.2 5.4,435.7 6.0,433.9 6.6,429.9 7.3,434.5 7.9,435.0 8.5,436.8 9.1,436.0 9.7,434.2 10.3,435.2 10.9,430.9 11.5,437.2 12.1,436.4 12.7,432.0 13.3,436.8 13.9,436.3 13.9,447.7 13.3,447.8 12.7,451.2 12.1,447.7 11.5,448.1 10.9,454.4 10.3,448.5 9.7,449.8 9.1,448.0 8.5,447.9 7.9,450.2 7.3,450.8 6.6,454.4 6.0,449.6 5.4,449.7 4.8,449.1 4.2,451.3 3.6,451.9 3.0,448.9 2.4,449.7 1.8,450.7 1.2,452.5 0.6,454.5 0.0,453.7" fill="#d9eddf"/><line x1="0" y1="442.4" x2="13.9" y2="442.4" stroke="#9fb6a6" stroke-width="1"/></svg>
<div style="left:1407.50px;top:394.90px;width:13.90px;height:119.90px;background:#28282e"></div>
<div style="left:1407.30px;top:394.90px;width:14.30px;height:119.90px;background:#3b6b4c;border:1px solid #141416;border-radius:4px"></div>
<div style="left:1409.80px;top:427.60px;width:10.30px;height:1.00px;background:#7fa68b"></div>
<div style="left:1408.30px;top:489.00px;width:12.30px;height:1.00px;background:#2a4a36"></div>
<svg style="position:absolute;left:1409.0px;top:0;overflow:visible" width="10.9" height="1"><polygon points="0.0,434.4 0.6,434.4 1.2,436.6 1.8,437.0 2.4,430.2 3.0,434.9 3.6,430.7 4.2,436.1 4.8,436.6 5.4,437.3 6.1,436.7 6.7,438.1 7.3,436.9 7.9,438.0 8.5,437.0 9.1,437.9 9.7,436.7 10.3,438.9 10.9,438.0 10.9,446.5 10.3,446.0 9.7,448.2 9.1,446.0 8.5,447.0 7.9,446.6 7.3,447.0 6.7,445.8 6.1,447.4 5.4,446.5 4.8,448.3 4.2,448.6 3.6,454.0 3.0,449.3 2.4,454.5 1.8,447.1 1.2,447.8 0.6,450.2 0.0,449.6" fill="#d9eddf"/><line x1="0" y1="442.4" x2="10.9" y2="442.4" stroke="#9fb6a6" stroke-width="1"/></svg>
<div style="left:1421.60px;top:394.90px;width:18.20px;height:119.90px;background:#28282e"></div>
<div style="left:1421.40px;top:394.90px;width:18.60px;height:119.90px;background:#3b6b4c;border:1px solid #141416;border-radius:4px"></div>
<div style="left:1423.90px;top:427.60px;width:14.60px;height:1.00px;background:#7fa68b"></div>
<div style="left:1422.40px;top:489.00px;width:16.60px;height:1.00px;background:#2a4a36"></div>
<svg style="position:absolute;left:1423.1px;top:0;overflow:visible" width="15.2" height="1"><polygon points="0.0,434.2 0.6,434.2 1.2,436.1 1.8,434.3 2.4,434.9 3.0,429.9 3.6,436.4 4.3,434.7 4.9,436.2 5.5,435.3 6.1,434.2 6.7,435.2 7.3,435.2 7.9,436.9 8.5,434.8 9.1,437.4 9.7,430.8 10.3,435.7 10.9,431.1 11.6,436.8 12.2,431.3 12.8,435.4 13.4,431.6 14.0,435.7 14.6,435.9 15.2,432.0 15.2,453.1 14.6,448.2 14.0,449.0 13.4,451.1 12.8,448.3 12.2,454.1 11.6,448.2 10.9,453.5 10.3,449.2 9.7,451.8 9.1,446.9 8.5,448.6 7.9,446.9 7.3,448.8 6.7,449.1 6.1,451.0 5.5,449.5 4.9,449.0 4.3,450.6 3.6,448.9 3.0,453.4 2.4,448.9 1.8,449.5 1.2,448.3 0.6,450.7 0.0,450.8" fill="#d9eddf"/><line x1="0" y1="442.4" x2="15.2" y2="442.4" stroke="#9fb6a6" stroke-width="1"/></svg>
<div style="left:1491.40px;top:394.90px;width:18.90px;height:119.90px;background:#28282e"></div>
<div style="left:1491.20px;top:394.90px;width:19.30px;height:119.90px;background:#3b6b4c;border:1px solid #141416;border-radius:4px"></div>
<div style="left:1493.70px;top:427.60px;width:15.30px;height:1.00px;background:#7fa68b"></div>
<div style="left:1492.20px;top:489.00px;width:17.30px;height:1.00px;background:#2a4a36"></div>
<svg style="position:absolute;left:1492.9px;top:0;overflow:visible" width="15.9" height="1"><polygon points="0.0,433.4 0.6,433.4 1.2,432.7 1.8,429.9 2.4,434.9 3.1,434.0 3.7,429.9 4.3,429.9 4.9,433.9 5.5,435.0 6.1,436.2 6.7,433.9 7.3,435.9 7.9,429.9 8.6,436.8 9.2,434.3 9.8,435.7 10.4,436.9 11.0,436.5 11.6,435.6 12.2,436.5 12.8,434.8 13.5,436.3 14.1,434.7 14.7,437.0 15.3,435.7 15.9,434.8 15.9,449.0 15.3,448.7 14.7,448.0 14.1,450.3 13.5,447.6 12.8,449.9 12.2,448.0 11.6,449.7 11.0,448.7 10.4,446.8 9.8,449.5 9.2,449.7 8.6,448.1 7.9,454.8 7.3,448.9 6.7,451.6 6.1,448.0 5.5,450.1 4.9,449.2 4.3,453.2 3.7,455.5 3.1,449.7 2.4,449.2 1.8,453.9 1.2,452.6 0.6,450.4 0.0,450.3" fill="#d9eddf"/><line x1="0" y1="442.4" x2="15.9" y2="442.4" stroke="#9fb6a6" stroke-width="1"/></svg>
<div style="left:1616.70px;top:394.90px;width:12.60px;height:119.90px;background:#28282e"></div>
<div style="left:1616.50px;top:394.90px;width:13.00px;height:119.90px;background:#3b6b4c;border:1px solid #141416;border-radius:4px"></div>
<div style="left:1619.00px;top:427.60px;width:9.00px;height:1.00px;background:#7fa68b"></div>
<div style="left:1617.50px;top:489.00px;width:11.00px;height:1.00px;background:#2a4a36"></div>
<svg style="position:absolute;left:1618.2px;top:0;overflow:visible" width="9.6" height="1"><polygon points="0.0,432.2 0.6,432.2 1.3,434.2 1.9,429.9 2.6,435.3 3.2,432.3 3.8,435.0 4.5,435.0 5.1,434.2 5.8,433.8 6.4,435.4 7.0,432.9 7.7,433.6 8.3,435.1 9.0,432.9 9.6,433.4 9.6,450.9 9.0,452.4 8.3,450.1 7.7,450.5 7.0,451.3 6.4,448.9 5.8,450.5 5.1,450.7 4.5,448.4 3.8,448.6 3.2,451.8 2.6,450.2 1.9,456.0 1.3,451.4 0.6,451.1 0.0,451.4" fill="#d9eddf"/><line x1="0" y1="442.4" x2="9.6" y2="442.4" stroke="#9fb6a6" stroke-width="1"/></svg>
<div style="left:331.60px;top:329.00px;width:1.60px;height:62.80px;background:#0e0e10;border-left:1px dashed #777"></div>
<div style="left:331.60px;top:394.90px;width:1.60px;height:119.90px;background:#0e0e10;border-left:1px dashed #777"></div>
<div style="left:27.70px;top:516.10px;width:2.50px;height:99.60px;background:#3b6b4c"></div>
<div style="left:34.00px;top:516.10px;width:6.80px;height:99.60px;background:#3b6b4c;border:1px solid #0e0e10"></div>
<div style="left:50.60px;top:516.10px;width:3.60px;height:99.60px;background:#0e0e10"></div>
<div style="left:51.40px;top:517.10px;width:2.00px;height:97.60px;background:#3b6b4c"></div>
<div style="left:75.00px;top:516.10px;width:3.80px;height:99.60px;background:#3b6b4c;border:1px solid #0e0e10"></div>
<div style="left:84.80px;top:516.10px;width:4.10px;height:99.60px;background:#0e0e10"></div>
<div style="left:85.60px;top:517.10px;width:2.50px;height:97.60px;background:#3b6b4c"></div>
<div style="left:117.00px;top:516.10px;width:2.10px;height:99.60px;background:#3b6b4c"></div>
<div style="left:163.20px;top:516.10px;width:1.80px;height:99.60px;background:#3b6b4c"></div>
<div style="left:166.20px;top:516.10px;width:2.00px;height:99.60px;background:#3b6b4c"></div>
<div style="left:206.00px;top:516.10px;width:9.50px;height:99.60px;background:#3b6b4c;border:1px solid #0e0e10"></div>
<div style="left:215.20px;top:516.10px;width:2.90px;height:99.60px;background:#0e0e10"></div>
<div style="left:216.00px;top:517.10px;width:1.30px;height:97.60px;background:#3b6b4c"></div>
<div style="left:252.30px;top:516.10px;width:5.30px;height:99.60px;background:#3b6b4c;border:1px solid #0e0e10"></div>
<div style="left:329.40px;top:516.10px;width:5.50px;height:99.60px;background:#3b6b4c;border:1px solid #0e0e10"></div>
<div style="left:344.20px;top:516.10px;width:3.80px;height:99.60px;background:#3b6b4c;border:1px solid #0e0e10"></div>
<div style="left:348.00px;top:516.10px;width:5.80px;height:99.60px;background:#3b6b4c;border:1px solid #0e0e10"></div>
<div style="left:368.60px;top:516.10px;width:3.90px;height:99.60px;background:#0e0e10"></div>
<div style="left:369.40px;top:517.10px;width:2.30px;height:97.60px;background:#3b6b4c"></div>
<div style="left:377.00px;top:516.10px;width:7.80px;height:99.60px;background:#3b6b4c;border:1px solid #0e0e10"></div>
<div style="left:392.80px;top:516.10px;width:5.10px;height:99.60px;background:#3b6b4c;border:1px solid #0e0e10"></div>
<div style="left:409.20px;top:516.10px;width:9.30px;height:99.60px;background:#3b6b4c;border:1px solid #0e0e10"></div>
<div style="left:459.00px;top:516.10px;width:6.80px;height:99.60px;background:#3b6b4c;border:1px solid #0e0e10"></div>
<div style="left:467.00px;top:516.10px;width:3.20px;height:99.60px;background:#0e0e10"></div>
<div style="left:467.80px;top:517.10px;width:1.60px;height:97.60px;background:#3b6b4c"></div>
<div style="left:565.30px;top:516.10px;width:2.50px;height:99.60px;background:#3b6b4c"></div>
<div style="left:574.10px;top:516.10px;width:6.60px;height:99.60px;background:#3b6b4c;border:1px solid #0e0e10"></div>
<div style="left:722.20px;top:516.10px;width:5.50px;height:99.60px;background:#3b6b4c;border:1px solid #0e0e10"></div>
<div style="left:733.00px;top:516.10px;width:4.80px;height:99.60px;background:#3b6b4c;border:1px solid #0e0e10"></div>
<div style="left:740.70px;top:516.10px;width:3.70px;height:99.60px;background:#0e0e10"></div>
<div style="left:741.50px;top:517.10px;width:2.10px;height:97.60px;background:#3b6b4c"></div>
<div style="left:794.50px;top:516.10px;width:4.00px;height:99.60px;background:#3b6b4c;border:1px solid #0e0e10"></div>
<div style="left:827.50px;top:516.10px;width:1.70px;height:99.60px;background:#3b6b4c"></div>
<div style="left:919.30px;top:516.10px;width:5.60px;height:99.60px;background:#3b6b4c;border:1px solid #0e0e10"></div>
<div style="left:1026.70px;top:516.10px;width:3.70px;height:99.60px;background:#0e0e10"></div>
<div style="left:1027.50px;top:517.10px;width:2.10px;height:97.60px;background:#3b6b4c"></div>
<div style="left:1057.80px;top:516.10px;width:1.20px;height:99.60px;background:#3b6b4c"></div>
<div style="left:1085.00px;top:516.10px;width:1.80px;height:99.60px;background:#3b6b4c"></div>
<div style="left:1095.00px;top:516.10px;width:1.90px;height:99.60px;background:#3b6b4c"></div>
<div style="left:1125.80px;top:516.10px;width:2.00px;height:99.60px;background:#3b6b4c"></div>
<div style="left:1227.80px;top:516.10px;width:1.50px;height:99.60px;background:#3b6b4c"></div>
<div style="left:1248.00px;top:516.10px;width:2.00px;height:99.60px;background:#3b6b4c"></div>
<div style="left:1270.20px;top:516.10px;width:5.50px;height:99.60px;background:#3b6b4c;border:1px solid #0e0e10"></div>
<div style="left:1301.40px;top:516.10px;width:6.30px;height:99.60px;background:#3b6b4c;border:1px solid #0e0e10"></div>
<div style="left:1433.00px;top:516.10px;width:1.90px;height:99.60px;background:#3b6b4c"></div>
<div style="left:1440.00px;top:516.10px;width:1.90px;height:99.60px;background:#3b6b4c"></div>
<div style="left:1593.00px;top:516.10px;width:2.00px;height:99.60px;background:#3b6b4c"></div>
<div style="left:1644.60px;top:516.10px;width:10.10px;height:99.60px;background:#3b6b4c;border:1px solid #0e0e10"></div>
<div style="left:87.80px;top:617.20px;width:2.90px;height:98.50px;background:#0e0e10"></div>
<div style="left:88.60px;top:618.20px;width:1.30px;height:96.50px;background:#3b6b4c"></div>
<div style="left:90.10px;top:617.20px;width:2.90px;height:98.50px;background:#0e0e10"></div>
<div style="left:90.90px;top:618.20px;width:1.30px;height:96.50px;background:#3b6b4c"></div>
<div style="left:117.90px;top:617.20px;width:2.20px;height:98.50px;background:#3b6b4c"></div>
<div style="left:165.00px;top:617.20px;width:1.20px;height:98.50px;background:#3b6b4c"></div>
<div style="left:346.30px;top:617.20px;width:4.50px;height:98.50px;background:#3b6b4c;border:1px solid #0e0e10"></div>
<div style="left:352.50px;top:617.20px;width:4.50px;height:98.50px;background:#3b6b4c;border:1px solid #0e0e10"></div>
<div style="left:369.70px;top:617.20px;width:1.30px;height:98.50px;background:#3b6b4c"></div>
<div style="left:373.50px;top:617.20px;width:1.70px;height:98.50px;background:#3b6b4c"></div>
<div style="left:465.30px;top:617.20px;width:4.00px;height:98.50px;background:#3b6b4c;border:1px solid #0e0e10"></div>
<div style="left:469.30px;top:617.20px;width:4.10px;height:98.50px;background:#3b6b4c;border:1px solid #0e0e10"></div>
<div style="left:565.30px;top:617.20px;width:2.50px;height:98.50px;background:#3b6b4c"></div>
<div style="left:721.70px;top:617.20px;width:2.50px;height:98.50px;background:#3b6b4c"></div>
<div style="left:920.00px;top:617.20px;width:4.90px;height:98.50px;background:#3b6b4c;border:1px solid #0e0e10"></div>
<div style="left:1303.40px;top:617.20px;width:6.30px;height:98.50px;background:#3b6b4c;border:1px solid #0e0e10"></div>
<div style="left:1619.40px;top:617.20px;width:7.10px;height:98.50px;background:#3b6b4c;border:1px solid #0e0e10"></div>
<div style="left:1632.00px;top:617.20px;width:1.80px;height:98.50px;background:#3b6b4c"></div>
<div style="left:1638.30px;top:617.20px;width:1.70px;height:98.50px;background:#3b6b4c"></div>
<div style="left:1613.90px;top:516.10px;width:30.00px;height:99.60px;background:#3b6b4c;border:1px solid #1c1c20;border-radius:4px"></div>
<div style="left:1615.00px;top:553.00px;width:28.00px;height:1.00px;background:#a9c6b2"></div>
<div style="left:1616.00px;top:552.70px;width:2.50px;height:1.50px;background:#d6e6da"></div>
<div style="left:1620.00px;top:552.70px;width:2.50px;height:1.50px;background:#d6e6da"></div>
<div style="left:1624.00px;top:552.70px;width:2.50px;height:1.50px;background:#d6e6da"></div>
<div style="left:1628.00px;top:552.70px;width:2.50px;height:1.50px;background:#d6e6da"></div>
<div style="left:1632.00px;top:552.70px;width:2.50px;height:1.50px;background:#d6e6da"></div>
<div style="left:1636.00px;top:552.70px;width:2.50px;height:1.50px;background:#d6e6da"></div>
<div style="left:1640.00px;top:552.70px;width:2.50px;height:1.50px;background:#d6e6da"></div>
<div style="left:1615.00px;top:574.20px;width:28.00px;height:0.80px;background:#8fb29a"></div>
<div style="left:1615.00px;top:590.20px;width:28.00px;height:1.00px;background:#2a4a36"></div>
<div class="lbl" style="left:1617.4px;top:598px">Ot...</div>
<div style="left:1642.80px;top:516.10px;width:1.80px;height:99.60px;background:#101012;border-left:1px dashed #6a6a6a"></div>
<div style="left:0.80px;top:717.00px;width:6.00px;height:112.70px;background:#3b6b4c;border:1px solid #1c1c20;border-radius:4px;overflow:hidden"></div>
<div style="left:1.80px;top:760.40px;width:4.00px;height:1.00px;background:#a9c6b2"></div>

<div style="left:1.80px;top:787.10px;width:4.00px;height:1.00px;background:#9fc0a8"></div>
<div style="left:1.80px;top:803.90px;width:4.00px;height:1.10px;background:#24402f"></div>
<div style="left:4.80px;top:717.00px;width:1.80px;height:112.70px;background:#101012;border-left:1px dashed #6a6a6a"></div>
<div style="left:6.50px;top:717.00px;width:89.00px;height:112.70px;background:#3b6b4c;border:1px solid #1c1c20;border-radius:4px;overflow:hidden"></div>
<div style="left:7.50px;top:760.40px;width:87.00px;height:1.00px;background:#a9c6b2"></div>
<div style="left:9.50px;top:760.15px;width:2.60px;height:1.50px;background:#d3e4d8"></div><div style="left:12.85px;top:760.15px;width:1.84px;height:1.50px;background:#d3e4d8"></div><div style="left:15.36px;top:760.15px;width:4.24px;height:1.50px;background:#d3e4d8"></div><div style="left:20.38px;top:760.15px;width:3.70px;height:1.50px;background:#d3e4d8"></div><div style="left:24.68px;top:760.15px;width:2.98px;height:1.50px;background:#d3e4d8"></div><div style="left:28.35px;top:760.15px;width:3.68px;height:1.50px;background:#d3e4d8"></div><div style="left:32.69px;top:760.15px;width:3.86px;height:1.50px;background:#d3e4d8"></div><div style="left:37.42px;top:760.15px;width:2.14px;height:1.50px;background:#d3e4d8"></div><div style="left:40.33px;top:760.15px;width:4.22px;height:1.50px;background:#d3e4d8"></div><div style="left:45.21px;top:760.15px;width:3.21px;height:1.50px;background:#d3e4d8"></div><div style="left:49.31px;top:760.15px;width:1.63px;height:1.50px;background:#d3e4d8"></div><div style="left:51.66px;top:760.15px;width:2.06px;height:1.50px;background:#d3e4d8"></div><div style="left:54.54px;top:760.15px;width:4.79px;height:1.50px;background:#d3e4d8"></div><div style="left:60.04px;top:760.15px;width:1.85px;height:1.50px;background:#d3e4d8"></div><div style="left:62.62px;top:760.15px;width:3.39px;height:1.50px;background:#d3e4d8"></div><div style="left:66.80px;top:760.15px;width:3.29px;height:1.50px;background:#d3e4d8"></div><div style="left:70.85px;top:760.15px;width:4.40px;height:1.50px;background:#d3e4d8"></div><div style="left:75.96px;top:760.15px;width:2.94px;height:1.50px;background:#d3e4d8"></div><div style="left:79.77px;top:760.15px;width:2.24px;height:1.50px;background:#d3e4d8"></div><div style="left:82.78px;top:760.15px;width:2.87px;height:1.50px;background:#d3e4d8"></div><div style="left:86.46px;top:760.15px;width:1.93px;height:1.50px;background:#d3e4d8"></div><div style="left:89.28px;top:760.15px;width:2.74px;height:1.50px;background:#d3e4d8"></div>
<div style="left:7.50px;top:787.10px;width:87.00px;height:1.00px;background:#9fc0a8"></div>
<div style="left:7.50px;top:803.90px;width:87.00px;height:1.10px;background:#24402f"></div>
<div class="lbl" style="left:10.5px;top:811px;width:59.0px">Otis McD...</div>
<div style="left:71.6px;top:808.5px;width:20px;height:15px"><svg class="cv" width="20" height="15" viewBox="0 0 20 15"><path d="M1.2,5.7 C2.8,4 4,2.1 5.5,2.1 C7,2.1 8.2,3.6 9.7,5.7 L13.2,11 C13.9,12.1 15.2,12.6 18.6,9.9" fill="none" stroke="#000" stroke-width="1.3" stroke-linecap="round"/><circle cx="5.5" cy="4" r="1.6" fill="none" stroke="#000" stroke-width="1.2"/><circle cx="14.6" cy="11.9" r="1.6" fill="none" stroke="#000" stroke-width="1.2"/></svg></div>
<div style="left:96.50px;top:717.00px;width:14.80px;height:112.70px;background:#3b6b4c;border:1px solid #1c1c20;border-radius:4px;overflow:hidden"></div>
<div style="left:97.50px;top:760.40px;width:12.80px;height:1.00px;background:#a9c6b2"></div>
<div style="left:99.50px;top:760.15px;width:2.46px;height:1.50px;background:#d3e4d8"></div><div style="left:102.62px;top:760.15px;width:1.55px;height:1.50px;background:#d3e4d8"></div><div style="left:104.83px;top:760.15px;width:2.97px;height:1.50px;background:#d3e4d8"></div>
<div style="left:97.50px;top:789.90px;width:12.80px;height:1.00px;background:#9fc0a8"></div>
<div style="left:97.50px;top:803.90px;width:12.80px;height:1.10px;background:#24402f"></div>
<div style="left:109.30px;top:717.00px;width:1.80px;height:112.70px;background:#101012;border-left:1px dashed #6a6a6a"></div>
<div style="left:111.10px;top:717.00px;width:132.40px;height:112.70px;background:#3b6b4c;border:1px solid #1c1c20;border-radius:4px;overflow:hidden"></div>
<div style="left:112.10px;top:760.40px;width:130.40px;height:1.00px;background:#a9c6b2"></div>
<div style="left:114.10px;top:760.15px;width:2.73px;height:1.50px;background:#d3e4d8"></div><div style="left:117.44px;top:760.15px;width:2.29px;height:1.50px;background:#d3e4d8"></div><div style="left:120.52px;top:760.15px;width:4.79px;height:1.50px;background:#d3e4d8"></div><div style="left:126.02px;top:760.15px;width:2.27px;height:1.50px;background:#d3e4d8"></div><div style="left:129.11px;top:760.15px;width:2.87px;height:1.50px;background:#d3e4d8"></div><div style="left:132.56px;top:760.15px;width:1.95px;height:1.50px;background:#d3e4d8"></div><div style="left:135.33px;top:760.15px;width:4.33px;height:1.50px;background:#d3e4d8"></div><div style="left:140.42px;top:760.15px;width:3.14px;height:1.50px;background:#d3e4d8"></div><div style="left:144.28px;top:760.15px;width:2.29px;height:1.50px;background:#d3e4d8"></div><div style="left:147.46px;top:760.15px;width:2.74px;height:1.50px;background:#d3e4d8"></div><div style="left:150.95px;top:760.15px;width:4.37px;height:1.50px;background:#d3e4d8"></div><div style="left:156.14px;top:760.15px;width:3.14px;height:1.50px;background:#d3e4d8"></div><div style="left:159.90px;top:760.15px;width:3.42px;height:1.50px;background:#d3e4d8"></div><div style="left:163.87px;top:760.15px;width:4.42px;height:1.50px;background:#d3e4d8"></div><div style="left:168.93px;top:760.15px;width:4.48px;height:1.50px;background:#d3e4d8"></div><div style="left:174.01px;top:760.15px;width:2.82px;height:1.50px;background:#d3e4d8"></div><div style="left:177.43px;top:760.15px;width:2.99px;height:1.50px;background:#d3e4d8"></div><div style="left:181.00px;top:760.15px;width:1.51px;height:1.50px;background:#d3e4d8"></div><div style="left:183.29px;top:760.15px;width:2.48px;height:1.50px;background:#d3e4d8"></div><div style="left:186.38px;top:760.15px;width:2.56px;height:1.50px;background:#d3e4d8"></div><div style="left:189.62px;top:760.15px;width:3.00px;height:1.50px;background:#d3e4d8"></div><div style="left:193.38px;top:760.15px;width:3.81px;height:1.50px;background:#d3e4d8"></div><div style="left:197.83px;top:760.15px;width:4.75px;height:1.50px;background:#d3e4d8"></div><div style="left:203.42px;top:760.15px;width:1.70px;height:1.50px;background:#d3e4d8"></div><div style="left:205.95px;top:760.15px;width:4.67px;height:1.50px;background:#d3e4d8"></div><div style="left:211.44px;top:760.15px;width:1.99px;height:1.50px;background:#d3e4d8"></div><div style="left:214.26px;top:760.15px;width:3.72px;height:1.50px;background:#d3e4d8"></div><div style="left:218.48px;top:760.15px;width:1.54px;height:1.50px;background:#d3e4d8"></div><div style="left:220.90px;top:760.15px;width:3.80px;height:1.50px;background:#d3e4d8"></div><div style="left:225.30px;top:760.15px;width:1.86px;height:1.50px;background:#d3e4d8"></div><div style="left:227.71px;top:760.15px;width:2.32px;height:1.50px;background:#d3e4d8"></div><div style="left:230.84px;top:760.15px;width:2.71px;height:1.50px;background:#d3e4d8"></div><div style="left:234.11px;top:760.15px;width:4.66px;height:1.50px;background:#d3e4d8"></div><div style="left:239.60px;top:760.15px;width:0.90px;height:1.50px;background:#d3e4d8"></div>
<div style="left:112.10px;top:787.10px;width:130.40px;height:1.00px;background:#9fc0a8"></div>
<div style="left:112.10px;top:803.90px;width:130.40px;height:1.10px;background:#24402f"></div>
<div class="lbl" style="left:115.1px;top:811px;width:102.4px">Otis McDonald «»...</div>
<div style="left:219.6px;top:808.5px;width:20px;height:15px"><svg class="cv" width="20" height="15" viewBox="0 0 20 15"><path d="M1.2,5.7 C2.8,4 4,2.1 5.5,2.1 C7,2.1 8.2,3.6 9.7,5.7 L13.2,11 C13.9,12.1 15.2,12.6 18.6,9.9" fill="none" stroke="#000" stroke-width="1.3" stroke-linecap="round"/><circle cx="5.5" cy="4" r="1.6" fill="none" stroke="#000" stroke-width="1.2"/><circle cx="14.6" cy="11.9" r="1.6" fill="none" stroke="#000" stroke-width="1.2"/></svg></div>
<div style="left:243.30px;top:717.00px;width:153.80px;height:112.70px;background:#3b6b4c;border:1px solid #1c1c20;border-radius:4px;overflow:hidden"></div>
<div style="left:244.30px;top:760.40px;width:151.80px;height:1.00px;background:#a9c6b2"></div>
<div style="left:246.30px;top:760.15px;width:3.63px;height:1.50px;background:#d3e4d8"></div><div style="left:250.74px;top:760.15px;width:3.84px;height:1.50px;background:#d3e4d8"></div><div style="left:255.44px;top:760.15px;width:4.26px;height:1.50px;background:#d3e4d8"></div><div style="left:260.53px;top:760.15px;width:2.19px;height:1.50px;background:#d3e4d8"></div><div style="left:263.50px;top:760.15px;width:3.36px;height:1.50px;background:#d3e4d8"></div><div style="left:267.66px;top:760.15px;width:3.04px;height:1.50px;background:#d3e4d8"></div><div style="left:271.54px;top:760.15px;width:3.44px;height:1.50px;background:#d3e4d8"></div><div style="left:275.59px;top:760.15px;width:2.32px;height:1.50px;background:#d3e4d8"></div><div style="left:278.47px;top:760.15px;width:3.23px;height:1.50px;background:#d3e4d8"></div><div style="left:282.22px;top:760.15px;width:3.13px;height:1.50px;background:#d3e4d8"></div><div style="left:285.91px;top:760.15px;width:3.22px;height:1.50px;background:#d3e4d8"></div><div style="left:289.83px;top:760.15px;width:3.39px;height:1.50px;background:#d3e4d8"></div><div style="left:294.06px;top:760.15px;width:1.52px;height:1.50px;background:#d3e4d8"></div><div style="left:296.42px;top:760.15px;width:3.14px;height:1.50px;background:#d3e4d8"></div><div style="left:300.28px;top:760.15px;width:3.83px;height:1.50px;background:#d3e4d8"></div><div style="left:304.95px;top:760.15px;width:2.81px;height:1.50px;background:#d3e4d8"></div><div style="left:308.43px;top:760.15px;width:4.86px;height:1.50px;background:#d3e4d8"></div><div style="left:313.82px;top:760.15px;width:3.73px;height:1.50px;background:#d3e4d8"></div><div style="left:318.30px;top:760.15px;width:1.60px;height:1.50px;background:#d3e4d8"></div><div style="left:320.65px;top:760.15px;width:3.89px;height:1.50px;background:#d3e4d8"></div><div style="left:325.41px;top:760.15px;width:2.66px;height:1.50px;background:#d3e4d8"></div><div style="left:328.96px;top:760.15px;width:3.29px;height:1.50px;background:#d3e4d8"></div><div style="left:332.94px;top:760.15px;width:4.64px;height:1.50px;background:#d3e4d8"></div><div style="left:338.10px;top:760.15px;width:4.01px;height:1.50px;background:#d3e4d8"></div><div style="left:342.86px;top:760.15px;width:2.69px;height:1.50px;background:#d3e4d8"></div><div style="left:346.39px;top:760.15px;width:2.78px;height:1.50px;background:#d3e4d8"></div><div style="left:349.86px;top:760.15px;width:3.34px;height:1.50px;background:#d3e4d8"></div><div style="left:354.01px;top:760.15px;width:2.24px;height:1.50px;background:#d3e4d8"></div><div style="left:356.92px;top:760.15px;width:2.98px;height:1.50px;background:#d3e4d8"></div><div style="left:360.62px;top:760.15px;width:4.39px;height:1.50px;background:#d3e4d8"></div><div style="left:365.63px;top:760.15px;width:4.40px;height:1.50px;background:#d3e4d8"></div><div style="left:370.69px;top:760.15px;width:3.26px;height:1.50px;background:#d3e4d8"></div><div style="left:374.56px;top:760.15px;width:3.27px;height:1.50px;background:#d3e4d8"></div><div style="left:378.72px;top:760.15px;width:3.79px;height:1.50px;background:#d3e4d8"></div><div style="left:383.33px;top:760.15px;width:2.66px;height:1.50px;background:#d3e4d8"></div><div style="left:386.62px;top:760.15px;width:2.55px;height:1.50px;background:#d3e4d8"></div><div style="left:389.90px;top:760.15px;width:3.72px;height:1.50px;background:#d3e4d8"></div>
<div style="left:244.30px;top:787.10px;width:151.80px;height:1.00px;background:#9fc0a8"></div>
<div style="left:244.30px;top:803.90px;width:151.80px;height:1.10px;background:#24402f"></div>
<div class="lbl" style="left:247.3px;top:811px;width:123.8px">Otis McDonald «» Fall ...</div>
<div style="left:373.2px;top:808.5px;width:20px;height:15px"><svg class="cv" width="20" height="15" viewBox="0 0 20 15"><path d="M1.2,5.7 C2.8,4 4,2.1 5.5,2.1 C7,2.1 8.2,3.6 9.7,5.7 L13.2,11 C13.9,12.1 15.2,12.6 18.6,9.9" fill="none" stroke="#000" stroke-width="1.3" stroke-linecap="round"/><circle cx="5.5" cy="4" r="1.6" fill="none" stroke="#000" stroke-width="1.2"/><circle cx="14.6" cy="11.9" r="1.6" fill="none" stroke="#000" stroke-width="1.2"/></svg></div>
<div style="left:395.10px;top:717.00px;width:1.80px;height:112.70px;background:#101012;border-left:1px dashed #6a6a6a"></div>
<div style="left:397.40px;top:717.00px;width:12.30px;height:112.70px;background:#3b6b4c;border:1px solid #1c1c20;border-radius:4px;overflow:hidden"></div>
<div style="left:398.40px;top:760.40px;width:10.30px;height:1.00px;background:#a9c6b2"></div>
<div style="left:400.40px;top:760.15px;width:1.64px;height:1.50px;background:#d3e4d8"></div><div style="left:402.83px;top:760.15px;width:3.87px;height:1.50px;background:#d3e4d8"></div>
<div style="left:398.40px;top:787.10px;width:10.30px;height:1.00px;background:#9fc0a8"></div>
<div style="left:398.40px;top:803.90px;width:10.30px;height:1.10px;background:#24402f"></div>
<div style="left:407.70px;top:717.00px;width:1.80px;height:112.70px;background:#101012;border-left:1px dashed #6a6a6a"></div>
<div style="left:409.50px;top:717.00px;width:160.20px;height:112.70px;background:#3b6b4c;border:1px solid #1c1c20;border-radius:4px;overflow:hidden"></div>
<div style="left:410.50px;top:760.40px;width:158.20px;height:1.00px;background:#a9c6b2"></div>
<div style="left:412.50px;top:760.15px;width:1.67px;height:1.50px;background:#d3e4d8"></div><div style="left:414.79px;top:760.15px;width:1.52px;height:1.50px;background:#d3e4d8"></div><div style="left:416.89px;top:760.15px;width:4.73px;height:1.50px;background:#d3e4d8"></div><div style="left:422.36px;top:760.15px;width:3.80px;height:1.50px;background:#d3e4d8"></div><div style="left:426.98px;top:760.15px;width:4.68px;height:1.50px;background:#d3e4d8"></div><div style="left:432.41px;top:760.15px;width:3.66px;height:1.50px;background:#d3e4d8"></div><div style="left:436.82px;top:760.15px;width:3.94px;height:1.50px;background:#d3e4d8"></div><div style="left:441.49px;top:760.15px;width:3.88px;height:1.50px;background:#d3e4d8"></div><div style="left:445.96px;top:760.15px;width:3.83px;height:1.50px;background:#d3e4d8"></div><div style="left:450.48px;top:760.15px;width:4.17px;height:1.50px;background:#d3e4d8"></div><div style="left:455.19px;top:760.15px;width:2.13px;height:1.50px;background:#d3e4d8"></div><div style="left:457.84px;top:760.15px;width:4.21px;height:1.50px;background:#d3e4d8"></div><div style="left:462.91px;top:760.15px;width:3.80px;height:1.50px;background:#d3e4d8"></div><div style="left:467.36px;top:760.15px;width:4.38px;height:1.50px;background:#d3e4d8"></div><div style="left:472.55px;top:760.15px;width:3.47px;height:1.50px;background:#d3e4d8"></div><div style="left:476.62px;top:760.15px;width:2.56px;height:1.50px;background:#d3e4d8"></div><div style="left:479.85px;top:760.15px;width:2.61px;height:1.50px;background:#d3e4d8"></div><div style="left:483.13px;top:760.15px;width:3.75px;height:1.50px;background:#d3e4d8"></div><div style="left:487.75px;top:760.15px;width:1.69px;height:1.50px;background:#d3e4d8"></div><div style="left:490.17px;top:760.15px;width:1.64px;height:1.50px;background:#d3e4d8"></div><div style="left:492.36px;top:760.15px;width:4.34px;height:1.50px;background:#d3e4d8"></div><div style="left:497.42px;top:760.15px;width:4.72px;height:1.50px;background:#d3e4d8"></div><div style="left:502.82px;top:760.15px;width:1.55px;height:1.50px;background:#d3e4d8"></div><div style="left:505.02px;top:760.15px;width:3.57px;height:1.50px;background:#d3e4d8"></div><div style="left:509.47px;top:760.15px;width:4.93px;height:1.50px;background:#d3e4d8"></div><div style="left:515.09px;top:760.15px;width:2.94px;height:1.50px;background:#d3e4d8"></div><div style="left:518.58px;top:760.15px;width:3.76px;height:1.50px;background:#d3e4d8"></div><div style="left:522.92px;top:760.15px;width:2.03px;height:1.50px;background:#d3e4d8"></div><div style="left:525.45px;top:760.15px;width:1.52px;height:1.50px;background:#d3e4d8"></div><div style="left:527.74px;top:760.15px;width:1.93px;height:1.50px;background:#d3e4d8"></div><div style="left:530.56px;top:760.15px;width:1.81px;height:1.50px;background:#d3e4d8"></div><div style="left:533.21px;top:760.15px;width:1.95px;height:1.50px;background:#d3e4d8"></div><div style="left:535.67px;top:760.15px;width:4.02px;height:1.50px;background:#d3e4d8"></div><div style="left:540.29px;top:760.15px;width:4.07px;height:1.50px;background:#d3e4d8"></div><div style="left:544.93px;top:760.15px;width:1.68px;height:1.50px;background:#d3e4d8"></div><div style="left:547.41px;top:760.15px;width:4.00px;height:1.50px;background:#d3e4d8"></div><div style="left:552.25px;top:760.15px;width:4.05px;height:1.50px;background:#d3e4d8"></div><div style="left:556.84px;top:760.15px;width:3.70px;height:1.50px;background:#d3e4d8"></div><div style="left:561.33px;top:760.15px;width:3.11px;height:1.50px;background:#d3e4d8"></div><div style="left:565.31px;top:760.15px;width:1.39px;height:1.50px;background:#d3e4d8"></div>
<div style="left:410.50px;top:787.10px;width:158.20px;height:1.00px;background:#9fc0a8"></div>
<div style="left:410.50px;top:803.90px;width:158.20px;height:1.10px;background:#24402f"></div>
<div class="lbl" style="left:413.5px;top:811px;width:130.2px">Otis McDonald «» Fall ...</div>
<div style="left:545.8px;top:808.5px;width:20px;height:15px"><svg class="cv" width="20" height="15" viewBox="0 0 20 15"><path d="M1.2,5.7 C2.8,4 4,2.1 5.5,2.1 C7,2.1 8.2,3.6 9.7,5.7 L13.2,11 C13.9,12.1 15.2,12.6 18.6,9.9" fill="none" stroke="#000" stroke-width="1.3" stroke-linecap="round"/><circle cx="5.5" cy="4" r="1.6" fill="none" stroke="#000" stroke-width="1.2"/><circle cx="14.6" cy="11.9" r="1.6" fill="none" stroke="#000" stroke-width="1.2"/></svg></div>
<div style="left:409.70px;top:717.00px;width:1.80px;height:112.70px;background:#101012;border-left:1px dashed #6a6a6a"></div>
<div style="left:826.50px;top:717.00px;width:89.80px;height:112.70px;background:#3b6b4c;border:1px solid #1c1c20;border-radius:4px;overflow:hidden"></div>
<div style="left:827.50px;top:760.40px;width:87.80px;height:1.00px;background:#a9c6b2"></div>
<div style="left:829.50px;top:760.15px;width:4.01px;height:1.50px;background:#d3e4d8"></div><div style="left:834.01px;top:760.15px;width:1.55px;height:1.50px;background:#d3e4d8"></div><div style="left:836.33px;top:760.15px;width:4.36px;height:1.50px;background:#d3e4d8"></div><div style="left:841.22px;top:760.15px;width:2.59px;height:1.50px;background:#d3e4d8"></div><div style="left:844.60px;top:760.15px;width:2.08px;height:1.50px;background:#d3e4d8"></div><div style="left:847.53px;top:760.15px;width:3.20px;height:1.50px;background:#d3e4d8"></div><div style="left:851.25px;top:760.15px;width:2.79px;height:1.50px;background:#d3e4d8"></div><div style="left:854.77px;top:760.15px;width:3.04px;height:1.50px;background:#d3e4d8"></div><div style="left:858.57px;top:760.15px;width:2.01px;height:1.50px;background:#d3e4d8"></div><div style="left:861.40px;top:760.15px;width:2.77px;height:1.50px;background:#d3e4d8"></div><div style="left:864.93px;top:760.15px;width:3.70px;height:1.50px;background:#d3e4d8"></div><div style="left:869.30px;top:760.15px;width:2.85px;height:1.50px;background:#d3e4d8"></div><div style="left:872.97px;top:760.15px;width:4.81px;height:1.50px;background:#d3e4d8"></div><div style="left:878.59px;top:760.15px;width:3.48px;height:1.50px;background:#d3e4d8"></div><div style="left:882.69px;top:760.15px;width:1.71px;height:1.50px;background:#d3e4d8"></div><div style="left:885.29px;top:760.15px;width:3.96px;height:1.50px;background:#d3e4d8"></div><div style="left:890.08px;top:760.15px;width:2.66px;height:1.50px;background:#d3e4d8"></div><div style="left:893.49px;top:760.15px;width:4.92px;height:1.50px;background:#d3e4d8"></div><div style="left:899.24px;top:760.15px;width:3.60px;height:1.50px;background:#d3e4d8"></div><div style="left:903.47px;top:760.15px;width:3.00px;height:1.50px;background:#d3e4d8"></div><div style="left:907.32px;top:760.15px;width:2.82px;height:1.50px;background:#d3e4d8"></div><div style="left:910.91px;top:760.15px;width:2.39px;height:1.50px;background:#d3e4d8"></div>
<div style="left:827.50px;top:781.30px;width:87.80px;height:1.00px;background:#9fc0a8"></div>
<div style="left:827.50px;top:803.90px;width:87.80px;height:1.10px;background:#24402f"></div>
<div class="lbl" style="left:830.5px;top:811px;width:59.8px">Otis McD...</div>
<div style="left:892.4px;top:808.5px;width:20px;height:15px"><svg class="cv" width="20" height="15" viewBox="0 0 20 15"><path d="M1.2,5.7 C2.8,4 4,2.1 5.5,2.1 C7,2.1 8.2,3.6 9.7,5.7 L13.2,11 C13.9,12.1 15.2,12.6 18.6,9.9" fill="none" stroke="#000" stroke-width="1.3" stroke-linecap="round"/><circle cx="5.5" cy="4" r="1.6" fill="none" stroke="#000" stroke-width="1.2"/><circle cx="14.6" cy="11.9" r="1.6" fill="none" stroke="#000" stroke-width="1.2"/></svg></div>
<div style="left:918.40px;top:717.00px;width:74.00px;height:112.70px;background:#3b6b4c;border:1px solid #1c1c20;border-radius:4px;overflow:hidden"></div>
<div style="left:919.40px;top:760.40px;width:72.00px;height:1.00px;background:#a9c6b2"></div>
<div style="left:921.40px;top:760.15px;width:4.33px;height:1.50px;background:#d3e4d8"></div><div style="left:926.34px;top:760.15px;width:1.51px;height:1.50px;background:#d3e4d8"></div><div style="left:928.45px;top:760.15px;width:2.98px;height:1.50px;background:#d3e4d8"></div><div style="left:932.16px;top:760.15px;width:4.36px;height:1.50px;background:#d3e4d8"></div><div style="left:937.37px;top:760.15px;width:1.65px;height:1.50px;background:#d3e4d8"></div><div style="left:939.86px;top:760.15px;width:4.34px;height:1.50px;background:#d3e4d8"></div><div style="left:945.04px;top:760.15px;width:3.50px;height:1.50px;background:#d3e4d8"></div><div style="left:949.16px;top:760.15px;width:4.48px;height:1.50px;background:#d3e4d8"></div><div style="left:954.46px;top:760.15px;width:3.90px;height:1.50px;background:#d3e4d8"></div><div style="left:959.22px;top:760.15px;width:2.71px;height:1.50px;background:#d3e4d8"></div><div style="left:962.47px;top:760.15px;width:3.44px;height:1.50px;background:#d3e4d8"></div><div style="left:966.72px;top:760.15px;width:2.20px;height:1.50px;background:#d3e4d8"></div><div style="left:969.73px;top:760.15px;width:4.76px;height:1.50px;background:#d3e4d8"></div><div style="left:975.08px;top:760.15px;width:3.62px;height:1.50px;background:#d3e4d8"></div><div style="left:979.48px;top:760.15px;width:3.13px;height:1.50px;background:#d3e4d8"></div><div style="left:983.19px;top:760.15px;width:2.39px;height:1.50px;background:#d3e4d8"></div><div style="left:986.38px;top:760.15px;width:3.02px;height:1.50px;background:#d3e4d8"></div>
<div style="left:919.40px;top:783.00px;width:72.00px;height:1.00px;background:#9fc0a8"></div>
<div style="left:919.40px;top:803.90px;width:72.00px;height:1.10px;background:#24402f"></div>
<div class="lbl" style="left:922.4px;top:811px;width:44.0px">Otis ...</div>
<div style="left:968.5px;top:808.5px;width:20px;height:15px"><svg class="cv" width="20" height="15" viewBox="0 0 20 15"><path d="M1.2,5.7 C2.8,4 4,2.1 5.5,2.1 C7,2.1 8.2,3.6 9.7,5.7 L13.2,11 C13.9,12.1 15.2,12.6 18.6,9.9" fill="none" stroke="#000" stroke-width="1.3" stroke-linecap="round"/><circle cx="5.5" cy="4" r="1.6" fill="none" stroke="#000" stroke-width="1.2"/><circle cx="14.6" cy="11.9" r="1.6" fill="none" stroke="#000" stroke-width="1.2"/></svg></div>
<div style="left:992.50px;top:717.00px;width:236.90px;height:112.70px;background:#3b6b4c;border:1px solid #1c1c20;border-radius:4px;overflow:hidden"></div>
<div style="left:993.50px;top:760.40px;width:234.90px;height:1.00px;background:#a9c6b2"></div>
<div style="left:995.50px;top:760.15px;width:1.81px;height:1.50px;background:#d3e4d8"></div><div style="left:998.13px;top:760.15px;width:4.20px;height:1.50px;background:#d3e4d8"></div><div style="left:1002.93px;top:760.15px;width:3.53px;height:1.50px;background:#d3e4d8"></div><div style="left:1007.31px;top:760.15px;width:4.60px;height:1.50px;background:#d3e4d8"></div><div style="left:1012.62px;top:760.15px;width:3.17px;height:1.50px;background:#d3e4d8"></div><div style="left:1016.52px;top:760.15px;width:2.16px;height:1.50px;background:#d3e4d8"></div><div style="left:1019.26px;top:760.15px;width:2.13px;height:1.50px;background:#d3e4d8"></div><div style="left:1022.17px;top:760.15px;width:2.77px;height:1.50px;background:#d3e4d8"></div><div style="left:1025.67px;top:760.15px;width:2.91px;height:1.50px;background:#d3e4d8"></div><div style="left:1029.29px;top:760.15px;width:2.02px;height:1.50px;background:#d3e4d8"></div><div style="left:1031.83px;top:760.15px;width:4.99px;height:1.50px;background:#d3e4d8"></div><div style="left:1037.47px;top:760.15px;width:1.87px;height:1.50px;background:#d3e4d8"></div><div style="left:1040.09px;top:760.15px;width:4.26px;height:1.50px;background:#d3e4d8"></div><div style="left:1044.91px;top:760.15px;width:3.59px;height:1.50px;background:#d3e4d8"></div><div style="left:1049.14px;top:760.15px;width:3.32px;height:1.50px;background:#d3e4d8"></div><div style="left:1052.96px;top:760.15px;width:1.62px;height:1.50px;background:#d3e4d8"></div><div style="left:1055.48px;top:760.15px;width:4.53px;height:1.50px;background:#d3e4d8"></div><div style="left:1060.70px;top:760.15px;width:3.49px;height:1.50px;background:#d3e4d8"></div><div style="left:1064.79px;top:760.15px;width:4.23px;height:1.50px;background:#d3e4d8"></div><div style="left:1069.69px;top:760.15px;width:4.81px;height:1.50px;background:#d3e4d8"></div><div style="left:1075.31px;top:760.15px;width:4.37px;height:1.50px;background:#d3e4d8"></div><div style="left:1080.56px;top:760.15px;width:2.39px;height:1.50px;background:#d3e4d8"></div><div style="left:1083.46px;top:760.15px;width:2.20px;height:1.50px;background:#d3e4d8"></div><div style="left:1086.24px;top:760.15px;width:1.79px;height:1.50px;background:#d3e4d8"></div><div style="left:1088.55px;top:760.15px;width:3.45px;height:1.50px;background:#d3e4d8"></div><div style="left:1092.85px;top:760.15px;width:3.10px;height:1.50px;background:#d3e4d8"></div><div style="left:1096.84px;top:760.15px;width:4.68px;height:1.50px;background:#d3e4d8"></div><div style="left:1102.05px;top:760.15px;width:3.59px;height:1.50px;background:#d3e4d8"></div><div style="left:1106.30px;top:760.15px;width:1.92px;height:1.50px;background:#d3e4d8"></div><div style="left:1109.10px;top:760.15px;width:2.40px;height:1.50px;background:#d3e4d8"></div><div style="left:1112.23px;top:760.15px;width:3.74px;height:1.50px;background:#d3e4d8"></div><div style="left:1116.85px;top:760.15px;width:3.84px;height:1.50px;background:#d3e4d8"></div><div style="left:1121.35px;top:760.15px;width:3.07px;height:1.50px;background:#d3e4d8"></div><div style="left:1124.99px;top:760.15px;width:4.88px;height:1.50px;background:#d3e4d8"></div><div style="left:1130.76px;top:760.15px;width:2.28px;height:1.50px;background:#d3e4d8"></div><div style="left:1133.55px;top:760.15px;width:2.40px;height:1.50px;background:#d3e4d8"></div><div style="left:1136.59px;top:760.15px;width:4.66px;height:1.50px;background:#d3e4d8"></div><div style="left:1142.11px;top:760.15px;width:4.43px;height:1.50px;background:#d3e4d8"></div><div style="left:1147.06px;top:760.15px;width:4.25px;height:1.50px;background:#d3e4d8"></div><div style="left:1152.10px;top:760.15px;width:3.76px;height:1.50px;background:#d3e4d8"></div><div style="left:1156.76px;top:760.15px;width:1.70px;height:1.50px;background:#d3e4d8"></div><div style="left:1159.01px;top:760.15px;width:4.14px;height:1.50px;background:#d3e4d8"></div><div style="left:1164.03px;top:760.15px;width:3.87px;height:1.50px;background:#d3e4d8"></div><div style="left:1168.52px;top:760.15px;width:3.57px;height:1.50px;background:#d3e4d8"></div><div style="left:1172.89px;top:760.15px;width:1.87px;height:1.50px;background:#d3e4d8"></div><div style="left:1175.39px;top:760.15px;width:2.40px;height:1.50px;background:#d3e4d8"></div><div style="left:1178.34px;top:760.15px;width:3.18px;height:1.50px;background:#d3e4d8"></div><div style="left:1182.09px;top:760.15px;width:2.33px;height:1.50px;background:#d3e4d8"></div><div style="left:1184.98px;top:760.15px;width:3.87px;height:1.50px;background:#d3e4d8"></div><div style="left:1189.36px;top:760.15px;width:4.01px;height:1.50px;background:#d3e4d8"></div><div style="left:1193.95px;top:760.15px;width:1.63px;height:1.50px;background:#d3e4d8"></div><div style="left:1196.44px;top:760.15px;width:2.27px;height:1.50px;background:#d3e4d8"></div><div style="left:1199.59px;top:760.15px;width:4.53px;height:1.50px;background:#d3e4d8"></div><div style="left:1204.98px;top:760.15px;width:1.99px;height:1.50px;background:#d3e4d8"></div><div style="left:1207.64px;top:760.15px;width:1.84px;height:1.50px;background:#d3e4d8"></div><div style="left:1210.36px;top:760.15px;width:4.45px;height:1.50px;background:#d3e4d8"></div><div style="left:1215.56px;top:760.15px;width:3.08px;height:1.50px;background:#d3e4d8"></div><div style="left:1219.27px;top:760.15px;width:4.38px;height:1.50px;background:#d3e4d8"></div><div style="left:1224.35px;top:760.15px;width:2.05px;height:1.50px;background:#d3e4d8"></div>
<div style="left:993.50px;top:784.80px;width:234.90px;height:1.00px;background:#9fc0a8"></div>
<div style="left:993.50px;top:803.90px;width:234.90px;height:1.10px;background:#24402f"></div>
<div class="lbl" style="left:996.5px;top:811px;width:206.9px">Otis McDonald «» Fall Colors (128 kbp...</div>
<div style="left:1205.5px;top:808.5px;width:20px;height:15px"><svg class="cv" width="20" height="15" viewBox="0 0 20 15"><path d="M1.2,5.7 C2.8,4 4,2.1 5.5,2.1 C7,2.1 8.2,3.6 9.7,5.7 L13.2,11 C13.9,12.1 15.2,12.6 18.6,9.9" fill="none" stroke="#000" stroke-width="1.3" stroke-linecap="round"/><circle cx="5.5" cy="4" r="1.6" fill="none" stroke="#000" stroke-width="1.2"/><circle cx="14.6" cy="11.9" r="1.6" fill="none" stroke="#000" stroke-width="1.2"/></svg></div>
<div style="left:1619.00px;top:717.00px;width:2.00px;height:112.70px;background:#3b6b4c"></div>
<div style="left:1623.90px;top:717.00px;width:3.40px;height:112.70px;background:#0e0e10"></div>
<div style="left:1624.70px;top:718.00px;width:1.80px;height:110.70px;background:#3b6b4c"></div>
<div style="left:563.70px;top:831.00px;width:262.80px;height:49.30px;background:#3b6b4c;border:1px solid #1c1c20;border-radius:4px;overflow:hidden"></div>
<div style="left:564.70px;top:849.80px;width:260.80px;height:1.00px;background:#9fc0a8"></div>
<div style="left:564.70px;top:855.10px;width:260.80px;height:1.10px;background:#24402f"></div>
<div class="lbl" style="left:567.7px;top:862px;width:232.8px">Otis McDonald «» Long Time (128 kbps).mp3</div>
<div style="left:802.6px;top:859.7px;width:20px;height:15px"><svg class="cv" width="20" height="15" viewBox="0 0 20 15"><path d="M1.2,5.7 C2.8,4 4,2.1 5.5,2.1 C7,2.1 8.2,3.6 9.7,5.7 L13.2,11 C13.9,12.1 15.2,12.6 18.6,9.9" fill="none" stroke="#000" stroke-width="1.3" stroke-linecap="round"/><circle cx="5.5" cy="4" r="1.6" fill="none" stroke="#000" stroke-width="1.2"/><circle cx="14.6" cy="11.9" r="1.6" fill="none" stroke="#000" stroke-width="1.2"/></svg></div>
<div style="left:565.20px;top:842.60px;width:259.80px;height:0.80px;background:#6f947a"></div>
<div style="left:1229.50px;top:831.00px;width:387.00px;height:49.30px;background:#3b6b4c;border:1px solid #1c1c20;border-radius:4px;overflow:hidden"></div>
<div style="left:1230.50px;top:849.80px;width:385.00px;height:1.00px;background:#9fc0a8"></div>
<div style="left:1230.50px;top:855.10px;width:385.00px;height:1.10px;background:#24402f"></div>
<div class="lbl" style="left:1233.5px;top:862px;width:357.0px">Otis McDonald «» Pathways (feat. Wil Blades) (128 kbps).mp3</div>
<div style="left:1592.6px;top:859.7px;width:20px;height:15px"><svg class="cv" width="20" height="15" viewBox="0 0 20 15"><path d="M1.2,5.7 C2.8,4 4,2.1 5.5,2.1 C7,2.1 8.2,3.6 9.7,5.7 L13.2,11 C13.9,12.1 15.2,12.6 18.6,9.9" fill="none" stroke="#000" stroke-width="1.3" stroke-linecap="round"/><circle cx="5.5" cy="4" r="1.6" fill="none" stroke="#000" stroke-width="1.2"/><circle cx="14.6" cy="11.9" r="1.6" fill="none" stroke="#000" stroke-width="1.2"/></svg></div>
<div style="left:1231.00px;top:842.60px;width:384.00px;height:0.80px;background:#6f947a"></div>
<div style="left:0.00px;top:36.90px;width:1668.00px;height:1.20px;background:#1e1e22"></div>
<div style="left:5.00px;top:35.80px;width:2.00px;height:1.40px;background:#1a88e8"></div>
<div style="left:28.50px;top:35.80px;width:4.20px;height:1.40px;background:#1a88e8"></div>
<div style="left:35.00px;top:35.80px;width:5.00px;height:1.40px;background:#1a88e8"></div>
<div style="left:51.60px;top:35.80px;width:4.40px;height:1.40px;background:#1a88e8"></div>
<div style="left:57.40px;top:35.80px;width:5.60px;height:1.40px;background:#1a88e8"></div>
<div style="left:88.00px;top:35.80px;width:2.60px;height:1.40px;background:#1a88e8"></div>
<div style="left:114.00px;top:35.80px;width:1.00px;height:1.40px;background:#1a88e8"></div>
<div style="left:136.00px;top:35.80px;width:5.50px;height:1.40px;background:#1a88e8"></div>
<div style="left:150.60px;top:35.80px;width:6.80px;height:1.40px;background:#1a88e8"></div>
<div style="left:163.70px;top:35.80px;width:22.10px;height:1.40px;background:#1a88e8"></div>
<div style="left:253.00px;top:35.80px;width:9.00px;height:1.40px;background:#1a88e8"></div>
<div style="left:279.50px;top:35.80px;width:2.00px;height:1.40px;background:#1a88e8"></div>
<div style="left:299.00px;top:35.80px;width:7.00px;height:1.40px;background:#1a88e8"></div>
<div style="left:330.60px;top:35.80px;width:3.80px;height:1.40px;background:#1a88e8"></div>
<div style="left:344.50px;top:35.80px;width:11.10px;height:1.40px;background:#1a88e8"></div>
<div style="left:369.00px;top:35.80px;width:15.80px;height:1.40px;background:#1a88e8"></div>
<div style="left:460.80px;top:35.80px;width:11.20px;height:1.40px;background:#1a88e8"></div>
<div style="left:517.70px;top:35.80px;width:5.05px;height:1.40px;background:#1a88e8"></div>
<div style="left:522.75px;top:35.80px;width:5.05px;height:1.40px;background:#e2321e"></div>
<div style="left:564.80px;top:35.80px;width:3.50px;height:1.40px;background:#1a88e8"></div>
<div style="left:568.30px;top:35.80px;width:3.50px;height:1.40px;background:#e2321e"></div>
<div style="left:574.90px;top:35.80px;width:3.37px;height:1.40px;background:#1a88e8"></div>
<div style="left:578.27px;top:35.80px;width:3.37px;height:1.40px;background:#e2321e"></div>
<div style="left:581.63px;top:35.80px;width:3.37px;height:1.40px;background:#1a88e8"></div>
<div style="left:587.50px;top:35.80px;width:12.50px;height:1.40px;background:#e2321e"></div>
<div style="left:617.70px;top:35.80px;width:9.30px;height:1.40px;background:#1a88e8"></div>
<div style="left:646.60px;top:35.80px;width:15.40px;height:1.40px;background:#e2321e"></div>
<div style="left:685.00px;top:35.80px;width:3.25px;height:1.40px;background:#1a88e8"></div>
<div style="left:688.25px;top:35.80px;width:3.25px;height:1.40px;background:#e2321e"></div>
<div style="left:708.00px;top:35.80px;width:7.00px;height:1.40px;background:#e2321e"></div>
<div style="left:721.70px;top:35.80px;width:8.97px;height:1.40px;background:#1a88e8"></div>
<div style="left:730.67px;top:35.80px;width:8.97px;height:1.40px;background:#e2321e"></div>
<div style="left:739.63px;top:35.80px;width:8.97px;height:1.40px;background:#1a88e8"></div>
<div style="left:794.70px;top:35.80px;width:5.05px;height:1.40px;background:#1a88e8"></div>
<div style="left:799.75px;top:35.80px;width:5.05px;height:1.40px;background:#e2321e"></div>
<div style="left:827.50px;top:35.80px;width:8.00px;height:1.40px;background:#1a88e8"></div>
<div style="left:877.80px;top:35.80px;width:2.00px;height:1.40px;background:#1a88e8"></div>
<div style="left:920.60px;top:35.80px;width:10.40px;height:1.40px;background:#e2321e"></div>
<div style="left:1027.60px;top:35.80px;width:3.70px;height:1.40px;background:#1a88e8"></div>
<div style="left:1031.30px;top:35.80px;width:3.70px;height:1.40px;background:#e2321e"></div>
<div style="left:1058.60px;top:35.80px;width:8.13px;height:1.40px;background:#1a88e8"></div>
<div style="left:1066.73px;top:35.80px;width:8.13px;height:1.40px;background:#e2321e"></div>
<div style="left:1074.87px;top:35.80px;width:8.13px;height:1.40px;background:#1a88e8"></div>
<div style="left:1085.50px;top:35.80px;width:9.83px;height:1.40px;background:#e2321e"></div>
<div style="left:1095.33px;top:35.80px;width:9.83px;height:1.40px;background:#1a88e8"></div>
<div style="left:1105.17px;top:35.80px;width:9.83px;height:1.40px;background:#e2321e"></div>
<div style="left:1126.60px;top:35.80px;width:9.40px;height:1.40px;background:#e2321e"></div>
<div style="left:1227.80px;top:35.80px;width:5.00px;height:1.40px;background:#1a88e8"></div>
<div style="left:1232.80px;top:35.80px;width:5.00px;height:1.40px;background:#e2321e"></div>
<div style="left:1248.00px;top:35.80px;width:13.00px;height:1.40px;background:#1a88e8"></div>
<div style="left:1304.00px;top:35.80px;width:25.00px;height:1.40px;background:#e2321e"></div>
<div style="left:1433.00px;top:35.80px;width:4.50px;height:1.40px;background:#1a88e8"></div>
<div style="left:1437.50px;top:35.80px;width:4.50px;height:1.40px;background:#e2321e"></div>
<div style="left:1545.60px;top:35.80px;width:8.55px;height:1.40px;background:#e2321e"></div>
<div style="left:1554.15px;top:35.80px;width:8.55px;height:1.40px;background:#1a88e8"></div>
<div style="left:1594.00px;top:35.80px;width:8.50px;height:1.40px;background:#e2321e"></div>
<div style="left:1620.00px;top:35.80px;width:7.00px;height:1.40px;background:#1a88e8"></div>
<div style="left:1632.50px;top:35.80px;width:7.50px;height:1.40px;background:#1a88e8"></div>
<div style="left:1644.00px;top:35.80px;width:1.00px;height:1.40px;background:#1a88e8"></div>
<div style="left:0.00px;top:881.00px;width:1668.00px;height:12.80px;background:#2c2c32"></div>
<div style="left:0.00px;top:883.40px;width:869.40px;height:7.90px;background:#5a5e66;border-radius:4px"></div>
<div style="left:0.00px;top:892.50px;width:1668.00px;height:5.50px;background:#18181b"></div>
<div style="left:0.00px;top:0.00px;width:1.20px;height:881.00px;background:#642626"></div>
<svg style="position:absolute;left:0;top:0" width="8" height="9"><polygon points="0,0 7,0 7,3 1.5,9 0,9" fill="#e2513f"/></svg>
</body></html>
